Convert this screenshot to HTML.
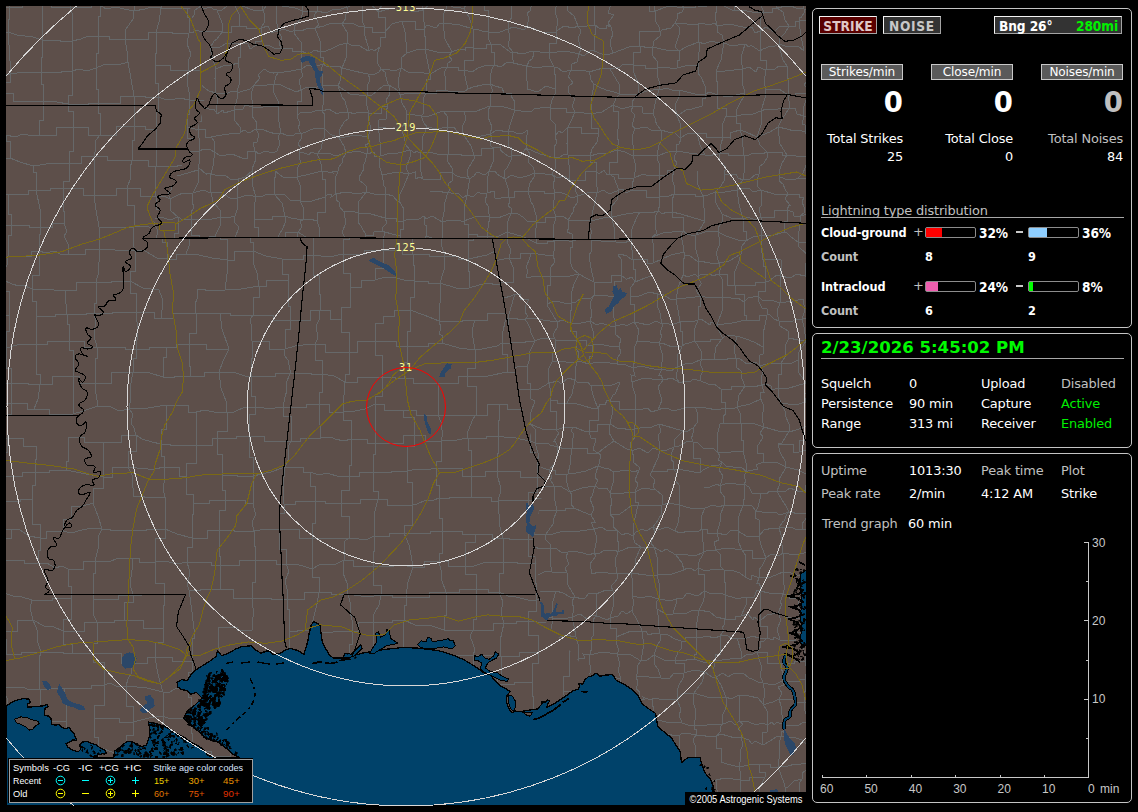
<!DOCTYPE html>
<html lang="en"><head><meta charset="utf-8"><title>Lightning Detector</title>
<style>
html,body{margin:0;padding:0;background:#000;}
body{width:1138px;height:812px;position:relative;overflow:hidden;font-family:"DejaVu Sans","Liberation Sans",sans-serif;color:#fff;}
.abs{position:absolute;white-space:nowrap;}
.panel{position:absolute;box-sizing:border-box;border:1px solid #c4c4c4;border-radius:5px;}
.v{font-family:"DejaVu Sans","Liberation Sans",sans-serif;font-size:12.9px;line-height:16px;color:#fff;letter-spacing:-0.15px;}
.g{color:#c0c0c0;}
.gr{color:#00f000;}
.tb{font-family:"DejaVu Sans Condensed","DejaVu Sans","Liberation Sans",sans-serif;font-weight:bold;font-size:12.6px;line-height:16px;letter-spacing:-0.1px;}
.btn{position:absolute;box-sizing:border-box;border:1px solid;border-color:#f4f4f4 #a4a4a4 #a4a4a4 #f4f4f4;text-align:center;}
.lbl{position:absolute;box-sizing:border-box;border:1px solid #c8c8c8;background:#5a5a5a;text-align:center;height:16px;width:82px;font-size:12.1px;line-height:14px;color:#fff;letter-spacing:-0.15px;}
.big{position:absolute;font-family:"DejaVu Sans","Liberation Sans",sans-serif;font-weight:bold;font-size:27.5px;line-height:30px;text-align:right;width:60px;}
.bar{position:absolute;box-sizing:border-box;width:51px;height:11px;border:1px solid #8c8c8c;border-radius:2px;background:#000;}
.bar i{position:absolute;left:0;top:0;height:9px;display:block;}
.ax{font-family:"Liberation Sans","DejaVu Sans",sans-serif;font-size:12px;line-height:12px;color:#c8c8c8;}
</style></head>
<body>
<svg class="abs" style="left:6px;top:6px;" width="800" height="800" viewBox="6 6 800 800">
<rect x="6" y="6" width="800" height="800" fill="#5d4f4a"/>
<defs><clipPath id="mc"><rect x="6" y="6" width="800" height="800"/></clipPath></defs>
<g clip-path="url(#mc)" shape-rendering="crispEdges">
<clipPath id="cd"><path d="M190.0 6.0 806.0 6.0 806.0 806.0 700.0 806.0 544.0 620.0 533.0 540.0 545.0 481.0 520.0 400.0 492.0 238.0 145.0 238.0 190.0 150.0 205.0 105.0Z"/></clipPath><clipPath id="cs"><path d="M0 0H812V812H0Z M190.0 6.0 806.0 6.0 806.0 806.0 700.0 806.0 544.0 620.0 533.0 540.0 545.0 481.0 520.0 400.0 492.0 238.0 145.0 238.0 190.0 150.0 205.0 105.0Z" clip-rule="evenodd"/></clipPath>
<g clip-path="url(#cs)"><path d="M-27 -29 -21 -28 -11 -31 0 -28 8 -30 M-27 -29 -27 -20 -31 -20 -31 8 M8 -30 29 -30 29 -27 37 -27 M8 -30 8 -6 9 -6 9 7 M37 -27 53 -27 53 -25 63 -25 M37 -27 37 -9 42 -9 42 4 M63 -25 73 -25 78 -27 86 -27 93 -26 M63 -25 63 -17 70 -17 70 7 M93 -26 116 -26 116 -30 125 -30 M125 -30 134 -30 134 -21 160 -21 M125 -30 125 -4 134 -4 134 11 M160 -21 178 -21 178 -28 187 -28 M160 -21 162 -15 161 -7 161 3 161 8 M187 -28 197 -28 197 -20 225 -20 M225 -20 242 -20 242 -26 255 -26 M225 -20 225 -2 225 -2 225 12 M255 -26 262 -28 273 -29 283 -31 291 -30 M255 -26 255 -9 258 -9 258 3 M291 -30 304 -30 304 -28 320 -28 M291 -30 288 -22 288 -10 287 -1 284 8 M320 -28 326 -28 326 -30 343 -30 M320 -28 317 -17 315 -10 313 -1 310 6 M343 -30 351 -30 351 -21 376 -21 M343 -30 343 -13 343 -13 343 1 M376 -21 389 -24 405 -24 M376 -21 373 -4 373 9 M405 -24 431 -24 431 -27 442 -27 M405 -24 405 -10 405 -10 405 3 M442 -27 460 -27 460 -30 472 -30 M442 -27 442 -6 439 -6 439 10 M472 -30 480 -30 480 -29 497 -29 M472 -30 470 -20 469 -5 466 5 M497 -29 524 -29 524 -26 535 -26 M497 -29 497 -9 503 -9 503 11 M535 -26 544 -26 544 -24 562 -24 M535 -26 535 -10 537 -10 537 10 M562 -24 578 -24 578 -27 594 -27 M562 -24 562 -2 561 -2 561 5 M594 -27 614 -27 614 -23 630 -23 M594 -27 594 -7 593 -7 593 11 M630 -23 636 -23 636 -24 654 -24 M654 -24 666 -24 679 -23 688 -20 M688 -20 707 -20 707 -28 722 -28 M688 -20 686 -13 684 -5 685 6 M722 -28 733 -26 746 -27 756 -30 M722 -28 724 -21 721 -11 723 -4 720 3 M756 -30 764 -30 764 -22 780 -22 M756 -30 748 -10 744 5 M780 -22 795 -22 795 -25 808 -25 M808 -25 808 -8 817 -8 817 8 M-31 8 -20 6 -3 9 9 7 M-31 8 -31 25 -25 25 -25 38 M9 7 22 7 22 4 42 4 M9 7 9 19 8 19 8 32 M42 4 51 4 51 7 70 7 M42 4 42 26 42 26 42 40 M70 7 91 7 91 5 100 5 M70 7 73 16 72 27 72 41 M100 5 106 9 116 7 124 9 134 11 M100 5 100 16 98 16 98 36 M134 11 145 9 151 7 161 8 M134 11 133 19 126 29 125 39 M161 8 174 8 174 8 187 8 M161 8 159 22 156 32 M187 8 199 8 211 9 225 12 M187 8 187 17 189 17 189 33 M225 12 244 5 258 3 M225 12 225 18 221 18 221 32 M258 3 258 13 248 13 248 33 M284 8 296 5 310 6 M284 8 284 18 280 18 280 35 M310 6 332 6 332 1 343 1 M310 6 310 28 310 28 310 41 M343 1 360 1 360 9 373 9 M343 1 343 14 348 14 348 33 M373 9 373 27 375 27 375 35 M405 3 419 3 419 10 439 10 M405 3 405 24 407 24 407 32 M439 10 443 26 444 43 M466 5 476 8 491 11 503 11 M466 5 465 13 467 23 471 30 471 37 M503 11 527 11 527 10 537 10 M503 11 503 24 497 24 497 32 M537 10 553 10 553 5 561 5 M537 10 537 17 531 17 531 34 M561 5 574 5 574 11 593 11 M561 5 563 20 568 33 M593 11 614 11 614 2 631 2 M593 11 593 30 589 30 589 42 M631 2 635 1 642 3 649 1 653 3 M631 2 631 11 627 18 629 23 626 33 M653 3 665 4 675 2 685 6 M653 3 653 15 658 15 658 31 M685 6 693 8 704 7 713 6 720 3 M720 3 727 3 737 4 744 5 M720 3 720 20 723 20 723 39 M744 5 755 5 755 7 779 7 M744 5 746 17 748 27 747 35 M779 7 779 27 777 27 777 40 M817 8 817 31 812 31 812 40 M-25 38 -8 38 -8 32 8 32 M-25 38 -27 46 -28 54 -27 65 M8 32 17 35 33 37 42 40 M8 32 9 45 10 61 10 74 M42 40 60 40 60 41 72 41 M42 40 42 57 41 57 41 72 M72 41 81 39 88 36 98 36 M72 41 72 54 72 54 72 71 M98 36 109 36 109 39 125 39 M98 36 98 53 96 53 96 68 M125 39 148 39 148 32 156 32 M125 39 127 51 128 62 M156 32 172 32 172 33 189 33 M156 32 156 53 155 53 155 65 M189 33 198 31 204 32 214 33 221 32 M189 33 187 44 191 54 188 62 189 70 M221 32 233 32 233 33 248 33 M221 32 221 50 228 50 228 67 M248 33 272 33 272 35 280 35 M248 33 254 47 255 60 259 74 M280 35 292 35 292 41 310 41 M280 35 280 49 290 49 290 66 M310 41 322 38 336 37 348 33 M310 41 310 50 313 50 313 65 M348 33 368 33 368 35 375 35 M348 33 348 46 343 46 343 64 M375 35 389 33 407 32 M375 35 375 55 379 55 379 73 M407 32 425 32 425 43 444 43 M407 32 407 49 413 49 413 68 M444 43 460 43 460 37 471 37 M444 43 444 51 442 51 442 72 M471 37 484 37 484 32 497 32 M471 37 470 56 466 70 M497 32 516 32 516 34 531 34 M497 32 497 52 507 52 507 71 M531 34 546 34 546 33 568 33 M531 34 531 43 533 50 537 59 536 68 M568 33 579 33 579 42 589 42 M568 33 568 60 560 60 560 71 M589 42 609 42 609 33 626 33 M589 42 589 59 593 59 593 72 M626 33 634 33 634 31 658 31 M658 31 679 31 679 43 688 43 M658 31 658 42 656 42 656 73 M688 43 688 49 690 56 690 58 691 64 M723 39 738 39 738 35 747 35 M723 39 723 48 715 48 715 64 M747 35 754 38 763 39 770 37 777 40 M747 35 747 45 755 45 755 72 M777 40 784 39 795 38 802 40 812 40 M777 40 777 49 777 49 777 72 M812 40 812 50 818 50 818 70 M-27 65 -18 65 -18 74 10 74 M-27 65 -27 81 -27 81 -27 100 M10 74 24 72 41 72 M10 74 10 82 2 82 2 93 M41 72 61 72 61 71 72 71 M41 72 41 84 43 84 43 101 M72 71 79 69 87 71 96 68 M72 71 72 95 68 95 68 104 M96 68 103 65 111 64 118 65 128 62 M96 68 96 89 98 89 98 103 M128 62 131 79 134 96 M155 65 170 65 170 70 189 70 M155 65 155 83 158 83 158 97 M189 70 208 70 208 67 228 67 M189 70 187 79 188 87 189 92 189 100 M228 67 239 67 239 74 259 74 M228 67 228 83 220 83 220 98 M259 74 279 74 279 66 290 66 M259 74 259 90 250 90 250 104 M290 66 297 66 297 65 313 65 M290 66 286 79 283 90 283 98 M313 65 326 64 343 64 M313 65 313 89 317 89 317 104 M343 64 369 64 369 73 379 73 M343 64 347 83 346 104 M379 73 387 71 397 71 403 71 413 68 M379 73 379 82 378 82 378 99 M413 68 419 70 427 70 434 72 442 72 M413 68 413 81 409 81 409 93 M442 72 450 72 455 70 460 71 466 70 M442 72 442 87 439 87 439 95 M466 70 477 70 477 71 507 71 M466 70 466 79 465 79 465 103 M507 71 526 71 526 68 536 68 M507 71 507 78 504 88 501 90 498 99 M536 68 553 68 553 71 560 71 M536 68 536 84 536 84 536 100 M560 71 568 69 578 71 585 74 593 72 M560 71 563 87 562 99 M593 72 606 72 606 67 632 67 M593 72 593 83 596 83 596 102 M632 67 642 67 642 73 656 73 M656 73 677 73 677 64 691 64 M656 73 656 87 654 87 654 96 M691 64 691 84 691 84 691 99 M715 64 739 64 739 72 755 72 M715 64 715 85 720 85 720 102 M755 72 771 72 771 72 777 72 M755 72 755 91 755 91 755 98 M777 72 791 72 791 70 818 70 M777 72 777 85 782 85 782 99 M-27 100 -18 100 -18 93 2 93 M-27 100 -27 115 -26 130 M2 93 13 93 13 101 43 101 M43 101 57 102 68 104 M43 101 43 120 39 120 39 135 M68 104 88 104 88 103 98 103 M68 104 68 111 73 111 73 127 M98 103 120 103 120 96 134 96 M98 103 98 113 100 113 100 135 M134 96 145 96 145 97 158 97 M134 96 134 118 134 118 134 126 M158 97 164 99 175 99 180 98 189 100 M158 97 158 111 156 111 156 129 M189 100 210 100 210 98 220 98 M189 100 189 114 187 114 187 127 M220 98 227 97 233 101 243 105 250 104 M220 98 220 109 218 109 218 132 M250 104 269 104 269 98 283 98 M250 104 252 113 254 122 257 135 M283 98 291 99 301 101 308 102 317 104 M283 98 283 121 281 121 281 133 M317 104 329 104 329 104 346 104 M317 104 317 113 318 113 318 126 M346 104 359 104 359 99 378 99 M346 104 349 114 351 120 352 126 352 136 M378 99 390 99 390 93 409 93 M378 99 378 110 378 124 375 135 M409 93 425 94 439 95 M439 95 453 95 453 103 465 103 M439 95 439 116 446 116 446 134 M465 103 476 103 476 99 498 99 M465 103 465 111 467 111 467 129 M498 99 509 99 509 100 536 100 M498 99 498 113 502 113 502 128 M536 100 550 100 550 99 562 99 M536 100 536 115 529 115 529 128 M562 99 562 111 567 111 567 124 M596 102 611 102 611 100 621 100 M596 102 596 122 596 122 596 129 M621 100 643 100 643 96 654 96 M621 100 621 120 620 120 620 128 M654 96 672 98 691 99 M654 96 654 105 658 105 658 130 M691 99 700 101 710 103 720 102 M691 99 687 109 686 117 687 128 683 136 M720 102 733 102 733 98 755 98 M720 102 720 119 722 119 722 136 M755 98 773 98 773 99 782 99 M755 98 755 110 745 110 745 127 M782 99 803 99 803 101 812 101 M782 99 782 120 775 120 775 133 M-26 130 -5 130 -5 135 6 135 M-26 130 -26 144 -26 144 -26 166 M6 135 15 137 23 134 33 136 39 135 M6 135 6 141 10 141 10 158 M39 135 56 135 56 127 73 127 M73 127 88 127 88 135 100 135 M73 127 73 151 69 151 69 163 M100 135 116 135 116 126 134 126 M100 135 96 140 95 147 96 148 94 156 M134 126 145 126 145 129 156 129 M134 126 134 140 132 140 132 160 M156 129 156 139 156 139 156 166 M187 127 203 131 218 132 M187 127 187 138 194 138 194 165 M218 132 239 132 239 135 257 135 M218 132 218 152 218 152 218 165 M257 135 271 135 281 133 M257 135 257 148 249 148 249 165 M281 133 300 128 318 126 M281 133 281 146 284 146 284 159 M318 126 336 126 336 136 352 136 M318 126 318 143 317 143 317 166 M352 136 359 138 369 138 375 135 M352 136 352 150 344 150 344 157 M375 135 389 135 389 130 408 130 M375 135 373 140 376 148 378 154 378 158 M408 130 419 131 426 131 436 135 446 134 M408 130 408 149 404 149 404 157 M446 134 453 134 453 129 467 129 M446 134 446 149 435 149 435 157 M467 129 476 129 476 128 502 128 M502 128 513 129 519 129 529 128 M502 128 502 137 505 137 505 158 M529 128 543 124 553 126 567 124 M567 124 579 124 579 129 596 129 M567 124 567 140 562 140 562 155 M596 129 606 128 620 128 M620 128 639 128 639 130 658 130 M620 128 620 144 629 144 629 162 M658 130 658 153 653 153 653 161 M683 136 683 144 693 144 693 156 M722 136 722 151 723 151 723 160 M745 127 745 147 750 147 750 165 M775 133 795 133 795 126 809 126 M775 133 775 151 780 151 780 161 M809 126 809 152 814 152 814 167 M-26 166 -3 166 -3 158 10 158 M-26 166 -26 178 -27 178 -27 196 M10 158 20 162 33 166 M33 166 53 163 69 163 M33 166 33 172 36 172 36 190 M69 163 81 163 81 156 94 156 M69 163 69 181 63 181 63 188 M94 156 107 156 107 160 132 160 M94 156 94 175 94 195 M132 160 148 160 148 166 156 166 M132 160 130 169 131 177 127 188 M156 166 177 166 177 165 194 165 M156 166 155 181 156 196 M194 165 208 165 208 165 218 165 M194 165 194 172 196 172 196 194 M218 165 231 165 231 165 249 165 M218 165 218 174 220 174 220 189 M249 165 275 165 275 159 284 159 M249 165 249 184 252 184 252 192 M284 159 302 162 317 166 M284 159 284 182 281 182 281 191 M317 166 332 166 332 157 344 157 M317 166 317 188 313 188 313 198 M344 157 353 158 367 157 378 158 M344 157 344 164 351 172 353 182 353 193 M378 158 387 158 387 157 404 157 M378 158 378 175 375 175 375 198 M404 157 425 157 425 157 435 157 M404 157 404 169 407 169 407 190 M435 157 444 157 444 159 469 159 M435 157 435 173 434 173 434 191 M469 159 496 159 496 158 505 158 M469 159 472 178 471 192 M505 158 515 158 515 157 533 157 M505 158 505 176 498 176 498 192 M533 157 553 157 553 155 562 155 M533 157 533 181 527 181 527 189 M562 155 578 154 592 155 M562 155 562 165 559 165 559 191 M592 155 592 172 590 172 590 186 M629 162 643 162 643 161 653 161 M629 162 629 176 624 176 624 189 M653 161 664 159 672 158 686 157 693 156 M653 161 653 171 658 171 658 192 M693 156 710 156 710 160 723 160 M693 156 693 177 691 177 691 194 M723 160 732 160 732 165 750 165 M723 160 724 176 722 197 M750 165 767 165 767 161 780 161 M750 165 750 183 749 183 749 190 M780 161 781 168 783 176 786 183 787 188 M814 167 814 187 815 187 815 194 M-27 196 -3 196 -3 194 8 194 M8 194 28 194 28 190 36 190 M8 194 8 214 11 214 11 225 M36 190 50 190 50 188 63 188 M36 190 40 209 40 227 M63 188 83 188 83 195 94 195 M63 188 63 211 64 211 64 223 M94 195 116 195 116 188 127 188 M94 195 96 210 99 227 M127 188 140 188 140 196 156 196 M127 188 127 205 134 205 134 227 M156 196 172 196 172 194 196 194 M156 196 156 209 162 209 162 228 M196 194 210 194 210 189 220 189 M196 194 196 210 194 210 194 225 M220 189 220 205 220 205 220 217 M252 192 271 192 271 191 281 191 M252 192 252 199 250 199 250 221 M281 191 294 191 294 198 313 198 M281 191 279 205 278 216 280 227 M313 198 331 198 331 193 353 193 M313 198 313 209 317 209 317 225 M353 193 353 212 349 212 349 225 M375 198 393 198 393 190 407 190 M375 198 375 206 378 206 378 217 M407 190 423 192 434 191 M407 190 407 203 413 203 413 226 M434 191 451 191 451 192 471 192 M434 191 434 214 440 214 440 223 M471 192 485 192 498 192 M471 192 474 199 470 209 473 218 M498 192 514 192 527 189 M498 192 498 209 505 209 505 220 M527 189 536 188 546 192 559 191 M527 189 527 209 528 209 528 220 M559 191 577 191 577 186 590 186 M559 191 559 199 567 199 567 219 M590 186 608 186 608 189 624 189 M590 186 590 196 594 205 598 217 598 229 M624 189 637 189 637 192 658 192 M624 189 624 205 626 205 626 222 M658 192 671 192 671 194 691 194 M658 192 656 199 655 209 656 217 657 225 M691 194 704 194 704 197 722 197 M691 194 691 216 691 216 691 224 M722 197 733 197 733 190 749 190 M722 197 722 208 721 208 721 218 M749 190 773 190 773 188 787 188 M749 190 749 210 746 210 746 220 M787 188 807 188 807 194 815 194 M787 188 784 206 784 221 M815 194 815 210 813 210 813 217 M-30 227 -20 227 -20 225 11 225 M-30 227 -30 235 -30 235 -30 251 M11 225 29 225 29 227 40 227 M11 225 11 235 8 235 8 256 M40 227 52 227 52 223 64 223 M40 227 40 234 39 234 39 251 M64 223 67 232 64 236 68 244 68 254 M99 227 112 227 112 227 134 227 M99 227 99 239 99 239 99 249 M134 227 143 226 155 228 162 228 M134 227 133 235 133 243 135 250 M162 228 162 242 167 242 167 259 M194 225 211 225 211 217 220 217 M194 225 194 232 189 239 189 246 186 254 M220 217 234 217 234 221 250 221 M220 217 220 239 227 239 227 260 M250 221 250 242 253 242 253 251 M280 227 306 227 306 225 317 225 M317 225 326 223 337 223 349 225 M317 225 317 237 313 237 313 255 M349 225 368 225 368 217 378 217 M349 225 349 239 343 239 343 254 M378 217 389 217 389 226 413 226 M378 217 378 226 383 226 383 250 M413 226 429 226 429 223 440 223 M413 226 412 241 413 254 M440 223 464 223 464 218 473 218 M440 223 441 233 441 244 445 256 M473 218 490 218 490 220 505 220 M473 218 473 240 468 240 468 259 M505 220 503 228 501 238 502 248 M528 220 555 220 555 219 567 219 M567 219 587 219 587 229 598 229 M567 219 567 231 563 231 563 252 M598 229 609 229 609 222 626 222 M626 222 638 222 638 225 657 225 M626 222 626 241 624 241 624 258 M657 225 679 225 679 224 691 224 M657 225 657 237 651 237 651 257 M691 224 705 223 721 218 M691 224 691 232 692 232 692 249 M721 218 729 218 729 220 746 220 M721 218 720 232 721 244 724 257 M746 220 763 222 784 221 M746 220 746 229 755 229 755 251 M784 221 784 237 779 237 779 253 M813 217 813 238 818 238 818 255 M-30 251 -30 265 -27 265 -27 284 M8 256 31 256 31 251 39 251 M8 256 7 265 3 273 3 280 M39 251 46 253 55 251 60 254 68 254 M39 251 39 275 32 275 32 289 M68 254 85 254 85 249 99 249 M99 249 115 250 135 250 M99 249 100 259 98 265 98 275 96 282 M135 250 145 251 157 258 167 259 M135 250 135 271 130 271 130 281 M167 259 176 259 176 254 186 254 M186 254 199 255 212 258 227 260 M227 260 234 260 234 251 253 251 M227 260 227 274 225 290 M253 251 266 256 282 259 M253 251 254 265 257 273 259 286 M282 259 303 259 303 255 313 255 M282 259 282 274 288 274 288 280 M313 255 329 257 343 254 M313 255 313 275 319 275 319 284 M343 254 364 254 364 250 383 250 M343 254 343 273 350 273 350 287 M383 250 402 250 402 254 413 254 M383 250 383 268 375 268 375 280 M413 254 429 254 429 256 445 256 M413 254 413 265 414 265 414 281 M445 256 458 256 458 259 468 259 M445 256 444 270 440 283 M468 259 487 255 502 248 M468 259 468 271 469 271 469 288 M502 248 516 248 516 254 527 254 M502 248 502 262 508 269 508 282 M527 254 537 254 537 252 563 252 M527 254 527 270 535 270 535 283 M563 252 574 249 582 251 591 252 M591 252 607 252 607 258 624 258 M591 252 591 272 591 272 591 281 M624 258 634 259 641 256 651 257 M624 258 622 274 622 290 M651 257 660 255 674 256 680 250 692 249 M651 257 651 267 657 267 657 282 M692 249 704 249 704 257 724 257 M692 249 692 280 693 280 693 291 M724 257 746 257 746 251 755 251 M724 257 721 265 719 268 720 275 718 281 M755 251 762 251 762 253 779 253 M755 251 755 264 746 264 746 280 M779 253 798 255 818 255 M818 255 818 267 809 267 809 282 M-27 284 -16 284 -16 280 3 280 M3 280 12 284 19 286 23 285 32 289 M3 280 3 291 9 291 9 315 M32 289 42 289 49 289 59 291 65 290 M32 289 32 301 36 301 36 316 M65 290 76 290 76 282 96 282 M65 290 66 304 67 314 M96 282 111 282 111 281 130 281 M96 282 96 303 94 303 94 313 M130 281 143 288 159 290 M130 281 130 293 136 293 136 312 M159 290 162 298 162 310 161 318 M197 289 205 289 205 290 225 290 M197 289 197 299 195 304 196 313 M225 290 241 289 259 286 M259 286 266 286 266 280 288 280 M259 286 259 297 253 297 253 315 M288 280 288 306 290 306 290 320 M319 284 319 294 320 294 320 310 M350 287 361 287 361 280 375 280 M350 287 350 307 341 307 341 319 M375 280 385 277 396 278 404 280 414 281 M414 281 428 281 428 283 440 283 M414 281 414 297 410 297 410 310 M440 283 456 288 469 288 M440 283 440 303 439 321 M469 288 479 285 489 283 496 285 508 282 M508 282 525 282 525 283 535 283 M508 282 508 302 508 302 508 313 M535 283 546 285 557 284 565 284 M535 283 535 293 528 293 528 312 M565 284 565 303 564 303 564 318 M591 281 601 281 601 290 622 290 M591 281 592 295 598 306 600 319 M622 290 622 298 627 309 628 319 M657 282 669 286 679 286 693 291 M657 282 657 294 656 294 656 317 M693 291 711 291 711 281 718 281 M693 291 690 299 687 307 687 310 682 319 M718 281 718 298 716 298 716 321 M746 280 750 290 750 305 752 314 M779 280 795 280 795 282 809 282 M779 280 775 295 777 313 M809 282 812 298 814 318 M-24 321 -6 321 -6 315 9 315 M-24 321 -24 331 -30 331 -30 342 M9 315 9 331 6 331 6 348 M36 316 55 316 55 314 67 314 M36 316 36 333 36 333 36 344 M67 314 86 314 86 313 94 313 M67 314 67 324 69 324 69 341 M94 313 112 313 112 312 136 312 M94 313 96 322 94 332 94 336 97 347 M136 312 154 312 154 318 161 318 M136 312 138 331 136 349 M161 318 173 318 173 313 196 313 M196 313 214 313 214 313 220 313 M196 313 196 333 189 333 189 344 M220 313 230 313 230 315 253 315 M220 313 222 329 229 349 M253 315 273 315 273 320 290 320 M253 315 250 320 252 327 251 332 252 341 M290 320 310 320 310 310 320 310 M290 320 290 329 285 329 285 349 M320 310 330 310 330 319 341 319 M320 310 319 320 316 326 318 338 315 344 M341 319 341 332 349 332 349 352 M383 316 394 316 394 310 410 310 M383 316 383 323 375 323 375 341 M410 310 424 315 439 321 M410 310 410 331 407 331 407 346 M439 321 462 321 462 320 475 320 M439 321 441 328 439 334 443 336 442 343 M475 320 487 320 487 313 508 313 M475 320 472 330 473 338 475 350 M508 313 518 313 518 312 528 312 M508 313 505 322 503 331 502 343 M528 312 538 315 551 315 564 318 M564 318 589 318 589 319 600 319 M564 318 564 325 568 325 568 344 M600 319 610 319 610 319 628 319 M628 319 648 319 648 317 656 317 M628 319 628 340 624 340 624 352 M656 317 666 317 666 319 682 319 M656 317 655 324 659 328 657 338 657 343 M682 319 703 319 703 321 716 321 M682 319 682 326 685 326 685 346 M716 321 729 321 729 314 752 314 M716 321 716 338 721 338 721 352 M752 314 767 314 767 313 777 313 M752 314 752 323 746 323 746 346 M777 313 777 325 778 325 778 353 M814 318 814 326 810 332 808 335 808 342 M-30 342 -3 342 -3 348 6 348 M-30 342 -31 355 -32 367 -30 377 M6 348 17 345 23 344 36 344 M6 348 6 368 11 368 11 383 M36 344 47 344 47 341 69 341 M36 344 36 374 40 374 40 384 M69 341 84 341 84 347 97 347 M69 341 69 350 73 350 73 376 M97 347 125 347 125 349 136 349 M97 347 97 358 95 358 95 383 M136 349 149 349 149 347 166 347 M136 349 136 358 133 358 133 372 M166 347 176 347 176 344 189 344 M166 347 166 357 163 357 163 377 M189 344 206 344 206 349 229 349 M189 344 189 366 190 366 190 376 M229 349 223 361 219 372 M252 341 269 341 269 349 285 349 M252 341 252 358 251 358 251 376 M285 349 295 346 303 345 315 344 M285 349 284 355 288 360 290 370 290 373 M315 344 325 344 325 352 349 352 M315 344 315 360 322 360 322 374 M349 352 357 352 357 341 375 341 M349 352 349 374 345 374 345 382 M375 341 396 341 396 346 407 346 M375 341 375 355 382 355 382 377 M407 346 428 346 428 343 442 343 M407 346 407 362 404 362 404 378 M442 343 459 348 475 350 M475 350 482 349 487 348 497 346 502 343 M475 350 475 368 467 368 467 376 M502 343 522 343 522 345 539 345 M502 343 502 354 507 354 507 372 M539 345 539 358 532 358 532 382 M568 344 585 344 585 350 592 350 M568 344 568 351 567 351 567 372 M592 350 607 350 607 352 624 352 M592 350 592 356 592 364 589 373 M624 352 645 352 645 343 657 343 M624 352 624 358 628 369 631 375 M657 343 672 342 685 346 M657 343 657 362 660 362 660 383 M685 346 696 346 696 352 721 352 M685 346 685 367 686 367 686 375 M721 352 734 352 734 346 746 346 M721 352 721 366 724 379 M746 346 748 358 748 371 747 381 M778 353 786 349 799 348 808 342 M778 353 778 367 779 367 779 375 M808 342 808 353 806 353 806 381 M-30 377 -6 377 -6 383 11 383 M-30 377 -30 393 -20 393 -20 411 M11 383 28 383 28 384 40 384 M11 383 11 394 11 394 11 403 M40 384 52 384 52 376 73 376 M40 384 39 392 38 399 34 409 M73 376 79 376 79 383 95 383 M73 376 73 392 73 392 73 414 M95 383 111 383 111 372 133 372 M95 383 96 394 98 406 M133 372 150 373 163 377 M133 372 131 383 130 391 131 398 129 409 M163 377 174 377 174 376 190 376 M190 376 204 376 204 372 219 372 M219 372 227 372 236 373 245 376 251 376 M219 372 221 388 226 401 227 412 M251 376 275 376 275 373 290 373 M251 376 251 396 255 396 255 407 M290 373 311 373 311 374 322 374 M290 373 286 384 287 390 285 397 283 407 M322 374 334 376 345 382 M322 374 322 392 319 392 319 404 M345 382 357 382 357 377 382 377 M345 382 344 395 343 412 M382 377 395 377 395 378 404 378 M382 377 382 396 375 396 375 404 M404 378 413 378 413 383 438 383 M438 383 458 383 458 376 467 376 M438 383 438 393 438 393 438 415 M467 376 488 376 507 372 M467 376 467 386 476 386 476 415 M507 372 519 372 519 382 532 382 M532 382 545 380 554 374 567 372 M532 382 532 390 528 390 528 409 M567 372 574 372 574 373 589 373 M567 372 567 386 567 386 567 408 M589 373 615 373 615 375 631 375 M631 375 642 375 642 383 660 383 M631 375 631 395 627 395 627 411 M660 383 671 383 671 375 686 375 M660 383 660 393 660 393 660 413 M686 375 697 379 707 376 714 379 724 379 M724 379 731 379 731 381 747 381 M724 379 724 399 723 399 723 407 M747 381 758 381 758 375 779 375 M747 381 747 394 751 394 751 407 M779 375 793 375 793 381 806 381 M779 375 779 384 784 384 784 405 M806 381 806 390 809 390 809 406 M-20 411 -7 411 -7 403 11 403 M-20 411 -20 432 -29 432 -29 445 M11 403 27 403 27 409 34 409 M11 403 11 414 7 414 7 438 M34 409 49 409 49 414 73 414 M73 414 83 411 98 406 M98 406 107 406 111 407 119 411 129 409 M129 409 148 408 166 405 M129 409 133 414 131 423 134 428 136 435 M166 405 188 405 188 412 196 412 M166 405 166 429 161 429 161 444 M196 412 205 410 218 413 227 412 M196 412 196 433 196 433 196 445 M227 412 234 412 245 407 255 407 M227 412 227 431 217 431 217 438 M255 407 264 408 275 408 283 407 M255 407 255 414 249 414 249 436 M283 407 306 407 306 404 319 404 M283 407 283 416 291 416 291 441 M319 404 329 404 329 412 343 412 M319 404 319 415 320 425 321 438 M343 412 355 411 365 409 375 404 M343 412 343 420 351 420 351 439 M375 404 384 404 384 410 403 410 M375 404 375 420 375 420 375 443 M403 410 416 410 416 415 438 415 M403 410 403 417 414 417 414 435 M438 415 453 415 453 415 476 415 M438 415 441 422 442 430 442 437 441 441 M476 415 487 415 487 404 499 404 M476 415 473 419 470 426 467 434 468 438 M499 404 507 404 507 409 528 409 M499 404 499 420 498 420 498 436 M528 409 540 409 556 408 567 408 M528 409 528 422 530 422 530 441 M567 408 574 408 574 408 592 408 M567 408 564 415 564 425 565 428 566 436 M592 408 602 407 612 407 619 410 627 411 M592 408 592 417 589 417 589 438 M627 411 635 410 645 414 650 415 660 413 M627 411 627 422 628 422 628 436 M660 413 674 411 690 404 M660 413 658 421 657 427 655 436 M690 404 700 403 704 406 717 404 723 407 M690 404 690 414 692 414 692 441 M723 407 732 409 737 409 744 405 751 407 M723 407 718 417 717 424 714 435 M751 407 760 407 760 405 784 405 M751 407 749 417 750 423 751 431 749 441 M784 405 791 404 796 406 801 407 809 406 M784 405 784 420 783 420 783 435 M-29 445 -19 441 -11 442 0 439 7 438 M-29 445 -29 453 -26 453 -26 468 M7 438 23 438 23 446 36 446 M7 438 7 452 4 452 4 476 M36 446 36 459 35 459 35 472 M68 437 84 437 84 442 103 442 M68 437 68 461 66 461 66 470 M103 442 121 442 121 435 136 435 M103 442 103 452 103 452 103 477 M136 435 142 439 152 442 161 444 M136 435 136 451 128 451 128 467 M161 444 170 444 170 445 196 445 M161 444 161 456 164 456 164 467 M196 445 212 445 212 438 217 438 M196 445 196 463 186 463 186 476 M217 438 236 438 236 436 249 436 M217 438 217 454 222 454 222 475 M249 436 264 436 264 441 291 441 M249 436 249 457 253 457 253 476 M291 441 300 441 300 438 321 438 M291 441 288 447 288 453 288 460 285 467 M321 438 331 437 335 439 344 441 351 439 M351 439 367 439 367 443 375 443 M351 439 351 465 349 465 349 476 M375 443 403 443 403 435 414 435 M375 443 375 454 373 454 373 472 M414 435 425 435 425 441 441 441 M414 435 414 446 407 446 407 471 M441 441 457 440 468 438 M441 441 441 461 436 461 436 468 M468 438 486 438 486 436 498 436 M468 438 468 450 471 450 471 476 M498 436 504 437 512 437 520 439 530 441 M498 436 498 453 497 453 497 471 M530 441 545 441 545 436 566 436 M530 441 530 452 537 452 537 477 M566 436 576 436 576 438 589 438 M566 436 566 444 560 444 560 467 M589 438 607 435 628 436 M589 438 589 449 600 449 600 477 M628 436 635 436 635 436 655 436 M628 436 625 443 625 452 627 458 626 466 M655 436 678 436 678 441 692 441 M655 436 655 456 662 456 662 470 M692 441 703 441 703 435 714 435 M692 441 692 464 693 464 693 472 M714 435 735 435 735 441 749 441 M714 435 714 454 723 454 723 467 M749 441 767 441 767 435 783 435 M749 441 749 459 753 459 753 468 M783 435 797 440 808 442 M783 435 781 446 782 457 780 466 780 475 M808 442 812 456 816 467 M-26 468 -26 483 -28 483 -28 501 M4 476 22 476 22 472 35 472 M35 472 49 472 49 470 66 470 M35 472 35 485 32 485 32 499 M66 470 86 474 103 477 M103 477 112 477 112 467 128 467 M103 477 103 488 93 488 93 503 M128 467 137 468 148 469 155 469 164 467 M128 467 132 475 133 488 133 496 M164 467 179 467 179 476 186 476 M164 467 165 477 163 489 165 497 M186 476 186 494 193 494 193 503 M222 475 237 475 237 476 253 476 M222 475 222 490 225 490 225 500 M253 476 271 472 285 467 M253 476 253 494 253 494 253 503 M285 467 303 467 303 472 310 472 M285 467 283 487 284 504 M310 472 319 475 327 473 340 477 349 476 M310 472 310 486 315 486 315 501 M349 476 359 476 359 472 373 472 M349 476 349 490 341 490 341 503 M373 472 391 472 391 471 407 471 M373 472 373 491 378 491 378 499 M407 471 417 469 426 470 436 468 M407 471 407 482 412 482 412 505 M436 468 462 468 462 476 471 476 M436 468 436 485 439 485 439 498 M471 476 485 476 485 471 497 471 M471 476 471 484 471 484 471 497 M497 471 520 471 520 477 537 477 M497 471 498 478 500 485 500 494 498 501 M537 477 545 477 545 467 560 467 M537 477 537 492 528 492 528 501 M560 467 575 467 575 477 600 477 M600 477 616 477 616 466 626 466 M600 477 600 485 597 485 597 497 M626 466 645 466 645 470 662 470 M626 466 626 495 629 495 629 505 M662 470 658 476 662 484 660 487 657 497 M693 472 713 472 713 467 723 467 M693 472 692 483 692 492 688 501 M723 467 736 469 753 468 M723 467 723 486 724 486 724 498 M753 468 765 468 765 475 780 475 M753 468 756 488 754 508 M780 475 802 475 802 467 816 467 M780 475 780 497 784 497 784 506 M816 467 816 481 808 481 808 508 M-28 501 -6 501 -6 501 6 501 M-28 501 -28 521 -25 521 -25 538 M6 501 20 501 20 499 32 499 M32 499 32 524 40 524 40 538 M71 507 83 506 93 503 M71 507 71 519 63 519 63 531 M93 503 98 516 102 529 M133 496 144 496 144 497 165 497 M165 497 165 515 165 515 165 529 M193 503 209 503 209 500 225 500 M193 503 193 514 192 514 192 538 M225 500 245 500 245 503 253 503 M225 500 225 510 219 510 219 530 M253 503 255 512 255 516 252 522 254 531 M284 504 295 504 295 501 315 501 M284 504 284 513 279 513 279 529 M315 501 325 501 325 503 341 503 M315 501 315 523 312 523 312 538 M341 503 360 503 360 499 378 499 M341 503 341 516 349 516 349 538 M378 499 387 499 387 505 412 505 M378 499 374 515 374 536 M412 505 417 504 426 500 434 500 439 498 M412 505 412 525 404 525 404 533 M439 498 449 498 449 497 471 497 M439 498 439 518 442 518 442 531 M471 497 491 497 491 501 498 501 M498 501 514 500 528 501 M498 501 499 514 500 527 503 538 M528 501 539 498 552 498 564 496 M528 501 530 512 526 520 529 527 528 539 M564 496 564 507 566 516 566 525 566 532 M597 497 605 498 611 502 619 503 629 505 M597 497 596 505 598 513 599 520 599 530 M629 505 647 505 647 497 657 497 M629 505 629 514 632 520 631 526 632 534 M657 497 669 497 669 501 688 501 M657 497 657 521 655 521 655 536 M688 501 705 501 705 498 724 498 M724 498 744 498 744 508 754 508 M724 498 724 516 722 516 722 528 M754 508 762 508 762 506 784 506 M754 508 754 518 754 518 754 530 M784 506 801 506 801 508 808 508 M784 506 784 527 783 527 783 539 M808 508 808 524 813 524 813 535 M-25 538 -14 538 -14 529 11 529 M-25 538 -25 550 -27 558 M11 529 20 530 29 536 40 538 M11 529 11 538 0 538 0 560 M40 538 46 538 46 531 63 531 M40 538 40 550 38 550 38 563 M63 531 71 533 82 530 93 528 102 529 M102 529 110 529 110 530 135 530 M102 529 98 537 98 549 95 561 M135 530 146 530 146 529 165 529 M165 529 177 534 192 538 M165 529 165 538 155 538 155 562 M192 538 207 538 207 530 219 530 M192 538 192 547 187 547 187 562 M219 530 234 530 234 531 254 531 M219 530 219 556 220 556 220 565 M254 531 266 529 279 529 M254 531 254 546 255 546 255 560 M279 529 299 529 299 538 312 538 M279 529 279 549 286 549 286 564 M312 538 325 538 325 538 349 538 M312 538 312 561 312 561 312 569 M349 538 359 539 368 539 374 536 M349 538 345 541 344 548 345 554 344 560 M374 536 389 536 389 533 404 533 M374 536 374 551 373 551 373 566 M404 533 430 533 430 531 442 531 M404 533 409 545 411 555 413 567 M442 531 462 531 462 534 475 534 M442 531 442 553 439 553 439 561 M475 534 492 534 492 538 503 538 M475 534 475 542 465 542 465 566 M503 538 509 538 509 539 528 539 M503 538 503 550 503 550 503 562 M528 539 541 539 541 532 566 532 M528 539 528 556 535 556 535 563 M566 532 580 532 580 530 599 530 M566 532 566 548 569 548 569 567 M599 530 595 541 596 548 594 557 592 569 M632 534 644 534 644 536 655 536 M632 534 632 544 621 544 621 564 M655 536 665 536 665 529 687 529 M655 536 655 549 656 549 656 561 M687 529 698 530 706 527 711 530 722 528 M687 529 687 542 683 542 683 567 M722 528 722 548 713 548 713 565 M754 530 768 530 768 539 783 539 M754 530 753 547 755 560 M783 539 804 539 804 535 813 535 M783 539 781 544 778 551 779 559 777 565 M813 535 813 557 812 557 812 566 M-27 558 -27 578 -21 578 -21 591 M0 560 24 560 24 563 38 563 M38 563 47 563 55 568 62 566 68 569 M68 569 83 569 83 561 95 561 M68 569 68 586 71 586 71 598 M95 561 109 562 118 558 132 558 M95 561 95 573 93 573 93 599 M132 558 139 558 139 562 155 562 M132 558 132 570 130 584 133 595 M155 562 165 561 177 564 187 562 M155 562 155 583 164 583 164 594 M187 562 211 562 211 565 220 565 M187 562 189 569 190 574 187 584 189 590 M220 565 239 565 239 560 255 560 M220 565 220 571 220 571 220 589 M255 560 276 560 276 564 286 564 M255 560 255 582 252 582 252 598 M286 564 296 564 306 567 312 569 M286 564 289 571 285 581 287 589 287 599 M312 569 321 564 334 565 344 560 M312 569 312 577 319 577 319 592 M344 560 353 560 353 566 373 566 M344 560 343 573 347 583 348 594 M373 566 387 567 402 565 413 567 M373 566 373 585 381 585 381 595 M413 567 424 567 424 561 439 561 M413 567 408 582 406 597 M439 561 448 561 448 566 465 566 M439 561 441 570 442 581 446 592 M465 566 474 566 486 562 495 563 503 562 M465 566 465 574 476 574 476 589 M503 562 517 562 517 563 535 563 M503 562 503 573 499 573 499 592 M535 563 557 563 557 567 569 567 M535 563 535 583 536 583 536 600 M569 567 575 567 586 568 592 569 M569 567 569 579 567 579 567 593 M592 569 607 569 607 564 621 564 M592 569 592 579 600 579 600 593 M621 564 637 563 656 561 M621 564 621 588 623 588 623 600 M656 561 671 561 671 567 683 567 M656 561 656 577 659 577 659 597 M683 567 683 588 690 588 690 601 M713 565 725 565 725 560 755 560 M777 565 788 563 796 563 806 563 812 566 M777 565 777 576 780 576 780 598 M812 566 812 578 813 578 813 593 M-21 591 -11 591 -11 593 4 593 M-21 591 -21 608 -28 608 -28 627 M4 593 13 596 22 597 32 600 M4 593 1 602 4 610 1 623 1 631 M32 600 52 600 52 598 71 598 M32 600 30 608 33 620 M71 598 71 619 63 619 63 631 M93 599 118 599 118 595 133 595 M93 599 93 608 93 614 97 622 M133 595 141 595 141 594 164 594 M133 595 133 602 124 602 124 620 M164 594 164 605 163 605 163 628 M189 590 200 590 200 589 220 589 M189 590 192 612 194 629 M220 589 233 589 233 598 252 598 M252 598 271 598 271 599 287 599 M252 598 253 608 253 617 252 630 M287 599 304 599 304 592 319 592 M287 599 287 609 289 609 289 631 M319 592 331 592 331 594 348 594 M319 592 317 604 313 620 311 630 M348 594 367 597 381 595 M348 594 350 602 350 611 352 620 352 631 M381 595 392 595 392 597 406 597 M381 595 379 605 374 614 373 622 M406 597 429 597 429 592 446 592 M406 597 406 605 404 605 404 620 M446 592 459 592 459 589 476 589 M446 592 446 615 444 615 444 630 M476 589 488 589 488 592 499 592 M476 589 476 619 473 619 473 630 M499 592 508 596 516 597 528 600 536 600 M499 592 503 602 501 613 504 623 M536 600 553 597 567 593 M536 600 536 611 528 611 528 621 M567 593 577 593 577 593 600 593 M567 593 567 604 567 604 567 622 M600 593 615 593 615 600 623 600 M600 593 600 607 593 607 593 625 M623 600 623 606 620 606 620 623 M659 597 666 597 666 601 690 601 M659 597 659 609 654 609 654 629 M719 599 736 599 736 599 752 599 M719 599 719 619 725 619 725 626 M752 599 768 599 780 598 M752 599 752 619 754 619 754 627 M780 598 795 598 795 593 813 593 M780 598 780 609 775 609 775 625 M813 593 813 620 811 620 811 629 M-28 627 -16 627 -16 631 1 631 M-28 627 -28 640 -27 640 -27 659 M1 631 17 631 17 620 33 620 M1 631 1 639 6 639 6 654 M33 620 44 626 54 627 63 631 M33 620 38 632 37 640 41 652 M63 631 84 631 84 622 97 622 M63 631 63 644 72 644 72 653 M97 622 114 622 114 620 124 620 M97 622 97 643 93 643 93 653 M124 620 143 620 143 628 163 628 M163 628 163 642 155 642 155 657 M194 629 194 638 192 638 192 661 M218 627 237 627 237 630 252 630 M218 627 218 648 219 648 219 657 M289 631 297 631 297 630 311 630 M289 631 289 652 282 652 282 662 M311 630 326 633 340 631 352 631 M311 630 311 641 313 641 313 654 M352 631 358 631 358 622 373 622 M352 631 352 644 349 644 349 657 M373 622 392 622 392 620 404 620 M373 622 373 634 373 634 373 659 M404 620 415 625 432 626 444 630 M404 620 403 640 404 660 M444 630 460 630 460 630 473 630 M473 630 493 630 493 623 504 623 M473 630 470 636 473 644 475 650 473 655 M504 623 516 623 516 621 528 621 M504 623 500 641 501 656 M528 621 545 623 567 622 M528 621 528 635 538 635 538 652 M567 622 580 622 580 625 593 625 M567 622 567 638 569 638 569 651 M593 625 605 624 620 623 M593 625 593 644 591 644 591 654 M620 623 642 623 642 629 654 629 M620 623 620 636 631 636 631 657 M654 629 672 624 686 624 M654 629 654 649 656 649 656 662 M686 624 703 624 703 626 725 626 M686 624 686 633 685 633 685 657 M725 626 734 625 746 629 754 627 M725 626 721 635 723 650 719 660 M754 627 754 637 756 645 751 649 753 659 M775 625 787 625 787 629 811 629 M775 625 775 645 779 645 779 655 M811 629 811 647 808 647 808 661 M-27 659 -7 659 -7 654 6 654 M6 654 21 654 21 652 41 652 M41 652 63 652 63 653 72 653 M41 652 39 659 40 672 39 678 40 689 M72 653 84 653 84 653 93 653 M93 653 121 653 121 663 133 663 M93 653 93 662 104 662 104 685 M133 663 147 663 147 657 155 657 M133 663 131 670 132 672 128 679 126 686 M155 657 172 657 172 661 192 661 M155 657 157 669 159 678 163 692 M192 661 192 672 188 672 188 684 M219 657 239 657 239 661 252 661 M219 657 219 667 220 667 220 686 M252 661 252 667 254 677 254 684 M282 662 295 662 295 654 313 654 M282 662 282 673 283 673 283 684 M313 654 322 657 330 657 341 658 349 657 M313 654 316 672 322 691 M349 657 361 655 373 659 M349 657 349 679 342 679 342 694 M373 659 391 659 391 660 404 660 M373 659 373 668 373 668 373 687 M404 660 427 660 427 660 442 660 M404 660 404 674 415 674 415 692 M442 660 452 660 452 655 473 655 M442 660 443 670 443 677 443 687 M473 655 494 655 494 656 501 656 M473 655 473 681 467 681 467 690 M501 656 519 656 519 652 538 652 M501 656 501 675 497 675 497 684 M538 652 538 663 532 663 532 682 M569 651 585 651 585 654 591 654 M569 651 569 676 563 676 563 691 M591 654 603 654 603 657 631 657 M591 654 591 675 597 675 597 688 M631 657 641 657 641 662 656 662 M631 657 631 666 628 666 628 688 M656 662 666 659 675 657 685 657 M656 662 656 680 653 680 653 689 M685 657 699 657 699 660 719 660 M685 657 685 676 687 676 687 691 M719 660 731 660 731 659 753 659 M719 660 719 674 724 674 724 687 M753 659 764 659 764 655 779 655 M753 659 750 676 751 691 M779 655 792 655 792 661 808 661 M779 655 779 666 780 666 780 685 M808 661 808 678 815 678 815 693 M-23 691 -8 691 -8 687 2 687 M-23 691 -23 712 -22 712 -22 721 M2 687 12 687 23 687 29 690 40 689 M2 687 7 698 9 709 10 721 M40 689 49 689 49 688 64 688 M40 689 40 708 39 708 39 718 M64 688 91 688 91 685 104 685 M64 688 64 699 66 699 66 721 M104 685 110 683 118 687 126 686 M104 685 104 705 94 705 94 718 M126 686 147 688 163 692 M126 686 126 706 133 706 133 722 M163 692 170 692 175 689 184 687 188 684 M163 692 163 707 163 707 163 716 M188 684 201 684 201 686 220 686 M188 684 188 697 191 697 191 718 M220 686 236 683 254 684 M220 686 220 697 224 697 224 718 M254 684 268 684 268 684 283 684 M254 684 254 710 256 710 256 724 M283 684 310 684 310 691 322 691 M283 684 283 702 281 702 281 721 M322 691 336 691 336 694 342 694 M322 691 322 710 319 710 319 718 M342 694 361 694 361 687 373 687 M342 694 342 714 347 714 347 725 M373 687 397 687 397 692 415 692 M373 687 373 702 372 702 372 720 M415 692 432 692 432 687 443 687 M443 687 451 687 451 690 467 690 M443 687 443 708 445 708 445 719 M467 690 466 705 466 720 M497 684 514 684 514 682 532 682 M497 684 497 708 502 708 502 722 M532 682 532 696 533 696 533 721 M563 691 573 692 581 690 587 691 597 688 M563 691 565 698 563 703 567 711 568 719 M597 688 607 689 617 688 628 688 M628 688 645 688 645 689 653 689 M628 688 628 712 623 712 623 721 M653 689 670 692 687 691 M687 691 705 691 705 687 724 687 M687 691 687 704 683 704 683 725 M724 687 738 687 738 691 751 691 M724 687 724 700 717 700 717 714 M751 691 764 690 780 685 M751 691 751 699 747 699 747 718 M780 685 797 690 815 693 M780 685 781 698 778 705 775 718 M815 693 815 707 811 707 811 721 M-22 721 -1 721 -1 721 10 721 M-22 721 -25 728 -27 741 -27 747 M10 721 29 721 29 718 39 718 M10 721 10 737 3 737 3 753 M39 718 49 718 49 721 66 721 M39 718 39 729 42 729 42 750 M66 721 66 730 66 736 66 744 65 754 M94 718 119 718 119 722 133 722 M94 718 94 737 98 737 98 747 M133 722 149 718 163 716 M133 722 133 735 126 735 126 753 M163 716 170 719 178 718 184 718 191 718 M163 716 163 727 165 727 165 752 M191 718 207 718 207 718 224 718 M191 718 191 733 192 733 192 751 M224 718 248 718 248 724 256 724 M256 724 256 737 252 737 252 752 M281 721 295 721 295 718 319 718 M319 718 330 721 340 724 347 725 M319 718 319 732 316 732 316 748 M347 725 355 721 362 723 372 720 M347 725 347 734 348 734 348 746 M372 720 393 720 393 722 405 722 M372 720 377 727 380 740 382 748 M405 722 413 723 423 720 435 721 445 719 M405 722 405 734 413 734 413 747 M445 719 455 721 466 720 M445 719 445 731 439 731 439 747 M466 720 480 718 489 723 502 722 M466 720 466 738 470 738 470 746 M502 722 513 722 513 721 533 721 M502 722 502 732 496 732 496 753 M533 721 558 721 558 719 568 719 M533 721 533 737 530 737 530 747 M568 719 577 719 577 724 594 724 M568 719 568 734 562 734 562 750 M594 724 604 724 604 721 623 721 M594 724 594 743 594 743 594 752 M623 721 637 721 637 722 656 722 M656 722 665 722 665 725 683 725 M656 722 656 733 662 733 662 754 M683 725 702 719 717 714 M683 725 683 740 683 740 683 754 M717 714 730 714 730 718 747 718 M717 714 717 724 724 724 724 753 M747 718 755 718 755 718 775 718 M747 718 747 742 746 742 746 754 M775 718 789 718 789 721 811 721 M775 718 775 729 783 729 783 744 M811 721 811 730 809 739 805 747 806 755 M-27 747 -10 747 -10 753 3 753 M-27 747 -27 762 -23 762 -23 778 M3 753 14 754 28 753 42 750 M3 753 3 763 1 763 1 777 M42 750 49 750 49 754 65 754 M42 750 41 760 37 766 34 778 34 784 M65 754 65 762 66 762 66 777 M98 747 112 752 126 753 M98 747 98 762 104 762 104 785 M126 753 134 752 145 752 155 753 165 752 M126 753 126 762 126 762 126 786 M165 752 176 752 176 751 192 751 M165 752 165 773 162 773 162 784 M192 751 211 751 211 756 220 756 M192 751 192 771 194 771 194 786 M220 756 230 756 230 752 252 752 M220 756 220 765 226 765 226 785 M252 752 264 752 264 754 289 754 M252 752 252 768 250 768 250 783 M289 754 302 751 316 748 M289 754 289 763 285 763 285 784 M316 748 334 748 334 746 348 746 M316 748 316 769 315 769 315 786 M348 746 371 746 371 748 382 748 M382 748 381 760 376 765 375 777 M413 747 424 747 424 747 439 747 M413 747 413 766 409 766 409 776 M439 747 448 748 458 746 470 746 M470 746 485 746 485 753 496 753 M470 746 470 765 471 765 471 781 M496 753 506 753 506 747 530 747 M496 753 496 772 502 772 502 785 M530 747 539 747 539 750 562 750 M530 747 530 774 527 774 527 785 M562 750 568 752 576 749 587 752 594 752 M562 750 562 773 564 773 564 782 M628 748 644 753 662 754 M628 748 627 759 628 762 627 771 624 780 M662 754 675 754 675 754 683 754 M662 754 662 764 663 764 663 776 M683 754 696 754 696 753 724 753 M683 754 683 766 690 766 690 783 M724 753 740 753 740 754 746 754 M724 753 724 769 713 769 713 782 M746 754 747 767 751 773 752 786 M783 744 795 744 795 755 806 755 M783 744 783 764 779 764 779 787 M-23 778 -15 778 -11 778 -5 779 1 777 M-23 778 -23 791 -20 791 -20 806 M1 777 21 777 21 784 34 784 M1 777 5 788 4 794 4 803 9 814 M34 784 34 803 35 803 35 816 M66 777 81 777 81 785 104 785 M66 777 66 798 66 798 66 812 M104 785 113 785 113 786 126 786 M126 786 138 786 138 784 162 784 M126 786 128 792 125 797 128 807 127 811 M162 784 176 784 176 786 194 786 M162 784 162 793 160 793 160 813 M194 786 217 786 217 785 226 785 M194 786 194 794 196 794 196 810 M226 785 242 785 242 783 250 783 M250 783 276 783 276 784 285 784 M250 783 250 795 254 795 254 809 M285 784 307 784 307 786 315 786 M285 784 285 808 285 808 285 818 M315 786 329 786 329 778 348 778 M315 786 318 794 319 803 318 816 M348 778 354 775 364 777 375 777 M348 778 348 795 345 795 345 810 M375 777 388 777 388 776 409 776 M409 776 429 776 429 777 440 777 M409 776 409 790 411 790 411 815 M440 777 460 777 460 781 471 781 M440 777 440 802 434 802 434 815 M471 781 481 783 494 782 502 785 M471 781 471 797 476 797 476 813 M502 785 520 785 520 785 527 785 M502 785 502 796 497 796 497 810 M527 785 536 785 536 782 564 782 M564 782 576 782 576 785 597 785 M564 782 563 787 568 798 567 803 569 813 M597 785 612 785 612 780 624 780 M597 785 597 794 597 794 597 815 M624 780 638 780 638 776 663 776 M624 780 626 794 631 804 631 813 M663 776 674 776 674 783 690 783 M663 776 663 798 658 798 658 814 M690 783 690 791 690 791 690 813 M713 782 731 785 752 786 M713 782 717 792 718 798 721 809 M752 786 771 786 771 787 779 787 M752 786 752 797 752 797 752 811 M779 787 800 787 800 781 812 781 M779 787 779 802 784 802 784 807 M812 781 811 791 808 797 808 806 M-20 806 -12 806 -12 814 9 814 M9 814 21 814 21 816 35 816 M35 816 43 813 54 813 66 812 M99 815 109 815 109 811 127 811 M127 811 151 811 151 813 160 813 M160 813 179 813 179 810 196 810 M196 810 214 812 227 811 M227 811 238 809 254 809 M254 809 267 816 285 818 M285 818 293 820 304 819 311 817 318 816 M318 816 336 816 336 810 345 810 M345 810 357 810 357 813 376 813 M376 813 384 813 395 812 403 813 411 815 M411 815 416 813 424 817 430 816 434 815 M434 815 447 815 447 813 476 813 M476 813 483 811 485 812 492 811 497 810 M497 810 519 810 519 808 527 808 M527 808 549 808 549 813 569 813 M569 813 576 813 576 815 597 815 M597 815 608 815 608 813 631 813 M631 813 650 813 650 814 658 814 M658 814 674 814 674 813 690 813 M690 813 703 813 703 809 721 809 M752 811 769 810 784 807 M784 807 800 807 800 806 808 806" fill="none" stroke="#666869" stroke-width="1"/></g>
<g clip-path="url(#cd)"><path d="M-16 -14 -9 -16 4 -16 11 -15 M-16 -14 -16 -7 -17 -7 -17 11 M11 -15 19 -15 21 -15 27 -14 M27 -14 34 -17 44 -15 M27 -14 28 -1 31 8 M44 -15 57 -14 71 -11 M44 -15 44 -7 43 -7 43 12 M71 -11 73 -14 79 -16 85 -17 M71 -11 67 -9 71 -2 69 -0 66 3 M85 -17 91 -15 98 -14 99 -16 106 -11 M85 -17 86 -9 90 -2 93 4 M106 -11 119 -14 134 -20 M106 -11 110 -8 108 -1 109 1 M134 -20 144 -15 159 -9 M134 -20 134 -1 127 -1 127 7 M159 -9 167 -9 167 -14 176 -14 M159 -9 152 -2 150 7 M176 -14 184 -15 191 -21 M176 -14 173 -10 174 -3 174 -0 172 5 M191 -21 201 -18 216 -20 M191 -21 197 -10 201 6 M233 -18 242 -14 247 -16 252 -15 M233 -18 235 -10 234 -7 235 -5 233 2 M252 -15 264 -10 278 -11 M252 -15 258 -5 260 -1 263 10 M278 -11 287 -15 300 -13 M278 -11 281 -8 278 -3 278 -2 276 2 M300 -13 315 -13 315 -13 321 -13 M300 -13 304 -7 302 5 303 11 M321 -13 330 -13 332 -13 341 -18 M321 -13 320 -4 317 11 M341 -18 347 -17 353 -13 361 -8 369 -9 M341 -18 345 -5 347 7 M369 -9 375 -13 382 -11 388 -13 M369 -9 364 -5 363 -2 362 1 M388 -13 397 -12 403 -18 M388 -13 386 -4 384 1 378 12 M403 -18 414 -22 423 -20 M403 -18 400 -5 402 8 M423 -20 438 -20 438 -16 450 -16 M423 -20 422 -13 422 2 423 10 M450 -16 456 -15 460 -17 469 -14 472 -16 M450 -16 447 -12 448 -7 447 -4 448 4 M472 -16 476 -15 484 -13 487 -9 494 -11 M472 -16 469 -11 468 -1 464 9 M494 -11 496 -11 502 -14 500 -15 504 -18 M494 -11 488 -6 485 -4 484 3 M504 -18 523 -18 523 -15 536 -15 M504 -18 504 0 511 0 511 10 M536 -15 537 -9 533 -4 532 3 M558 -16 563 -16 563 -13 568 -13 M558 -16 559 -8 557 2 M568 -13 578 -13 590 -15 597 -18 M568 -13 568 -6 567 -6 567 3 M597 -18 606 -16 610 -17 M597 -18 595 -6 593 1 M610 -17 623 -17 629 -15 642 -12 M610 -17 610 -6 611 -6 611 4 M642 -12 644 -16 648 -16 652 -18 M642 -12 638 -7 638 -4 640 -0 637 2 M652 -18 662 -16 667 -22 673 -20 M652 -18 652 -3 655 11 M673 -20 674 -8 679 1 684 8 M703 -19 706 -18 717 -18 721 -16 M703 -19 704 -12 702 -2 701 7 M721 -16 730 -16 737 -12 M721 -16 717 -7 717 -6 716 0 M737 -12 750 -11 758 -13 M737 -12 734 1 735 11 M758 -13 766 -15 778 -16 M758 -13 759 -2 759 2 764 12 M778 -16 776 -11 776 -4 775 4 777 8 M801 -18 813 -18 821 -12 831 -11 M801 -18 800 -3 804 9 M831 -11 827 -2 828 3 823 12 M-17 11 -12 9 -1 9 3 5 M-17 11 -18 12 -19 17 -20 25 -20 28 M3 5 12 7 24 4 31 8 M3 5 4 9 3 16 7 23 9 32 M31 8 36 7 38 13 43 12 M31 8 31 10 30 16 32 22 30 29 M43 12 45 21 47 24 52 32 M93 4 102 2 109 1 M93 4 97 19 95 31 M109 1 113 1 122 7 127 7 M109 1 112 16 110 30 M127 7 136 9 143 6 150 7 M150 7 156 6 168 8 172 5 M150 7 152 10 151 17 151 22 154 26 M172 5 184 7 190 3 201 6 M172 5 172 13 176 14 172 24 175 28 M201 6 204 9 211 7 213 9 217 10 M201 6 195 10 194 15 191 20 190 29 M217 10 222 10 227 6 227 4 233 2 M217 10 220 18 223 25 222 32 M233 2 242 6 253 10 263 10 M233 2 239 14 240 26 M263 10 267 5 271 6 276 2 M263 10 265 16 264 23 261 28 M276 2 282 6 295 8 303 11 M276 2 276 17 278 31 M303 11 308 11 308 11 317 11 M303 11 301 19 296 23 294 28 295 30 M317 11 326 13 334 9 338 10 347 7 M317 11 314 16 316 18 319 25 315 28 M347 7 348 7 354 3 356 1 362 1 M347 7 348 11 345 16 346 18 342 24 M362 1 365 2 372 6 375 8 378 12 M362 1 363 9 362 21 365 27 M378 12 392 8 402 8 M378 12 378 17 385 17 385 32 M402 8 414 12 423 10 M423 10 429 5 439 6 448 4 M423 10 424 22 424 29 M448 4 453 7 458 7 464 9 M448 4 445 11 443 15 443 23 M464 9 467 4 477 4 481 1 484 3 M464 9 469 17 473 29 M484 3 484 10 488 10 488 32 M511 10 512 17 508 23 508 29 M532 3 544 3 557 2 M532 3 530 11 527 13 529 19 527 26 M557 2 560 5 566 3 567 3 M557 2 555 12 558 21 556 32 M567 3 585 3 585 1 593 1 M567 3 568 11 574 16 578 26 M593 1 596 1 605 4 611 4 M593 1 594 6 594 15 595 25 M611 4 617 3 629 5 637 2 M611 4 608 13 614 15 608 23 611 27 M637 2 649 2 649 11 655 11 M655 11 669 6 684 8 M655 11 655 14 656 22 659 27 660 32 M684 8 688 7 695 7 695 5 701 7 M684 8 682 12 677 14 678 17 675 23 M701 7 707 6 716 0 M716 0 720 3 726 7 732 10 735 11 M716 0 717 9 715 16 717 26 M735 11 742 10 752 12 757 13 764 12 M764 12 772 12 772 8 777 8 M764 12 760 20 760 31 M777 8 786 6 791 6 796 8 804 9 M777 8 783 12 785 20 787 23 789 26 M804 9 811 10 819 9 823 12 M804 9 805 11 801 18 799 17 799 21 M823 12 828 17 829 21 M-20 28 -13 29 -1 32 9 32 M-20 28 -18 34 -17 41 -14 44 -12 49 M9 32 17 32 21 30 30 29 M9 32 9 38 4 38 4 51 M30 29 40 30 52 32 M30 29 24 38 21 44 M52 32 62 32 67 29 M52 32 50 36 46 38 47 42 M67 29 84 30 95 31 M67 29 67 39 73 39 73 45 M110 30 117 29 126 29 128 27 136 28 M110 30 109 40 113 47 M136 28 143 29 150 28 154 26 M136 28 134 32 133 38 132 42 134 50 M154 26 166 29 175 28 M154 26 155 31 157 40 156 46 157 54 M175 28 177 37 176 44 M190 29 203 32 214 31 222 32 M190 29 189 36 193 42 195 44 M222 32 231 32 231 26 240 26 M222 32 217 39 214 41 210 48 M240 26 246 26 246 28 261 28 M261 28 268 26 271 32 274 32 278 31 M261 28 261 41 255 41 255 46 M278 31 284 29 291 32 295 30 M278 31 282 38 279 43 281 48 M295 30 301 31 306 29 315 28 M295 30 294 33 299 40 302 43 301 51 M315 28 324 26 331 23 342 24 M315 28 320 41 320 52 M342 24 352 23 358 26 365 27 M342 24 347 32 347 43 M365 27 372 27 372 32 385 32 M365 27 364 33 368 46 368 51 M385 32 392 24 402 21 M385 32 385 37 380 37 380 47 M402 21 415 21 415 29 424 29 M402 21 405 32 406 42 407 53 M424 29 427 25 436 28 440 23 443 23 M424 29 424 36 425 36 425 49 M443 23 460 25 473 29 M443 23 445 39 452 52 M473 29 479 30 482 31 487 31 488 32 M473 29 473 37 473 37 473 48 M488 32 495 33 500 32 508 29 M488 32 488 38 491 44 M508 29 513 27 521 29 525 29 527 26 M508 29 510 36 508 46 513 52 M527 26 542 32 556 32 M556 32 558 30 564 26 573 28 578 26 M556 32 556 43 549 43 549 53 M578 26 587 26 595 25 M578 26 581 31 578 39 581 49 579 54 M595 25 599 28 606 28 606 25 611 27 M595 25 595 34 594 34 594 51 M611 27 613 34 611 39 610 44 613 53 M640 31 649 31 660 32 M640 31 639 36 640 46 M660 32 662 30 671 28 675 23 M660 32 660 36 653 42 654 45 652 47 M675 23 687 24 698 24 M675 23 679 27 679 35 675 47 679 51 M698 24 701 23 709 25 715 23 717 26 M698 24 698 32 699 42 M717 26 729 24 743 27 M717 26 717 32 722 35 724 43 M743 27 749 28 752 27 755 33 760 31 M760 31 766 27 774 32 780 26 789 26 M760 31 760 38 760 51 M789 26 792 27 796 26 795 22 799 21 M789 26 785 33 783 35 780 38 779 44 M799 21 817 19 829 21 M799 21 801 36 804 51 M829 21 829 33 829 50 M-12 49 -6 52 -4 52 -1 52 4 51 M-12 49 -14 56 -9 58 -12 61 -10 69 M4 51 13 50 21 44 M4 51 3 54 10 60 12 61 11 64 M21 44 32 43 47 42 M21 44 22 49 21 58 23 64 24 69 M47 42 59 41 65 45 73 45 M47 42 46 51 49 56 48 64 45 72 M73 45 77 43 86 43 M73 45 72 53 73 58 74 66 71 69 M86 43 85 49 90 55 90 61 94 70 M113 47 121 51 128 48 134 50 M134 50 140 50 142 51 151 51 157 54 M134 50 134 59 136 59 136 74 M157 54 157 66 149 66 149 73 M176 44 180 47 189 44 195 44 M176 44 178 60 180 69 M195 44 192 48 196 56 193 58 196 65 M210 48 220 47 227 43 240 44 M210 48 213 60 216 69 M240 44 246 43 248 44 250 49 255 46 M240 44 240 57 238 57 238 63 M255 46 260 45 268 45 276 49 281 48 M281 48 292 48 292 51 301 51 M301 51 306 53 310 53 315 50 320 52 M301 51 301 56 301 56 301 69 M320 52 326 51 333 48 339 45 347 43 M320 52 320 57 323 57 323 64 M347 43 351 45 360 46 368 51 M347 43 346 58 342 68 M368 51 372 49 374 51 380 47 M380 47 377 54 378 64 381 69 M407 53 416 50 425 49 M407 53 401 58 401 68 M425 49 441 53 452 52 M425 49 427 59 430 74 M452 52 459 49 465 50 465 47 473 48 M452 52 449 56 452 60 447 64 447 67 M473 48 486 48 486 44 491 44 M473 48 473 60 464 60 464 70 M491 44 495 44 501 45 510 52 513 52 M491 44 491 52 494 52 494 65 M513 52 522 54 533 51 M513 52 512 56 513 60 514 61 513 63 M533 51 540 52 549 53 M533 51 534 54 532 59 529 61 527 66 M549 53 566 51 579 54 M549 53 549 57 554 67 M579 54 584 56 591 50 594 51 M579 54 577 62 572 64 571 70 M594 51 602 54 606 55 610 54 613 53 M613 53 629 47 640 46 M640 46 644 46 644 47 652 47 M640 46 640 52 633 52 633 65 M652 47 666 50 679 51 M652 47 652 55 657 61 657 68 M679 51 688 46 699 42 M679 51 679 60 677 60 677 68 M699 42 704 44 711 41 715 42 724 43 M699 42 699 52 698 56 699 65 M724 43 732 46 745 44 M724 43 722 54 721 60 716 71 M745 44 749 47 751 45 755 48 760 51 M745 44 743 51 741 57 741 61 743 69 M760 51 763 49 771 46 775 46 779 44 M760 51 760 60 766 60 766 70 M779 44 788 47 798 46 804 51 M779 44 780 50 783 60 787 66 M829 50 830 56 828 59 827 63 830 67 M11 64 13 66 17 65 24 69 M11 64 7 77 3 96 M24 69 32 73 41 73 45 72 M24 69 29 78 31 82 32 86 M45 72 55 71 55 69 65 71 71 69 M45 72 47 77 46 88 45 93 M71 69 65 76 66 85 M94 70 96 71 99 70 107 70 109 68 M94 70 97 78 94 84 94 89 M109 68 113 72 121 74 132 74 136 74 M109 68 109 71 114 80 114 86 M136 74 143 74 149 73 M149 73 162 72 169 69 180 69 M149 73 146 79 145 81 150 82 147 86 M180 69 188 67 196 65 M180 69 176 76 179 84 176 95 M196 65 200 74 201 85 M216 69 225 65 231 65 238 63 M216 69 215 78 216 78 215 87 216 93 M238 63 240 73 239 77 239 85 237 92 M264 69 269 72 273 73 273 72 278 73 M264 69 258 75 260 78 254 85 M278 73 291 71 301 69 M278 73 276 76 274 84 M301 69 308 65 314 67 323 64 M301 69 303 76 299 80 301 90 M323 64 326 66 333 67 339 66 342 68 M323 64 321 70 323 77 322 86 M342 68 346 69 354 71 363 73 368 74 M342 68 341 75 340 81 338 86 M368 74 373 75 379 72 381 69 M368 74 370 79 367 87 367 96 M381 69 385 69 390 70 397 70 401 68 M381 69 385 72 386 77 388 84 389 85 M401 68 408 72 418 72 430 74 M401 68 398 81 400 95 M430 74 436 71 435 71 441 68 447 67 M430 74 430 79 426 79 426 93 M447 67 458 67 458 70 464 70 M447 67 444 73 445 76 446 84 445 90 M464 70 472 72 478 68 487 65 494 65 M464 70 466 81 468 89 M494 65 501 67 507 62 513 63 M494 65 492 69 490 77 491 80 490 84 M513 63 522 65 527 66 M527 66 537 68 547 66 554 67 M527 66 526 73 527 81 527 89 M554 67 557 67 563 72 571 70 M554 67 554 74 555 74 555 89 M571 70 576 70 583 70 589 72 M571 70 568 77 568 76 573 83 569 86 M589 72 603 68 610 69 M589 72 591 78 590 79 594 84 M610 69 620 67 623 64 633 65 M610 69 616 79 619 84 620 94 M633 65 645 65 645 68 657 68 M633 65 634 73 638 83 638 94 M657 68 662 67 670 68 677 68 M657 68 657 74 660 85 659 89 M677 68 685 66 695 65 699 65 M699 65 698 73 701 77 706 88 705 94 M716 71 725 71 731 70 734 70 743 69 M716 71 716 81 717 81 717 95 M743 69 749 67 756 72 758 67 766 70 M743 69 742 77 742 83 744 89 744 93 M766 70 775 69 779 66 787 66 M766 70 764 82 766 89 M787 66 787 78 788 78 788 95 M807 73 817 71 822 68 830 67 M807 73 809 78 804 85 809 90 806 93 M830 67 829 73 828 80 829 85 828 89 M-17 95 -7 95 -7 96 3 96 M-17 95 -14 99 -12 106 M3 96 8 94 16 89 22 89 32 86 M32 86 39 86 39 93 45 93 M32 86 26 100 21 109 M45 93 50 92 53 86 62 90 66 85 M45 93 49 99 45 102 51 105 50 112 M66 85 80 88 94 89 M66 85 64 95 65 101 69 111 66 116 M94 89 106 84 114 86 M94 89 91 92 96 100 94 106 92 109 M114 86 119 86 126 89 131 92 M114 86 112 95 113 101 113 112 M131 92 135 89 137 91 145 87 147 86 M131 92 130 96 134 104 132 110 M147 86 157 91 168 92 176 95 M147 86 150 93 152 102 159 113 M176 95 174 103 174 107 176 108 176 114 M201 85 209 91 216 93 M201 85 199 97 201 105 M216 93 226 94 232 91 237 92 M216 93 218 100 216 108 217 114 M237 92 240 92 250 89 254 85 M237 92 237 99 234 110 M254 85 260 85 266 85 267 85 274 84 M254 85 251 94 252 100 253 107 M274 84 281 85 285 87 296 92 301 90 M274 84 273 90 274 93 279 103 278 106 M301 90 307 87 309 88 317 87 322 86 M301 90 301 101 297 101 297 116 M322 86 327 85 338 86 M322 86 324 91 323 105 322 111 M338 86 350 94 367 96 M338 86 342 97 345 101 348 112 M367 96 372 95 383 86 389 85 M367 96 366 103 369 113 M389 85 397 90 400 95 M389 85 390 94 386 100 388 106 M400 95 408 93 418 93 426 93 M400 95 402 103 406 110 406 114 M426 93 436 93 436 90 445 90 M426 93 423 99 423 105 424 113 421 116 M445 90 451 92 459 91 464 92 468 89 M468 89 473 87 482 85 490 84 M490 84 495 86 502 88 504 93 512 94 M490 84 493 91 490 95 491 100 490 106 M512 94 511 96 515 102 514 105 515 110 M527 89 538 92 546 86 555 89 M555 89 555 94 552 100 550 108 M569 86 568 92 575 99 572 106 575 112 M594 84 599 87 606 90 614 92 620 94 M594 84 591 101 591 114 M620 94 631 94 631 94 638 94 M620 94 616 98 615 101 614 103 613 105 M638 94 647 91 659 89 M638 94 635 98 632 102 633 106 M659 89 663 89 666 88 672 90 679 90 M659 89 655 104 653 114 M679 90 687 92 699 95 705 94 M679 90 679 97 675 105 677 116 M705 94 710 92 717 95 M705 94 705 98 702 98 702 106 M717 95 729 97 744 93 M717 95 717 108 726 108 726 116 M744 93 744 96 739 105 736 111 736 116 M766 89 779 89 788 95 M766 89 765 98 761 111 M788 95 795 95 795 93 806 93 M788 95 789 101 789 108 M806 93 815 91 824 92 828 89 M806 93 807 97 804 106 803 113 804 116 M828 89 830 94 830 101 829 102 828 111 M-12 106 -6 106 -6 111 4 111 M-12 106 -12 123 -9 123 -9 136 M4 111 9 108 14 110 21 109 M4 111 4 116 7 116 7 127 M21 109 33 111 50 112 M50 112 59 117 66 116 M50 112 47 114 48 117 49 124 44 127 M66 116 76 114 81 111 92 109 M92 109 101 108 113 112 M92 109 90 120 90 128 89 134 M113 112 121 111 121 110 126 108 132 110 M113 112 112 119 110 124 110 129 M132 110 149 111 159 113 M159 113 166 114 176 114 M159 113 161 121 156 132 M176 114 186 108 190 107 201 105 M176 114 180 127 180 137 M201 105 204 107 211 110 214 109 217 114 M201 105 201 121 198 121 198 129 M217 114 223 110 224 113 231 111 234 110 M234 110 243 109 245 105 253 107 M234 110 234 120 241 128 240 133 M253 107 263 107 278 106 M253 107 252 116 257 123 256 129 M278 106 278 117 281 133 M297 116 301 112 310 113 317 110 322 111 M297 116 300 124 298 127 301 134 M322 111 329 109 337 114 339 113 348 112 M322 111 325 115 324 120 324 128 M348 112 355 114 356 113 367 112 369 113 M348 112 348 119 344 122 339 131 339 138 M369 113 381 113 381 106 388 106 M369 113 368 119 371 128 368 137 M388 106 386 111 386 119 379 120 378 127 M406 114 415 115 421 116 M406 114 406 125 402 125 402 131 M421 116 429 116 443 111 M421 116 424 123 427 127 M443 111 449 111 457 112 464 111 M443 111 448 117 447 127 M464 111 477 111 490 106 M464 111 466 119 462 127 463 134 M490 106 497 106 504 107 515 110 M490 106 488 111 488 117 492 127 490 134 M515 110 521 111 531 112 M515 110 512 119 511 122 508 132 M531 112 534 109 540 108 547 107 550 108 M550 108 566 108 566 112 575 112 M550 108 550 119 555 124 555 136 M575 112 584 113 591 114 M575 112 571 121 568 127 M591 114 602 112 613 105 M591 114 591 128 598 128 598 133 M613 105 620 108 625 108 633 106 M613 105 613 111 618 111 618 129 M633 106 642 107 643 113 653 114 M633 106 631 111 635 115 632 125 635 129 M653 114 655 118 655 120 657 125 661 130 M677 116 686 110 692 109 702 106 M677 116 681 125 680 138 M726 116 731 117 736 116 M726 116 723 123 722 124 722 130 723 137 M736 116 746 114 753 114 761 111 M736 116 736 123 740 123 740 130 M761 111 766 109 775 110 781 108 789 108 M761 111 761 125 757 137 M789 108 795 108 797 114 804 116 M789 108 785 115 782 119 778 127 M804 116 815 116 828 111 M804 116 802 124 805 125 805 132 M828 111 827 120 830 120 827 130 M-9 136 -4 137 1 129 2 126 7 127 M-9 136 -8 138 -8 140 -9 148 -12 148 M7 127 6 139 2 147 3 155 M28 131 35 130 39 128 44 127 M28 131 27 137 24 146 22 151 M44 127 52 128 54 129 61 126 69 127 M44 127 47 143 51 155 M69 127 76 130 84 134 89 134 M69 127 71 136 66 149 M89 134 97 130 99 131 107 128 110 129 M89 134 89 149 88 149 88 156 M110 129 120 129 120 131 133 131 M110 129 108 138 109 140 109 148 M133 131 146 131 146 132 156 132 M133 131 133 148 135 148 135 154 M156 132 173 132 173 137 180 137 M156 132 156 143 158 158 M180 137 186 136 195 132 198 129 M180 137 177 144 179 152 M198 129 205 129 205 137 211 137 M198 129 199 138 199 151 M211 137 216 136 229 134 233 133 240 133 M211 137 215 142 214 152 M240 133 244 130 249 133 256 129 M256 129 264 130 269 132 276 134 281 133 M256 129 259 135 257 142 253 143 255 151 M281 133 286 135 294 135 296 133 301 134 M281 133 278 136 280 143 277 151 M301 134 315 128 324 128 M301 134 302 137 298 144 301 148 299 152 M324 128 330 134 339 138 M324 128 325 137 323 139 321 149 317 154 M339 138 356 135 368 137 M339 138 344 146 346 153 M368 137 370 143 365 145 367 148 367 154 M378 127 386 128 391 129 396 127 402 131 M378 127 379 133 380 142 380 150 380 156 M402 131 404 137 405 141 405 144 410 150 M427 127 437 129 447 127 M427 127 424 134 422 138 423 149 420 153 M447 127 454 127 458 133 463 134 M447 127 449 136 448 147 448 154 M463 134 477 137 490 134 M463 134 471 146 474 155 M490 134 497 130 508 132 M490 134 492 137 490 145 493 148 M508 132 512 131 518 134 523 133 528 130 M508 132 508 147 511 147 511 156 M528 130 526 140 526 148 M555 136 559 131 562 133 568 127 M555 136 557 143 554 147 554 150 555 158 M568 127 581 127 581 133 598 133 M568 127 567 144 568 155 M598 133 598 137 597 142 592 149 590 156 M618 129 617 139 619 140 617 150 M635 129 646 127 651 130 661 130 M635 129 632 136 633 145 633 156 M661 130 668 132 675 133 680 138 M661 130 662 139 659 145 657 156 M680 138 689 133 697 133 M680 138 681 139 679 144 676 145 677 151 M697 133 706 133 706 137 723 137 M697 133 700 145 705 155 M723 137 730 138 730 132 733 132 740 130 M723 137 721 144 720 148 720 153 M740 130 746 132 757 137 M740 130 743 139 742 143 743 147 744 155 M757 137 770 132 778 127 M757 137 760 145 767 152 M778 127 787 129 794 131 799 130 805 132 M778 127 780 144 787 155 M805 132 809 132 814 129 820 133 827 130 M805 132 807 136 807 142 809 152 808 157 M827 130 830 145 829 158 M-12 148 -4 154 3 155 M-12 148 -9 155 -8 166 -10 176 M3 155 5 165 6 177 M22 151 30 149 33 155 43 155 51 155 M22 151 23 157 24 159 30 167 31 173 M51 155 57 152 64 153 66 149 M51 155 47 162 47 163 47 170 M66 149 70 161 71 167 72 180 M88 156 93 155 104 153 109 148 M88 156 88 164 89 164 89 170 M109 148 116 149 127 154 135 154 M109 148 107 156 107 166 107 173 M135 154 146 158 158 158 M135 154 135 164 130 180 M158 158 164 155 174 156 179 152 M158 158 158 167 148 167 148 172 M179 152 185 152 185 151 199 151 M199 151 204 149 210 149 214 152 M199 151 200 158 199 164 198 170 M214 152 221 156 232 154 242 158 M214 152 214 158 213 166 211 174 M242 158 247 158 247 151 255 151 M255 151 259 154 265 151 273 153 277 151 M255 151 256 159 252 169 M299 152 302 152 309 155 311 152 317 154 M299 152 300 160 300 163 297 169 297 177 M317 154 329 153 335 156 346 153 M317 154 319 158 321 164 322 171 M346 153 358 151 367 154 M346 153 342 160 342 163 338 168 338 171 M367 154 374 152 375 157 380 156 M367 154 365 162 363 166 364 169 359 177 M380 156 391 153 398 153 410 150 M380 156 379 164 382 175 M410 150 415 153 416 151 420 153 M410 150 410 157 406 168 409 174 M420 153 429 152 437 154 448 154 M420 153 420 160 421 172 423 179 M448 154 461 154 461 155 474 155 M448 154 447 157 448 162 452 168 452 172 M474 155 481 155 481 148 493 148 M474 155 474 159 468 169 467 174 469 179 M493 148 500 147 500 150 508 156 511 156 M493 148 493 162 489 171 M511 156 521 155 526 148 M511 156 511 160 507 168 504 171 505 179 M526 148 540 154 555 158 M526 148 530 154 528 162 533 167 535 173 M555 158 560 157 563 155 566 154 568 155 M555 158 556 161 555 167 555 169 552 174 M568 155 578 156 582 155 590 156 M568 155 569 165 570 180 M590 156 597 154 608 153 617 150 M590 156 590 162 596 162 596 171 M617 150 625 152 633 156 M617 150 617 162 609 162 609 174 M633 156 646 155 657 156 M633 156 636 166 634 178 M657 156 668 152 677 151 M657 156 657 159 660 165 659 168 660 175 M677 151 689 153 705 155 M677 151 675 155 674 160 677 162 674 170 M705 155 711 156 714 154 718 154 720 153 M720 153 728 153 728 155 744 155 M720 153 719 160 726 167 724 174 M744 155 749 155 753 153 762 154 767 152 M744 155 745 166 743 180 M767 152 782 152 782 155 787 155 M767 152 767 158 764 163 759 167 759 174 M787 155 796 156 808 157 M787 155 782 163 780 169 779 177 M808 157 821 159 829 158 M808 157 807 163 803 173 798 178 M829 158 827 166 829 178 M-10 176 -15 181 -20 192 M6 177 10 177 16 175 22 175 31 173 M6 177 9 186 9 190 M31 173 31 180 28 183 27 190 27 195 M47 170 58 174 66 178 72 180 M47 170 46 178 51 188 53 196 M72 180 72 185 73 185 73 193 M89 170 103 170 103 173 107 173 M107 173 115 176 122 178 130 180 M107 173 108 179 109 184 112 188 116 190 M130 180 136 177 138 178 143 171 148 172 M130 180 136 185 136 192 M148 172 158 176 169 176 M148 172 150 185 154 195 M169 176 181 175 198 170 M169 176 170 180 172 189 168 193 170 199 M198 170 199 168 206 174 206 173 211 174 M198 170 198 183 193 193 M211 174 215 175 225 175 230 179 238 179 M211 174 210 180 211 193 M238 179 242 178 245 177 252 171 252 169 M238 179 238 184 237 184 237 198 M252 169 252 184 256 197 M275 171 283 177 297 177 M275 171 275 177 274 177 274 194 M297 177 310 174 322 171 M297 177 300 185 300 195 300 201 M322 171 328 172 333 173 332 172 338 171 M322 171 322 179 325 179 325 197 M338 171 335 179 336 194 M359 177 360 181 363 183 367 187 366 192 M382 175 392 173 397 172 409 174 M382 175 383 180 384 186 385 187 385 194 M409 174 415 172 415 179 420 177 423 179 M409 174 405 183 404 186 399 196 399 201 M423 179 440 179 440 172 452 172 M452 172 455 175 462 178 463 177 469 179 M452 172 453 180 448 184 450 190 448 192 M469 179 474 176 477 172 485 175 489 171 M469 179 469 183 468 189 467 195 M489 171 495 171 497 174 505 179 M489 171 487 182 487 193 M505 179 512 175 519 178 527 176 535 173 M505 179 508 188 509 197 M535 173 541 173 545 174 552 174 M535 173 534 177 530 183 528 191 M552 174 557 178 564 176 570 180 M552 174 555 179 553 184 555 193 M570 180 585 180 585 171 596 171 M570 180 571 184 575 186 575 190 578 196 M596 171 599 174 604 170 607 175 609 174 M596 171 596 180 597 187 597 193 M609 174 618 174 618 178 634 178 M609 174 614 177 616 183 619 190 M634 178 643 174 649 176 660 175 M634 178 632 185 632 190 M660 175 667 175 667 170 674 170 M660 175 659 184 659 190 659 197 M674 170 672 179 675 188 674 194 M697 171 697 178 698 185 703 196 M724 174 728 175 736 174 738 178 743 180 M724 174 724 181 721 186 715 192 M743 180 750 179 756 174 759 174 M743 180 738 186 737 190 M759 174 757 180 758 187 761 190 M779 177 781 177 785 179 796 179 798 178 M779 177 779 181 783 184 785 189 788 194 M798 178 807 179 817 176 829 178 M829 178 826 187 828 199 M-20 192 -4 194 9 190 M-20 192 -20 200 -16 209 -16 214 M9 190 19 192 27 195 M9 190 8 199 5 210 M27 195 35 194 43 195 53 196 M27 195 27 204 26 204 26 218 M53 196 59 197 68 193 73 193 M53 196 55 201 52 208 54 216 54 219 M73 193 79 195 85 195 93 194 M73 193 73 202 71 217 M93 194 107 194 107 190 116 190 M93 194 91 198 88 203 88 209 84 214 M116 190 121 190 124 193 131 193 136 192 M116 190 112 200 114 207 109 218 M136 192 144 192 154 195 M136 192 137 197 129 204 130 211 127 215 M154 195 161 195 170 199 M154 195 154 210 153 219 M170 199 178 195 183 193 193 193 M170 199 171 211 178 217 M193 193 203 190 211 193 M193 193 192 201 194 208 191 212 191 219 M211 193 220 192 230 198 237 198 M211 193 212 197 213 202 220 210 221 217 M237 198 241 197 247 195 253 196 256 197 M237 198 238 207 235 216 M256 197 263 196 267 194 269 194 274 194 M256 197 254 207 254 219 M274 194 284 194 290 200 300 201 M274 194 282 203 285 216 M300 201 312 201 325 197 M300 201 303 207 303 216 303 220 M325 197 328 194 332 195 331 197 336 194 M325 197 325 212 317 212 317 221 M336 194 345 192 358 194 366 192 M336 194 336 200 339 202 339 206 344 212 M366 192 374 194 385 194 M366 192 361 199 359 201 358 209 358 213 M385 194 386 194 393 196 398 202 399 201 M385 194 385 205 385 205 385 218 M399 201 404 209 403 221 M430 191 442 191 442 192 448 192 M448 192 451 193 459 194 463 198 467 195 M448 192 445 202 444 212 442 222 M467 195 473 197 478 192 480 193 487 193 M467 195 464 209 464 221 M487 193 494 191 495 198 501 198 509 197 M487 193 485 202 489 207 488 211 490 217 M509 197 514 197 514 191 528 191 M509 197 510 201 508 206 511 208 511 213 M528 191 544 191 544 193 555 193 M528 191 531 202 533 205 536 215 536 222 M555 193 559 192 565 194 572 198 578 196 M555 193 553 208 556 217 M578 196 590 192 597 193 M578 196 577 203 573 209 573 212 568 220 M597 193 603 190 608 193 612 193 619 190 M597 193 593 210 591 221 M619 190 623 189 626 193 632 190 M619 190 617 200 611 207 612 217 M632 190 646 190 646 197 659 197 M659 197 669 196 674 194 M659 197 659 207 658 207 658 211 M674 194 695 194 695 196 703 196 M674 194 672 201 672 212 M703 196 708 195 715 192 M703 196 704 208 705 221 M715 192 725 192 737 190 M715 192 716 203 722 214 M737 190 746 188 749 188 753 192 761 190 M737 190 739 204 743 219 M761 190 774 194 788 194 M761 190 761 195 762 205 759 208 761 217 M788 194 799 194 799 197 804 197 M788 194 785 199 790 205 789 205 787 210 M804 197 802 202 804 207 804 213 800 216 M828 199 826 203 823 210 821 215 M-16 214 -4 214 -4 210 5 210 M-16 214 -16 222 -14 222 -14 233 M5 210 10 215 21 218 26 218 M26 218 37 217 54 219 M26 218 24 226 28 227 28 235 M54 219 62 221 71 217 M71 217 78 219 82 218 84 214 M71 217 73 223 73 229 71 233 M84 214 98 214 109 218 M84 214 90 225 92 230 96 238 M109 218 107 221 109 228 111 236 M127 215 137 215 137 219 153 219 M127 215 132 229 133 239 M153 219 161 217 170 220 178 217 M153 219 155 225 158 231 156 240 M178 217 183 220 191 219 M178 217 178 233 174 233 174 243 M191 219 208 220 221 217 M191 219 191 235 199 235 199 241 M221 217 227 218 235 216 M221 217 220 226 215 236 M235 216 234 222 239 227 235 238 238 242 M254 219 272 219 272 216 285 216 M254 219 254 227 258 227 258 237 M285 216 291 218 303 220 M285 216 285 223 283 228 279 235 278 242 M303 220 310 219 317 221 M303 220 300 221 302 227 298 232 M317 221 319 227 319 237 324 242 M344 212 352 211 358 213 M344 212 346 223 342 232 345 238 M358 213 371 214 385 218 M358 213 358 222 361 226 366 235 M385 218 396 218 396 221 403 221 M385 218 387 223 383 227 382 231 385 232 M403 221 409 219 419 219 424 216 M403 221 403 229 400 229 400 236 M424 216 426 219 432 216 439 220 442 222 M424 216 425 225 427 226 426 236 M442 222 446 221 454 220 461 221 464 221 M442 222 443 228 442 239 M464 221 477 216 490 217 M464 221 464 224 468 224 468 234 M490 217 498 218 511 213 M490 217 488 226 488 228 487 236 M511 213 518 214 523 217 527 221 536 222 M511 213 508 221 507 232 M536 222 545 222 545 217 556 217 M536 222 537 225 535 231 536 239 536 243 M556 217 561 216 563 216 568 220 M556 217 553 228 554 241 M568 220 582 220 591 221 M568 220 569 227 567 232 572 234 572 241 M591 221 603 218 612 217 M591 221 589 226 592 232 590 236 591 240 M612 217 626 214 640 212 M612 217 613 223 615 231 614 237 616 242 M640 212 651 213 658 211 M640 212 637 217 633 226 631 232 631 241 M658 211 663 214 666 212 672 212 M658 211 655 217 655 227 657 233 652 237 M672 212 681 214 694 218 705 221 M672 212 672 217 683 217 683 231 M705 221 702 226 696 235 M722 214 731 218 743 219 M722 214 722 217 723 221 718 228 718 232 M743 219 748 217 755 220 761 217 M743 219 743 231 746 231 746 241 M761 217 774 217 774 210 787 210 M761 217 762 225 761 235 M787 210 793 212 794 216 800 216 M787 210 787 221 784 221 784 232 M800 216 808 214 821 215 M800 216 800 225 799 231 798 242 M821 215 821 226 823 237 M-14 233 -9 235 0 237 6 234 M-14 233 -13 243 -13 253 -10 264 M6 234 11 232 22 233 28 235 M28 235 37 231 45 235 50 231 M50 231 54 232 63 231 71 233 M50 231 50 240 53 240 53 254 M71 233 78 232 85 234 89 239 96 238 M71 233 73 243 73 246 73 256 M96 238 99 237 107 237 111 236 M96 238 94 247 90 254 M111 236 121 237 133 239 M111 236 113 249 116 264 M133 239 148 239 148 240 156 240 M156 240 155 248 154 251 149 256 149 263 M174 243 170 244 173 252 169 253 M199 241 205 239 209 237 215 236 M199 241 199 249 198 256 M215 236 220 241 228 240 230 238 238 242 M215 236 215 243 215 251 219 255 221 262 M238 242 251 238 258 237 M238 242 239 249 240 254 M258 237 265 238 269 241 271 241 278 242 M258 237 258 255 260 255 260 263 M278 242 285 242 285 232 298 232 M278 242 281 245 277 250 278 253 M298 232 309 239 324 242 M298 232 297 239 296 246 295 253 297 256 M324 242 322 244 324 246 323 250 324 254 M345 238 341 241 339 247 339 252 338 255 M366 235 373 236 374 232 378 231 385 232 M366 235 364 240 365 245 367 252 365 261 M385 232 392 234 400 236 M385 232 383 240 381 250 382 260 M400 236 402 251 410 259 M426 236 432 238 436 240 442 239 M426 236 422 244 423 256 M442 239 447 245 447 252 452 260 M468 234 477 234 477 236 487 236 M468 234 469 249 465 260 M487 236 499 236 507 232 M487 236 487 254 484 254 484 264 M507 232 524 237 536 243 M507 232 507 242 511 250 509 258 M536 243 547 243 547 241 554 241 M554 241 560 240 562 240 569 241 572 241 M554 241 554 251 553 255 M572 241 579 239 591 240 M572 241 572 247 570 247 570 262 M591 240 599 240 601 241 608 241 616 242 M591 240 591 247 592 251 589 255 M616 242 622 243 631 241 M631 241 632 250 633 259 M652 237 663 233 672 232 683 231 M652 237 654 249 653 263 M683 231 687 234 690 234 692 236 696 235 M683 231 681 235 683 245 683 246 684 252 M696 235 708 231 718 232 M696 235 695 246 699 261 M718 232 726 236 738 240 746 241 M718 232 719 237 719 246 716 253 719 263 M746 241 751 238 753 237 759 236 761 235 M746 241 741 247 741 254 M761 235 771 236 784 232 M761 235 761 245 763 260 M784 232 786 232 791 237 798 242 M798 242 806 242 806 237 823 237 M798 242 798 246 801 249 808 255 807 258 M-10 264 -5 259 -4 257 0 256 6 254 M-10 264 -11 269 -13 277 -13 279 M6 254 13 254 16 261 20 259 25 263 M6 254 8 262 11 275 M25 263 37 259 46 254 53 254 M25 263 28 267 30 271 31 269 30 275 M53 254 59 254 69 258 73 256 M53 254 53 264 49 264 49 276 M73 256 78 256 87 254 90 254 M73 256 69 267 68 282 M90 254 108 254 108 264 116 264 M90 254 93 266 93 276 93 282 M116 264 120 264 120 260 128 260 M116 264 113 271 109 273 108 279 M128 260 134 260 134 263 149 263 M128 260 127 263 129 271 127 277 129 280 M149 263 157 258 161 256 169 253 M149 263 149 269 153 273 M169 253 176 252 182 252 193 254 198 256 M198 256 209 256 221 262 M221 262 218 264 216 269 212 275 M240 254 247 255 251 262 260 263 M240 254 239 260 236 265 232 275 231 279 M260 263 263 260 272 257 276 254 278 253 M260 263 257 269 259 273 260 272 257 278 M278 253 286 257 297 256 M278 253 278 270 276 283 M297 256 301 255 310 256 320 253 324 254 M297 256 299 268 298 275 295 284 M324 254 330 254 330 255 338 255 M324 254 326 263 321 265 323 271 322 280 M338 255 349 258 353 259 365 261 M338 255 343 263 340 268 347 269 345 276 M365 261 370 262 374 259 377 258 382 260 M365 261 361 271 359 277 M382 260 390 257 398 259 401 257 410 259 M410 259 412 260 419 259 423 256 M410 259 409 268 406 279 M423 256 431 259 444 260 452 260 M423 256 421 267 423 280 M452 260 459 260 459 260 465 260 M452 260 449 266 444 277 442 283 M465 260 476 260 484 264 M484 264 491 261 499 260 509 258 M484 264 486 270 482 275 485 281 M509 258 520 258 520 253 531 253 M509 258 513 267 513 273 513 277 514 282 M531 253 538 254 545 255 553 255 M531 253 530 257 526 268 528 270 526 278 M553 255 555 262 550 268 550 276 M570 262 573 269 579 274 M589 255 591 268 594 282 M618 255 620 254 627 256 632 260 633 259 M618 255 621 259 622 270 621 275 M633 259 647 259 647 263 653 263 M633 259 633 269 635 269 635 282 M653 263 671 255 684 252 M684 252 685 255 689 255 697 261 699 261 M684 252 684 258 683 258 683 275 M699 261 710 263 719 263 M699 261 698 266 698 277 M719 263 729 261 741 254 M719 263 719 266 721 266 719 274 719 274 M741 254 738 264 735 271 734 275 735 285 M763 260 773 259 781 260 M763 260 763 266 765 266 765 282 M781 260 782 267 780 276 M807 258 817 258 817 262 825 262 M807 258 807 263 805 263 805 276 M825 262 823 268 822 276 827 278 825 284 M-13 279 -11 287 -13 294 -17 298 M11 275 17 273 22 276 30 275 M11 275 10 283 14 290 12 292 12 301 M30 275 42 275 49 276 M30 275 30 286 21 286 21 299 M49 276 53 281 61 283 68 282 M49 276 49 280 48 291 50 295 M68 282 82 282 93 282 M68 282 70 290 69 298 67 302 M93 282 96 279 98 283 103 278 108 279 M93 282 93 288 94 288 94 301 M108 279 112 278 122 281 129 280 M108 279 108 284 116 284 116 300 M129 280 127 290 130 298 131 304 M153 273 152 286 152 303 M175 282 171 283 174 288 173 292 171 298 M196 283 194 287 193 297 191 301 M212 275 224 276 231 279 M212 275 211 280 213 284 215 292 212 296 M231 279 239 279 243 280 250 278 257 278 M231 279 231 285 234 285 234 300 M257 278 260 281 264 283 269 281 276 283 M257 278 257 284 256 284 256 299 M295 284 301 280 307 280 313 280 322 280 M295 284 300 289 304 290 304 296 M322 280 325 276 333 276 337 278 345 276 M322 280 320 283 320 288 320 295 M345 276 351 276 359 277 M345 276 347 283 348 288 344 298 M359 277 359 288 360 294 M379 277 387 278 391 276 399 281 406 279 M379 277 379 284 378 286 381 289 380 297 M406 279 415 279 423 280 M406 279 406 283 408 290 404 299 404 305 M423 280 435 282 442 283 M423 280 428 283 427 291 429 297 M442 283 456 278 464 276 M442 283 447 288 445 296 M464 276 473 278 485 281 M464 276 466 286 468 288 473 298 M485 281 495 284 507 282 514 282 M526 278 537 276 545 277 550 276 M550 276 565 277 579 274 M550 276 550 285 547 285 547 305 M579 274 586 278 594 282 M579 274 574 284 572 291 571 303 M594 282 611 282 611 275 621 275 M594 282 594 287 594 287 594 295 M621 275 626 279 627 279 632 277 635 282 M621 275 621 281 614 281 614 297 M635 282 645 278 651 276 M635 282 631 287 630 296 M683 275 688 277 695 274 698 277 M683 275 679 285 678 289 676 299 M698 277 701 274 711 274 712 276 719 274 M698 277 701 283 701 284 696 291 700 296 M719 274 727 274 727 285 735 285 M719 274 722 279 723 292 722 297 M735 285 755 285 755 282 765 282 M735 285 735 294 744 294 744 302 M765 282 769 281 777 275 780 276 M765 282 765 291 758 291 758 296 M780 276 791 278 796 274 805 276 M780 276 780 289 780 289 780 303 M805 276 819 276 819 284 825 284 M825 284 825 286 829 292 829 297 M-17 298 -6 297 3 300 12 301 M-17 298 -16 301 -17 309 -15 314 -17 319 M12 301 20 299 21 299 M12 301 6 307 3 315 M21 299 28 295 36 295 45 297 50 295 M21 299 21 307 23 312 19 317 21 323 M50 295 58 295 58 302 67 302 M50 295 47 308 49 325 M67 302 82 302 82 301 94 301 M67 302 70 305 73 309 71 315 75 319 M94 301 100 301 107 301 110 297 116 300 M94 301 91 316 92 326 M116 300 117 301 126 305 128 301 131 304 M116 300 109 311 108 323 M131 304 140 304 147 306 152 303 M131 304 133 309 130 315 131 321 134 326 M152 303 154 306 156 311 156 313 157 318 M171 298 176 296 182 299 191 301 M171 298 170 301 172 307 172 314 176 316 M191 301 195 298 202 298 208 296 212 296 M191 301 193 306 191 315 194 320 M212 296 212 306 211 306 211 320 M234 300 232 307 236 311 235 321 M256 299 271 302 285 302 M256 299 256 306 253 309 258 315 255 317 M285 302 293 302 293 296 304 296 M285 302 283 308 282 309 279 318 278 321 M304 296 310 295 320 295 M304 296 300 312 296 323 M320 295 333 295 344 298 M320 295 318 305 318 316 M344 298 350 299 355 298 360 294 M344 298 346 303 339 306 343 312 340 320 M360 294 371 293 380 297 M360 294 360 306 360 315 359 322 M380 297 386 310 386 322 M404 305 412 305 412 297 429 297 M404 305 406 311 407 315 M429 297 438 297 445 296 M429 297 428 308 425 319 M445 296 459 296 473 298 M445 296 445 310 442 320 M473 298 486 298 486 303 492 303 M473 298 468 303 470 310 468 315 463 321 M492 303 495 301 504 298 511 296 515 294 M492 303 494 311 490 321 M515 294 520 294 520 299 529 299 M515 294 511 307 508 318 M529 299 526 305 525 312 528 316 525 319 M547 305 552 301 556 301 564 303 571 303 M547 305 553 315 557 322 M571 303 576 302 581 298 590 299 594 295 M571 303 571 310 570 310 570 323 M594 295 602 295 614 297 M594 295 590 303 592 314 590 321 M614 297 613 314 616 326 M630 296 636 297 642 295 649 292 658 294 M630 296 630 304 634 304 634 322 M658 294 662 294 670 299 676 299 M658 294 657 305 660 313 662 324 M676 299 686 298 695 297 700 296 M676 299 678 310 680 322 M700 296 710 298 722 297 M700 296 700 306 698 306 698 320 M722 297 731 298 738 298 744 302 M722 297 722 311 717 325 M744 302 748 298 758 296 M744 302 744 315 746 315 746 320 M758 296 763 301 771 300 780 303 M758 296 758 300 762 308 767 309 767 315 M780 303 793 301 803 299 M780 303 777 311 777 313 779 321 M803 299 805 310 802 319 M829 297 828 306 831 317 M-17 319 -11 319 -8 316 -4 315 3 315 M-17 319 -18 328 -15 331 -19 339 M3 315 10 319 21 323 M3 315 8 326 8 339 M21 323 36 324 49 325 M21 323 22 331 18 335 21 343 M49 325 59 324 75 319 M49 325 51 331 48 333 47 339 M75 319 86 325 92 326 M75 319 76 325 73 329 73 335 69 344 M92 326 96 326 99 326 101 326 108 323 M92 326 92 330 90 337 91 343 M108 323 119 322 127 326 134 326 M108 323 107 335 112 346 M134 326 138 327 148 321 152 320 157 318 M134 326 137 336 138 340 M157 318 165 315 176 316 M157 318 153 330 151 347 M176 316 188 320 194 320 M194 320 198 317 205 318 207 321 211 320 M194 320 194 332 197 332 197 344 M235 321 244 322 249 319 255 317 M235 321 231 328 232 335 233 343 M255 317 267 320 278 321 M255 317 258 329 258 343 M278 321 283 324 290 324 296 323 M296 323 302 323 309 321 313 317 318 316 M296 323 300 328 299 338 303 342 M318 316 324 319 326 318 336 318 340 320 M318 316 318 327 318 327 318 339 M340 320 351 322 359 322 M340 320 341 323 339 328 342 332 340 338 M359 322 368 322 370 325 382 323 386 322 M359 322 359 331 363 331 363 338 M386 322 399 318 407 315 M386 322 385 327 382 332 379 337 M407 315 416 318 425 319 M425 319 433 319 433 320 442 320 M425 319 424 325 422 335 421 341 M442 320 446 318 457 323 463 321 M442 320 445 327 449 337 450 342 M463 321 472 321 477 320 484 319 490 321 M463 321 464 328 464 336 461 339 464 346 M490 321 500 322 508 318 M508 318 517 318 517 319 525 319 M508 318 508 335 507 335 507 342 M525 319 533 318 543 320 550 321 557 322 M525 319 528 324 530 328 531 333 535 341 M557 322 562 320 570 323 M557 322 558 326 553 335 555 339 M570 323 577 324 590 321 M570 323 570 331 576 331 576 340 M590 321 597 325 601 323 610 326 616 326 M590 321 594 334 592 345 M616 326 624 324 626 326 634 322 M616 326 615 334 621 339 619 346 M634 322 639 323 648 325 656 321 662 324 M634 322 639 330 637 341 M662 324 667 323 671 325 680 322 M662 324 662 327 660 333 662 336 659 343 M680 322 683 321 692 322 698 320 M680 322 680 331 682 331 682 346 M698 320 701 319 710 325 711 322 717 325 M698 320 695 328 694 336 695 341 M717 325 732 323 746 320 M717 325 719 331 722 337 722 339 M746 320 759 320 759 315 767 315 M767 315 769 314 774 319 774 319 779 321 M767 315 765 325 763 334 764 342 763 347 M779 321 787 322 793 321 794 320 802 319 M779 321 780 326 788 331 789 338 M802 319 812 317 824 315 831 317 M802 319 804 327 806 341 M831 317 829 331 827 341 M-19 339 -12 340 2 338 8 339 M-19 339 -18 351 -16 361 -10 369 M8 339 13 340 16 341 20 344 21 343 M21 343 35 343 47 339 M47 339 57 341 69 344 M47 339 48 344 48 353 43 357 45 366 M69 344 80 342 91 343 M69 344 73 348 70 350 75 357 75 358 M91 343 91 346 87 353 89 355 88 357 M112 346 129 346 129 340 138 340 M112 346 113 351 113 357 112 363 M138 340 141 343 142 345 150 344 151 347 M138 340 138 351 130 351 130 361 M151 347 156 345 162 345 172 345 M151 347 151 353 157 353 157 367 M172 345 179 345 179 344 197 344 M197 344 204 347 211 348 216 345 222 346 M197 344 198 354 200 361 196 366 M222 346 219 353 220 359 222 362 M233 343 237 346 243 344 254 340 258 343 M233 343 233 355 239 355 239 364 M258 343 262 341 266 343 275 342 277 339 M258 343 259 348 262 359 M277 339 286 341 296 339 303 342 M277 339 277 345 275 345 275 358 M303 342 310 342 315 341 318 339 M303 342 303 351 302 357 305 360 M318 339 323 336 328 337 334 338 340 338 M318 339 318 344 321 344 321 358 M340 338 347 339 354 338 363 338 M340 338 338 344 338 351 340 357 M363 338 366 338 373 336 372 337 379 337 M363 338 364 343 362 349 362 356 364 359 M379 337 387 338 388 341 393 341 400 344 M379 337 383 343 386 355 386 360 M400 344 409 343 417 342 421 341 M400 344 398 355 402 363 M421 341 430 341 437 341 445 344 450 342 M450 342 456 343 464 346 M450 342 450 345 447 354 442 358 M464 346 475 344 486 343 493 337 M464 346 468 351 471 355 472 357 473 361 M493 337 494 341 499 341 505 342 507 342 M493 337 491 343 487 350 485 355 484 359 M507 342 525 342 525 341 535 341 M535 341 542 338 550 338 555 339 M535 341 530 351 529 361 527 367 M555 339 557 341 566 340 569 341 576 340 M555 339 556 347 553 353 552 362 M576 340 586 340 586 345 592 345 M576 340 577 350 579 353 577 362 M592 345 599 344 609 346 619 346 M592 345 592 356 589 356 589 364 M619 346 621 353 617 358 617 364 M637 341 650 342 659 343 M637 341 634 349 635 359 633 368 M659 343 662 343 672 347 677 346 682 346 M659 343 662 353 663 357 662 362 661 369 M682 346 685 344 688 343 689 343 695 341 M682 346 680 352 677 355 678 360 677 367 M695 341 710 341 710 339 722 339 M695 341 701 351 702 359 M722 339 725 336 732 335 735 336 737 336 M722 339 716 347 714 359 M737 336 746 339 754 342 763 347 M737 336 734 349 736 358 M763 347 763 354 760 355 759 363 760 366 M789 338 798 340 806 341 M789 338 785 346 786 349 785 357 781 363 M806 341 814 339 816 343 823 338 827 341 M806 341 799 352 798 360 M827 341 826 342 828 351 832 356 831 357 M-10 369 -7 370 -3 366 1 366 M1 366 13 366 13 358 22 358 M1 366 1 381 10 381 10 387 M22 358 34 358 34 366 45 366 M22 358 26 367 27 374 23 377 26 388 M45 366 54 362 60 359 66 361 75 358 M45 366 45 375 52 375 52 387 M75 358 81 358 81 357 88 357 M75 358 75 365 75 365 75 379 M88 357 99 362 101 363 112 363 M88 357 90 364 94 375 95 383 M112 363 119 362 125 361 130 361 M112 363 109 367 113 374 114 375 113 381 M130 361 141 363 150 367 157 367 M130 361 133 364 132 369 138 374 137 378 M171 362 178 363 191 367 196 366 M171 362 174 370 173 382 M196 366 211 361 222 362 M222 362 226 360 235 362 239 364 M222 362 218 367 218 376 217 381 214 386 M239 364 244 363 255 361 262 359 M239 364 240 374 235 381 M262 359 268 359 275 358 M262 359 261 369 260 376 263 382 M275 358 286 360 293 359 305 360 M275 358 276 368 274 382 M305 360 311 360 315 360 321 358 M305 360 307 364 302 371 303 381 M321 358 329 359 340 357 M321 358 323 369 320 378 324 385 M340 357 347 358 355 359 364 359 M364 359 363 370 358 380 M386 360 392 360 402 363 M402 363 407 363 411 360 417 361 424 360 M402 363 398 373 399 384 M424 360 432 357 442 358 M424 360 424 370 425 382 M442 358 458 361 473 361 M442 358 443 376 447 389 M473 361 475 363 481 363 484 359 M473 361 471 372 466 382 464 389 M484 359 495 362 510 369 M484 359 484 376 487 376 487 387 M510 369 520 366 527 367 M510 369 506 374 509 380 506 387 505 390 M527 367 527 383 530 383 530 390 M552 362 559 361 566 362 577 362 M552 362 549 368 548 376 549 383 M577 362 580 361 582 362 589 364 M577 362 575 370 575 380 M589 364 597 362 610 363 617 364 M617 364 626 365 633 368 M633 368 641 366 649 368 654 369 661 369 M633 368 635 376 631 375 632 382 M661 369 671 371 677 367 M661 369 661 371 659 375 661 375 663 380 M677 367 688 363 691 364 702 359 M677 367 677 372 676 374 676 378 680 383 M702 359 703 360 710 359 714 359 M702 359 700 363 703 371 700 377 701 381 M714 359 727 359 727 358 736 358 M736 358 740 359 747 364 756 362 760 366 M736 358 736 367 741 371 742 379 745 386 M760 366 770 363 781 363 M760 366 763 371 761 379 762 385 M781 363 792 363 798 360 M781 363 781 374 778 374 778 388 M798 360 799 373 806 383 M831 357 828 364 831 376 827 383 M-15 388 -9 385 1 387 10 387 M-15 388 -14 392 -16 402 M10 387 13 390 21 386 26 388 M10 387 10 397 7 397 7 406 M26 388 29 393 28 395 27 399 M52 387 60 386 70 381 75 379 M52 387 52 395 50 395 50 404 M75 379 82 378 84 379 90 382 95 383 M75 379 72 391 70 406 M95 383 102 384 113 381 M95 383 97 387 96 393 97 394 95 401 M113 381 128 381 137 378 M113 381 110 392 112 398 111 411 M137 378 148 378 148 381 154 381 M137 378 133 392 135 403 M154 381 164 382 173 382 M154 381 154 389 153 398 158 401 156 411 M173 382 185 382 185 388 197 388 M197 388 203 390 214 386 M197 388 194 395 193 406 191 411 M214 386 222 384 235 381 M214 386 214 397 216 397 216 402 M235 381 251 383 263 382 M235 381 237 392 241 407 M263 382 266 383 274 382 M263 382 264 393 264 399 263 409 M274 382 286 381 293 380 303 381 M274 382 276 392 282 399 283 405 M303 381 318 381 318 385 324 385 M303 381 305 386 302 393 303 395 306 400 M324 385 328 383 333 384 339 383 344 380 M324 385 323 389 327 394 327 404 325 408 M344 380 348 382 349 383 352 381 358 380 M344 380 343 393 339 409 M358 380 365 380 365 383 382 383 M358 380 360 386 360 393 362 397 362 405 M382 383 384 381 391 383 398 383 399 384 M382 383 385 389 383 394 389 396 388 401 M399 384 412 384 412 382 425 382 M399 384 397 391 403 402 402 407 M425 382 436 387 447 389 M425 382 422 386 425 395 424 401 421 406 M464 389 470 388 482 390 487 387 M464 389 467 391 464 396 466 403 465 409 M487 387 495 388 505 390 M487 387 489 398 493 408 M505 390 517 389 530 390 M505 390 507 401 511 410 M530 390 539 389 549 383 M530 390 530 393 531 399 535 401 M549 383 558 381 561 384 568 378 575 380 M549 383 551 392 550 400 M575 380 577 382 582 383 588 382 591 386 M575 380 572 394 567 403 M591 386 596 385 605 386 612 385 620 382 M591 386 593 395 598 409 M620 382 619 385 615 394 613 395 610 401 M632 382 641 379 649 378 652 379 663 380 M632 382 633 388 635 394 636 404 635 409 M663 380 672 378 680 383 M663 380 658 387 662 400 658 410 M680 383 685 381 691 381 693 379 701 381 M701 381 708 384 714 384 721 389 M721 389 731 389 731 386 745 386 M721 389 721 402 725 402 725 408 M745 386 757 386 757 385 762 385 M745 386 739 395 737 407 M762 385 766 384 771 386 772 390 778 388 M762 385 764 392 760 392 761 399 M778 388 789 388 796 386 806 383 M778 388 778 395 781 403 M806 383 816 384 827 383 M806 383 809 391 804 395 806 402 M827 383 829 397 826 407 M-16 402 -2 402 -2 406 7 406 M-16 402 -14 404 -16 414 -15 418 -19 422 M7 406 17 404 27 399 M7 406 9 415 11 417 8 426 M50 404 60 408 70 406 M50 404 50 418 53 418 53 427 M70 406 81 402 95 401 M70 406 68 411 68 416 67 422 M95 401 104 407 111 411 M95 401 98 416 96 428 M111 411 117 407 125 407 135 403 M111 411 113 415 111 418 114 424 M135 403 143 407 156 411 M135 403 135 412 130 412 130 425 M156 411 161 412 166 408 173 409 M156 411 155 415 153 422 148 424 149 428 M173 409 179 412 183 408 185 409 191 411 M173 409 171 417 175 418 176 424 173 430 M191 411 201 405 216 402 M191 411 194 418 195 423 194 425 M216 402 221 405 231 407 234 408 241 407 M216 402 217 416 216 431 M241 407 241 416 235 416 235 428 M263 409 265 406 275 408 280 405 283 405 M263 409 258 416 257 416 259 422 255 427 M283 405 287 401 292 404 302 398 306 400 M283 405 281 411 280 424 276 430 M306 400 313 401 317 404 325 408 M325 408 327 409 336 407 339 409 M325 408 325 412 323 412 323 425 M339 409 346 410 354 404 362 405 M339 409 341 415 344 415 344 419 347 425 M362 405 369 403 377 404 385 404 388 401 M362 405 364 419 366 427 M388 401 391 404 396 407 402 407 M388 401 385 409 383 421 M402 407 411 406 416 408 421 406 M402 407 400 411 405 418 403 417 404 423 M421 406 422 415 422 417 422 426 425 431 M450 405 454 409 458 410 459 407 465 409 M465 409 469 414 470 423 M493 408 505 408 511 410 M493 408 492 413 490 414 487 420 488 422 M511 410 511 418 515 423 M535 401 530 415 530 424 M550 400 557 400 557 403 567 403 M550 400 550 411 556 411 556 430 M567 403 574 403 584 406 591 408 598 409 M598 409 600 404 605 405 607 400 610 401 M598 409 598 420 589 420 589 431 M610 401 619 401 619 409 635 409 M610 401 613 410 610 424 M635 409 638 410 648 408 651 412 658 410 M635 409 636 421 634 429 M658 410 663 408 667 408 673 411 M673 411 681 409 688 407 695 407 M695 407 706 408 717 410 725 408 M695 407 698 414 697 423 693 428 M725 408 733 409 737 407 M725 408 726 414 723 416 723 423 720 424 M737 407 750 404 761 399 M737 407 740 413 741 424 M761 399 764 407 763 412 762 419 764 427 M781 403 795 405 806 402 M781 403 785 411 785 415 789 424 789 432 M806 402 821 402 821 407 826 407 M826 407 829 411 826 415 828 424 829 428 M-19 422 -6 421 8 426 M-19 422 -14 439 -13 453 M8 426 14 422 23 421 M8 426 8 436 1 436 1 447 M23 421 33 426 46 425 53 427 M23 421 22 430 27 439 26 449 M53 427 61 424 67 422 M53 427 51 433 48 437 48 445 45 453 M67 422 66 431 66 445 M96 428 106 428 114 424 M114 424 118 425 122 426 130 425 M114 424 116 433 114 442 M130 425 133 423 137 423 142 428 149 428 M130 425 130 430 132 439 130 441 128 449 M149 428 163 428 163 430 173 430 M149 428 151 442 154 450 M173 430 181 430 181 425 194 425 M194 425 204 430 216 431 M194 425 196 432 198 437 196 442 198 450 M216 431 223 431 223 428 235 428 M235 428 243 428 245 429 252 429 255 427 M235 428 235 437 231 442 230 446 231 451 M255 427 266 431 276 430 M276 430 287 432 297 430 M276 430 277 435 277 439 273 445 M297 430 307 428 314 426 323 425 M297 430 298 436 300 447 M323 425 322 435 319 439 321 443 316 450 M347 425 355 425 366 427 M347 425 347 435 340 435 340 447 M366 427 369 425 377 424 376 420 383 421 M366 427 362 433 359 440 358 448 M383 421 395 421 404 423 M383 421 382 431 382 437 380 442 M404 423 410 427 418 428 425 431 M404 423 404 432 405 432 405 445 M425 431 428 436 428 439 427 441 429 444 M445 428 452 426 459 425 466 423 470 423 M445 428 447 430 448 435 446 442 M470 423 475 423 475 422 488 422 M470 423 466 434 465 437 465 446 M488 422 501 421 515 423 M488 422 490 435 490 447 M515 423 518 421 523 424 530 424 M530 424 542 429 556 430 M530 424 535 429 536 434 535 443 M556 430 565 427 574 427 M556 430 559 433 554 441 555 441 558 447 M574 427 584 431 589 431 M574 427 571 430 574 435 572 441 572 448 M589 431 597 431 597 424 610 424 M589 431 591 438 596 439 593 450 598 453 M610 424 617 428 625 428 626 430 634 429 M610 424 609 433 614 441 M634 429 640 428 652 427 659 424 M634 429 635 437 630 444 632 451 M659 424 673 428 683 431 M659 424 661 432 658 435 659 441 660 450 M683 431 686 432 693 428 M683 431 679 435 674 440 674 447 M693 428 694 430 692 437 691 436 693 442 M720 424 729 423 741 424 M720 424 717 436 717 442 718 453 M741 424 751 423 755 424 764 427 M741 424 741 440 743 440 743 451 M764 427 778 431 789 432 M764 427 760 433 763 437 759 444 757 446 M789 432 796 430 810 425 M789 432 786 436 782 443 778 444 M810 425 815 429 825 426 829 428 M810 425 810 440 799 440 799 452 M829 428 829 441 823 441 823 447 M-13 453 -10 450 -3 450 1 447 M1 447 12 445 26 449 M1 447 1 458 11 458 11 469 M26 449 32 449 35 450 45 453 M45 453 51 448 57 445 66 445 M45 453 45 461 47 461 47 466 M66 445 70 447 77 445 80 447 86 446 M66 445 68 453 66 455 71 462 72 465 M86 446 94 442 102 443 114 442 M86 446 89 451 88 459 86 462 88 467 M114 442 119 447 128 449 M114 442 116 449 110 451 112 462 111 466 M128 449 147 449 147 450 154 450 M154 450 157 450 160 451 167 453 171 451 M154 450 149 459 152 462 148 472 M171 451 187 453 198 450 M171 451 170 456 168 460 170 461 169 468 M198 450 207 450 211 447 M198 450 198 459 195 463 196 467 M211 447 213 449 211 456 211 458 213 463 M231 451 241 452 255 449 263 452 M231 451 234 455 230 459 233 463 235 466 M263 452 263 456 258 456 258 465 M273 445 280 445 280 447 300 447 M273 445 278 449 278 459 279 465 282 468 M300 447 304 450 310 450 312 447 316 450 M300 447 299 457 294 467 M316 450 328 450 328 447 340 447 M316 450 318 452 321 456 327 462 M340 447 348 447 358 448 M340 447 339 460 343 474 M358 448 359 455 361 460 361 469 M380 442 390 444 398 445 405 445 M380 442 383 451 379 452 382 459 382 466 M405 445 411 443 420 444 429 444 M405 445 407 455 406 469 M429 444 436 440 446 442 M429 444 430 448 428 456 425 462 424 468 M446 442 452 442 455 447 462 448 465 446 M446 442 449 449 446 458 447 471 M465 446 474 446 474 447 490 447 M465 446 464 455 463 463 M490 447 502 447 514 442 M490 447 488 450 488 457 486 458 486 465 M514 442 521 443 522 442 531 442 535 443 M514 442 511 448 513 456 514 467 M535 443 541 443 549 444 550 445 558 447 M535 443 538 453 538 459 535 467 M558 447 565 449 572 448 M558 447 557 457 554 464 549 470 M572 448 587 448 587 453 598 453 M572 448 571 455 570 465 568 474 M598 453 604 448 614 441 M598 453 601 455 599 464 598 466 M614 441 625 448 632 451 M632 451 639 448 648 453 653 448 660 450 M632 451 634 458 633 462 639 467 639 470 M660 450 667 450 674 447 M660 450 658 458 652 471 M674 447 679 446 688 441 693 442 M674 447 672 452 671 460 674 462 673 469 M693 442 698 443 703 448 713 448 718 453 M693 442 693 458 700 458 700 473 M718 453 731 452 743 451 M718 453 720 456 718 460 722 462 M743 451 746 463 746 471 M757 446 757 453 763 453 763 462 M778 444 793 444 793 452 799 452 M778 444 780 452 785 461 786 467 M799 452 806 450 814 449 817 449 823 447 M823 447 822 451 829 453 830 457 830 463 M-13 473 -2 473 6 472 11 469 M11 469 15 470 22 471 27 473 M11 469 13 472 9 484 9 488 M27 473 35 472 47 466 M27 473 28 481 25 482 26 488 M47 466 53 468 62 467 63 462 72 465 M47 466 47 473 43 473 43 487 M72 465 77 467 80 468 84 465 88 467 M72 465 74 474 72 484 M88 467 87 480 85 493 M111 466 123 465 131 467 M111 466 113 479 113 490 M131 467 131 472 127 472 127 484 M148 472 161 468 169 468 M148 472 147 479 151 486 151 494 M169 468 180 468 180 467 196 467 M196 467 196 479 192 479 192 488 M213 463 220 463 220 466 235 466 M213 463 211 475 217 485 216 493 M235 466 241 463 249 465 253 464 258 465 M235 466 233 481 232 493 M258 465 270 465 282 468 M258 465 257 473 260 479 258 483 M282 468 290 468 294 467 M282 468 281 475 277 478 278 488 M294 467 313 466 327 462 M294 467 294 478 302 478 302 494 M327 462 327 472 324 481 321 491 M343 474 350 472 354 473 356 473 361 469 M343 474 341 482 340 487 341 492 M361 469 365 467 372 466 376 469 382 466 M361 469 363 472 360 483 359 484 358 492 M382 466 388 466 388 469 406 469 M382 466 382 476 380 476 380 490 M406 469 412 466 412 467 421 470 424 468 M406 469 404 475 403 479 400 482 401 487 M424 468 432 466 438 471 447 471 M424 468 421 476 424 483 422 487 M447 471 453 466 463 463 M447 471 450 483 448 489 M463 463 464 467 464 478 465 481 467 490 M486 465 501 465 514 467 M514 467 520 469 527 468 532 467 535 467 M514 467 515 477 511 489 M535 467 540 467 549 470 M535 467 537 477 537 487 M549 470 555 470 555 474 568 474 M549 470 552 478 550 479 554 486 M568 474 576 473 586 471 598 466 M568 474 566 476 567 483 567 485 570 492 M598 466 604 468 607 468 608 468 613 472 M598 466 596 473 595 478 598 480 595 486 M613 472 620 471 628 470 634 472 639 470 M613 472 614 480 610 493 M639 470 635 480 638 484 635 492 M652 471 667 471 667 469 673 469 M652 471 650 475 655 480 653 487 656 490 M673 469 683 470 700 473 M673 469 677 473 675 480 680 486 679 495 M700 473 703 470 711 466 719 465 722 462 M722 462 726 466 733 467 742 468 746 471 M722 462 719 470 723 476 720 486 M746 471 748 471 758 469 756 465 763 462 M746 471 744 477 746 481 744 484 M763 462 770 463 776 462 786 467 M786 467 798 470 806 474 M786 467 784 471 779 479 779 486 777 491 M806 474 812 473 823 469 830 463 M806 474 807 480 805 490 M830 463 825 468 827 477 823 485 M-12 488 -2 487 4 490 9 488 M-12 488 -12 501 -10 513 M9 488 19 488 19 488 26 488 M9 488 9 496 10 496 10 505 M26 488 31 491 36 490 37 487 43 487 M43 487 55 488 64 483 72 484 M43 487 44 495 44 496 46 505 44 510 M72 484 78 489 82 488 85 493 M85 493 97 491 113 490 M85 493 92 503 93 511 M113 490 118 490 118 484 127 484 M113 490 112 501 116 515 M127 484 140 488 151 494 M127 484 131 488 130 497 134 505 134 508 M151 494 154 497 152 506 158 509 158 513 M175 494 184 490 192 488 M175 494 174 501 171 510 171 514 M192 488 202 493 216 493 M192 488 197 496 198 507 M216 493 224 493 224 493 232 493 M216 493 217 500 213 504 M232 493 236 498 237 507 M258 483 265 484 270 487 274 489 278 488 M278 488 290 490 302 494 M278 488 274 500 275 510 M302 494 306 492 310 490 314 491 321 491 M302 494 301 500 297 507 M321 491 332 490 341 492 M321 491 323 496 321 504 318 510 M341 492 348 490 353 491 358 492 M341 492 341 497 343 500 346 506 M358 492 363 492 374 493 380 490 M358 492 358 508 367 508 367 514 M380 490 385 487 392 490 401 487 M380 490 381 499 385 511 M401 487 408 485 410 486 417 488 422 487 M401 487 403 497 404 505 408 510 M422 487 431 488 433 491 444 489 448 489 M448 489 456 490 461 488 467 490 M448 489 447 501 450 507 M467 490 474 486 485 489 493 487 M467 490 463 496 462 509 463 515 M493 487 500 487 500 489 511 489 M493 487 490 495 490 501 490 505 487 513 M511 489 519 489 519 487 537 487 M511 489 511 495 507 495 507 509 M537 487 543 487 543 486 554 486 M537 487 537 501 529 501 529 513 M554 486 560 486 570 492 M554 486 555 501 557 510 M570 492 582 488 595 486 M570 492 572 495 571 504 574 508 M595 486 600 489 607 488 610 493 M595 486 592 496 590 499 594 509 591 515 M610 493 621 493 624 493 635 492 M610 493 612 503 610 508 610 515 M635 492 643 488 656 490 M635 492 635 502 638 502 638 505 M656 490 662 495 662 505 M679 495 679 500 679 500 679 505 M704 488 710 487 710 487 717 484 720 486 M720 486 727 483 736 484 744 484 M720 486 720 491 725 498 724 505 M744 484 749 487 752 493 760 493 M744 484 744 499 743 499 743 505 M760 493 767 494 769 491 777 491 M760 493 760 499 758 507 756 511 M777 491 786 491 790 488 800 492 805 490 M777 491 782 500 786 506 789 512 M805 490 812 490 815 484 823 485 M805 490 808 495 810 508 808 513 M823 485 821 493 825 505 M-10 513 -2 507 10 505 M-10 513 -15 517 -15 527 M10 505 12 504 21 505 26 505 30 507 M10 505 11 520 6 529 M30 507 33 507 36 509 43 509 44 510 M44 510 52 508 62 507 70 505 M44 510 46 518 50 530 M70 505 71 515 69 526 M93 511 103 511 116 515 M93 511 93 519 93 519 89 524 90 532 M116 515 119 511 126 510 132 508 134 508 M134 508 145 509 151 512 158 513 M134 508 133 516 128 529 M158 513 163 512 171 514 M171 514 183 510 198 507 M171 514 172 524 176 529 179 537 M198 507 205 506 208 504 213 504 M198 507 197 525 200 536 M213 504 220 504 225 505 230 504 237 507 M213 504 213 512 220 512 220 536 M237 507 249 506 256 507 M237 507 233 522 231 531 M256 507 265 506 271 510 275 510 M256 507 258 511 260 521 261 525 259 533 M275 510 284 509 297 507 M275 510 278 519 280 532 M297 507 310 506 318 510 M297 507 303 515 305 526 M318 510 329 508 337 509 346 506 M318 510 318 522 321 537 M346 506 358 513 367 514 M367 514 374 512 377 515 382 514 385 511 M367 514 368 523 367 536 M385 511 394 513 395 513 400 512 408 510 M385 511 385 515 378 515 378 525 M408 510 412 514 418 512 420 512 428 515 M408 510 406 520 410 523 409 533 M428 515 441 509 450 507 M428 515 426 521 427 528 426 532 M450 507 453 512 456 512 463 515 M450 507 449 516 453 526 450 535 M463 515 463 518 460 521 462 526 M487 513 495 514 498 508 507 509 M487 513 491 523 490 531 493 537 M507 509 514 509 519 509 521 511 529 513 M507 509 507 516 514 516 514 530 M529 513 538 513 538 510 557 510 M529 513 529 516 531 521 529 529 M557 510 565 510 565 508 574 508 M557 510 553 521 553 524 546 534 M574 508 583 512 591 515 M591 515 595 522 591 522 594 529 M610 515 620 514 631 506 638 505 M610 515 614 518 613 527 617 530 M638 505 648 505 648 505 662 505 M638 505 634 523 633 536 M662 505 669 503 679 505 M662 505 661 515 658 520 653 527 M679 505 690 508 705 508 M679 505 679 517 678 523 675 531 M705 508 713 505 719 507 724 505 M705 508 701 517 702 529 M724 505 737 505 737 505 743 505 M724 505 720 516 720 522 717 533 M743 505 750 505 752 506 756 511 M743 505 739 516 738 531 M756 511 762 512 775 512 780 515 789 512 M756 511 755 518 759 520 760 530 759 536 M789 512 794 512 794 513 808 513 M789 512 787 514 784 521 783 521 779 528 M808 513 816 506 825 505 M808 513 808 516 802 524 802 529 M825 505 828 512 826 523 828 533 M-15 527 -7 530 -4 527 1 528 6 529 M6 529 18 530 27 527 M6 529 3 536 3 549 1 555 M27 527 36 528 45 527 50 530 M27 527 24 534 28 544 24 549 M50 530 62 525 69 526 M50 530 51 539 51 549 47 558 M69 526 78 528 81 529 90 532 M90 532 97 530 109 533 117 532 M90 532 90 550 95 550 95 558 M117 532 120 531 123 530 128 529 M117 532 111 539 110 548 M128 529 137 531 151 533 M128 529 128 535 136 544 135 555 M151 533 156 536 164 535 171 539 179 537 M179 537 187 534 188 535 192 534 200 536 M179 537 179 542 173 542 173 549 M200 536 209 538 211 539 220 536 M200 536 200 547 196 547 196 555 M220 536 222 533 230 534 231 531 M220 536 216 541 215 549 216 556 M231 531 245 533 259 533 M231 531 231 538 229 539 233 547 231 552 M259 533 264 531 267 535 277 531 280 532 M259 533 259 540 255 540 257 547 M280 532 289 532 289 526 305 526 M280 532 279 542 284 548 M305 526 311 526 314 529 315 536 321 537 M305 526 305 543 296 543 296 557 M321 537 329 537 329 526 336 526 M321 537 321 546 327 546 327 557 M336 526 347 532 355 533 367 536 M336 526 340 541 340 557 M367 536 373 535 373 529 378 525 M367 536 362 542 362 550 359 555 M378 525 386 535 389 548 M409 533 416 530 426 532 M409 533 402 547 401 554 M426 532 434 531 443 533 450 535 M426 532 430 539 427 541 432 550 431 555 M450 535 456 532 456 527 462 526 M462 526 478 531 493 537 M462 526 465 535 466 547 M493 537 501 532 514 530 M514 530 519 529 524 529 529 529 M514 530 512 536 506 545 505 548 M529 529 534 529 534 534 546 534 M529 529 529 539 529 547 M546 534 553 534 563 531 570 532 M546 534 545 539 550 544 550 548 M570 532 580 531 594 529 M594 529 602 527 607 531 617 530 M594 529 597 538 594 553 M617 530 622 535 627 533 633 536 M617 530 617 541 618 541 618 552 M633 536 636 532 642 529 646 531 653 527 M633 536 635 543 641 547 M653 527 660 530 661 529 667 527 675 531 M653 527 655 532 651 543 654 547 M675 531 680 533 689 531 698 532 702 529 M702 529 707 529 707 533 717 533 M702 529 703 542 704 552 M717 533 726 535 731 530 738 531 M717 533 719 540 714 542 716 550 M738 531 746 536 759 536 M738 531 738 541 742 550 M759 536 764 530 773 528 779 528 M759 536 761 545 766 558 M779 528 787 527 791 527 797 530 802 529 M779 528 781 535 782 545 783 553 M802 529 817 529 817 533 828 533 M828 533 827 539 823 549 821 557 M-12 552 -9 554 -2 553 1 555 M-12 552 -8 557 -9 567 M1 555 7 554 18 549 24 549 M1 555 1 559 9 559 9 572 M24 549 35 554 47 558 M47 558 60 556 67 550 M47 558 49 565 44 565 44 570 44 576 M67 550 76 554 83 551 89 558 95 558 M67 550 69 558 65 559 66 567 M95 558 98 554 100 550 109 552 110 548 M95 558 92 560 93 570 87 573 87 577 M110 548 126 548 126 555 135 555 M110 548 109 556 110 563 112 570 111 575 M135 555 138 557 142 553 144 557 151 555 M151 555 162 554 173 549 M151 555 151 565 147 565 147 571 M173 549 177 552 182 555 188 551 196 555 M173 549 172 554 170 562 168 570 M196 555 202 553 208 557 216 556 M196 555 198 560 194 562 199 570 196 571 M216 556 223 554 231 552 M216 556 216 565 216 574 M231 552 241 547 257 547 M231 552 234 562 235 571 M257 547 272 545 284 548 M257 547 261 552 261 562 263 567 263 574 M284 548 282 555 283 565 278 573 M296 557 311 555 327 557 M296 557 296 563 296 562 297 567 300 571 M327 557 327 554 336 556 336 558 340 557 M327 557 329 558 328 561 326 565 326 570 M340 557 340 564 347 564 347 577 M359 555 365 551 373 554 380 547 389 548 M359 555 361 558 364 567 368 569 M389 548 392 549 399 550 401 554 M389 548 390 557 384 568 384 579 M401 554 412 555 423 556 431 555 M401 554 401 561 402 561 402 569 M431 555 437 556 446 551 452 551 M431 555 428 560 431 567 429 570 M452 551 461 549 466 547 M452 551 453 555 448 561 448 569 M466 547 476 554 486 557 M466 547 470 551 471 556 473 563 473 570 M486 557 491 557 491 548 505 548 M486 557 483 564 484 575 M505 548 516 547 529 547 M505 548 507 556 505 563 508 574 M529 547 537 547 537 548 550 548 M529 547 529 568 531 568 531 578 M550 548 557 549 562 553 568 552 M550 548 550 562 552 572 M568 552 573 551 583 553 589 555 594 553 M568 552 566 557 569 564 565 568 567 573 M594 553 598 554 605 550 615 550 618 552 M594 553 596 556 590 564 591 569 591 574 M618 552 630 547 641 547 M618 552 615 560 617 573 M641 547 648 549 647 548 654 547 M641 547 636 558 635 567 631 573 M654 547 662 552 666 549 671 552 676 555 M654 547 658 560 657 575 M676 555 685 554 688 555 695 556 704 552 M676 555 682 563 684 570 M704 552 708 550 716 550 M704 552 701 558 699 560 699 562 698 568 M716 550 727 548 742 550 M716 550 720 554 720 566 724 570 M742 550 752 550 752 558 766 558 M742 550 746 556 745 568 745 577 M766 558 771 554 779 556 783 553 M766 558 762 566 759 570 759 578 M783 553 795 555 808 552 M783 553 783 564 783 564 783 572 M808 552 808 558 806 562 807 569 805 578 M821 557 823 562 822 566 825 573 M-9 567 -2 567 -2 572 9 572 M-9 567 -13 579 -13 588 -18 598 M9 572 12 568 17 571 21 569 22 569 M9 572 9 582 6 582 6 592 M22 569 30 573 35 571 44 576 M22 569 22 581 23 581 23 591 M44 576 53 572 57 570 66 567 M44 576 43 583 49 585 50 590 52 598 M66 567 70 572 79 574 82 576 87 577 M87 577 99 575 111 575 M87 577 90 582 89 585 92 591 92 598 M111 575 118 575 118 569 132 569 M111 575 113 581 113 590 114 598 M132 569 135 569 141 570 142 569 147 571 M132 569 136 581 136 590 M147 571 153 571 161 568 168 570 M168 570 177 572 187 571 196 571 M168 570 167 587 171 599 M196 571 208 575 216 574 M196 571 196 579 192 585 192 587 189 594 M216 574 225 574 230 574 235 571 M216 574 216 587 214 598 M235 571 247 575 252 570 263 574 M235 571 238 583 238 599 M263 574 272 574 272 573 278 573 M263 574 261 582 264 582 262 592 263 596 M278 573 274 578 274 591 274 596 M300 571 315 570 326 570 M300 571 297 581 297 591 295 600 M326 570 332 572 334 574 343 574 347 577 M326 570 325 576 325 587 325 592 M347 577 352 576 363 569 368 569 M347 577 341 589 338 596 M368 569 371 569 374 571 383 577 384 579 M368 569 367 576 366 586 368 594 366 600 M384 579 392 575 398 570 402 569 M384 579 386 581 383 588 385 590 M402 569 416 569 416 570 429 570 M402 569 402 574 407 582 408 589 M429 570 436 567 439 572 448 569 M429 570 432 578 433 585 431 589 430 597 M448 569 453 567 458 572 468 570 473 570 M473 570 476 576 484 575 M484 575 495 575 498 576 508 574 M508 574 521 575 531 578 M508 574 510 580 507 582 506 589 509 592 M531 578 536 576 546 571 552 572 M531 578 530 583 526 584 525 590 M552 572 560 572 567 573 M567 573 568 585 575 597 M591 574 600 572 601 572 608 573 617 573 M617 573 626 573 626 573 631 573 M617 573 617 579 615 582 611 586 613 591 M631 573 646 575 657 575 M631 573 633 582 632 596 M657 575 672 574 684 570 M657 575 659 583 659 588 660 595 659 599 M684 570 687 568 692 569 695 571 698 568 M698 568 706 571 714 569 724 570 M698 568 698 574 704 574 704 591 M724 570 734 571 740 573 745 577 M724 570 724 582 725 582 725 595 M745 577 751 580 752 575 759 578 M759 578 771 577 783 572 M759 578 757 583 759 583 761 588 760 591 M783 572 788 572 800 576 805 578 M783 572 783 578 783 583 785 587 783 594 M805 578 810 574 816 575 825 573 M805 578 803 587 801 592 798 598 M825 573 825 582 825 594 M-18 598 -11 593 -1 594 6 592 M-18 598 -18 601 -14 608 -12 612 M6 592 12 591 23 591 M6 592 7 605 2 616 M23 591 33 590 35 592 43 597 52 598 M23 591 21 601 24 613 M52 598 62 600 69 598 75 599 M52 598 47 602 48 602 45 607 43 610 M75 599 85 599 85 598 92 598 M75 599 75 606 69 606 72 614 67 615 M92 598 95 595 104 597 108 595 114 598 M92 598 95 602 94 610 95 617 M114 598 122 596 136 590 M114 598 110 604 109 609 110 614 M136 590 149 590 149 592 157 592 M136 590 132 597 131 606 129 615 M157 592 163 594 171 599 M157 592 160 596 160 607 159 610 M171 599 175 597 178 599 186 596 189 594 M171 599 173 609 173 617 M189 594 194 597 203 596 206 599 214 598 M189 594 194 602 192 607 195 612 198 616 M214 598 219 600 227 600 229 597 238 599 M238 599 246 596 255 595 263 596 M238 599 241 605 240 607 242 612 M263 596 265 594 270 595 274 596 M263 596 260 601 261 609 262 613 258 621 M274 596 282 597 295 600 M274 596 279 603 279 611 M295 600 312 598 325 592 M295 600 300 602 302 608 303 610 M325 592 331 595 335 596 338 596 M325 592 324 598 317 609 317 616 M338 596 339 604 339 618 M366 600 364 601 364 608 364 610 366 613 M385 590 402 590 402 589 408 589 M385 590 387 595 386 604 389 612 387 617 M408 589 413 588 417 594 422 594 430 597 M430 597 442 600 450 598 M430 597 426 599 428 607 425 610 M450 598 459 602 461 596 469 599 M450 598 449 604 449 613 447 620 M469 599 483 599 483 594 491 594 M491 594 498 591 502 595 509 592 M491 594 491 604 484 604 484 612 M509 592 513 590 517 591 521 589 525 590 M509 592 509 602 510 604 512 614 M525 590 539 592 556 591 M525 590 526 599 527 604 525 611 527 614 M556 591 563 593 570 597 575 597 M556 591 553 601 552 611 553 618 M575 597 582 599 585 598 589 593 596 594 M575 597 572 601 574 610 572 617 M596 594 606 590 613 591 M596 594 596 607 596 616 M613 591 613 607 610 618 M632 596 642 598 648 596 659 599 M632 596 634 602 632 610 M659 599 664 599 665 600 670 601 676 599 M659 599 656 602 657 609 M676 599 683 598 687 593 698 596 704 591 M676 599 677 601 674 610 673 614 M704 591 712 594 721 593 725 595 M704 591 705 595 703 602 699 610 M725 595 735 598 741 598 747 597 M725 595 725 613 725 613 725 619 M747 597 754 597 757 590 760 591 M747 597 746 605 741 616 M760 591 769 593 773 594 778 593 783 594 M760 591 760 602 761 612 760 621 M783 594 789 594 789 598 798 598 M783 594 780 603 782 604 778 613 M798 598 807 598 807 594 825 594 M798 598 799 608 801 619 M825 594 823 597 822 601 823 607 825 614 M-12 612 -6 613 2 616 M-12 612 -10 620 -13 625 -13 636 -16 641 M2 616 7 613 18 617 24 613 M24 613 29 612 36 612 37 609 43 610 M43 610 55 612 67 615 M67 615 65 620 69 626 68 634 M95 617 98 613 106 615 110 614 M95 617 92 623 94 628 95 629 91 635 M110 614 112 615 119 616 123 614 129 615 M110 614 108 619 108 629 109 639 M129 615 136 615 149 610 159 610 M129 615 129 629 131 629 131 636 M159 610 164 615 166 615 173 617 M159 610 156 615 160 625 157 631 158 635 M173 617 189 617 189 616 198 616 M173 617 170 627 175 635 173 641 M198 616 206 616 218 620 M198 616 201 624 202 631 201 639 M218 620 228 617 236 612 242 612 M218 620 216 625 219 630 215 638 M242 612 250 614 258 621 M242 612 243 618 240 624 240 634 M258 621 261 631 261 641 M279 611 293 612 303 610 M279 611 279 623 281 632 281 638 M303 610 309 611 310 615 317 616 M303 610 303 625 299 625 299 638 M317 616 331 616 331 618 339 618 M317 616 317 623 318 623 318 639 M339 618 351 618 355 615 366 613 M339 618 342 622 339 630 339 637 342 642 M366 613 373 617 382 616 387 617 M366 613 366 629 361 629 361 639 M407 614 414 614 414 610 425 610 M407 614 408 618 411 626 408 633 M425 610 433 612 439 615 447 620 M425 610 429 624 427 633 M447 620 453 615 466 616 473 610 M447 620 447 630 444 632 446 642 M473 610 477 608 476 613 481 610 484 612 M473 610 473 619 471 625 468 633 464 641 M484 612 484 626 484 626 484 637 M512 614 516 614 520 617 527 614 M512 614 513 619 510 629 516 631 514 640 M527 614 537 615 544 616 553 618 M527 614 527 619 531 625 528 629 530 637 M553 618 564 619 572 617 M553 618 551 631 555 639 M572 617 580 614 587 619 591 615 596 616 M572 617 574 626 576 637 M596 616 598 616 600 617 607 620 610 618 M596 616 593 620 593 628 593 636 591 638 M610 618 618 616 622 611 627 614 632 610 M610 618 610 628 616 628 616 637 M632 610 633 613 636 618 641 628 642 632 M657 609 666 614 673 614 M657 609 658 615 658 623 660 634 M673 614 678 613 685 614 693 610 699 610 M699 610 710 612 716 617 725 619 M699 610 697 622 696 637 M725 619 735 619 735 616 741 616 M725 619 724 625 722 628 724 630 720 636 M741 616 748 614 753 620 754 617 760 621 M760 621 767 615 778 613 M760 621 760 626 767 626 767 638 M778 613 786 617 791 618 801 619 M778 613 781 620 777 629 780 640 M801 619 807 618 815 618 825 614 M801 619 802 624 803 632 M825 614 825 621 826 621 826 636 M-16 641 -8 641 -7 638 -3 642 3 639 M-16 641 -17 654 -15 663 M3 639 20 639 20 635 29 635 M3 639 5 643 6 653 8 657 7 662 M29 635 40 635 40 635 46 635 M29 635 29 645 25 645 25 660 M46 635 49 636 59 637 61 635 68 634 M46 635 43 641 42 649 43 655 M68 634 78 637 91 635 M68 634 68 645 71 645 71 659 M91 635 90 639 95 650 94 656 M109 639 116 638 122 635 126 636 131 636 M109 639 107 647 106 648 108 655 M131 636 142 633 147 633 158 635 M131 636 133 642 132 651 M158 635 162 637 163 638 167 638 173 641 M158 635 153 645 151 659 M173 641 184 638 201 639 M173 641 170 646 169 647 172 649 170 655 M201 639 207 639 212 636 215 638 M201 639 198 647 199 654 199 662 M215 638 221 638 232 635 240 634 M215 638 213 644 213 644 216 651 213 653 M240 634 244 635 251 636 258 642 261 641 M240 634 239 637 236 645 232 652 M261 641 273 640 281 638 M261 641 259 651 262 660 M281 638 288 635 299 638 M281 638 281 644 278 648 278 651 276 657 M299 638 305 639 307 637 314 637 318 639 M318 639 324 638 331 640 342 642 M318 639 324 653 325 661 M342 642 348 640 355 640 361 639 M342 642 341 646 340 652 339 653 339 659 M361 639 369 639 369 635 378 635 M361 639 361 649 365 649 365 655 M378 635 386 635 392 634 402 632 408 633 M408 633 412 633 417 631 421 632 427 633 M408 633 407 641 404 642 404 648 405 655 M427 633 435 633 443 641 446 642 M446 642 453 644 459 640 464 641 M446 642 446 646 448 646 448 658 M464 641 471 641 484 637 M464 641 468 644 469 649 474 654 M484 637 496 636 506 638 514 640 M484 637 482 645 487 653 486 658 M514 640 519 640 519 637 530 637 M514 640 510 645 512 650 507 655 506 663 M530 637 546 637 546 639 555 639 M530 637 530 642 529 642 529 656 M555 639 565 635 576 637 M555 639 553 644 553 648 550 655 551 661 M576 637 579 648 578 659 M591 638 591 650 590 650 590 655 M616 637 631 631 642 632 M616 637 617 641 616 643 619 650 617 654 M642 632 646 631 648 635 655 633 660 634 M642 632 643 639 643 649 641 661 M660 634 668 635 675 639 681 641 M660 634 660 641 657 646 654 655 M681 641 685 641 685 637 696 637 M681 641 681 649 678 652 675 660 M696 637 700 638 706 636 715 638 720 636 M696 637 696 654 694 654 694 659 M720 636 724 635 728 636 731 638 737 638 M720 636 720 654 715 654 715 661 M737 638 745 639 752 636 759 638 767 638 M737 638 741 651 742 658 M767 638 773 640 774 637 780 640 M767 638 764 641 760 642 761 646 757 652 M780 640 795 640 795 632 803 632 M803 632 813 632 826 636 M803 632 801 644 805 653 805 661 M826 636 826 642 821 644 820 648 820 652 M-15 663 -8 666 0 664 7 662 M-15 663 -14 667 -15 670 -17 676 -21 680 M7 662 5 666 2 672 2 675 M25 660 34 660 34 655 43 655 M25 660 27 667 27 671 29 677 29 680 M43 655 63 655 63 659 71 659 M43 655 46 668 46 678 M71 659 85 660 94 656 M71 659 67 670 66 679 M94 656 96 656 103 656 107 658 108 655 M94 656 93 660 89 672 88 676 M108 655 115 654 126 651 132 651 M132 651 137 655 147 654 151 659 M132 651 134 661 129 666 129 672 M151 659 153 655 159 657 166 655 170 655 M170 655 182 660 190 658 199 662 M170 655 169 662 173 665 172 667 171 673 M199 662 205 657 211 656 213 653 M213 653 218 654 225 654 232 652 M232 652 246 654 262 660 M232 652 232 664 242 664 242 681 M262 660 268 661 266 657 273 657 276 657 M262 660 258 665 260 675 259 680 M276 657 291 657 291 651 302 651 M276 657 279 664 278 666 279 675 281 678 M302 651 309 655 319 657 325 661 M302 651 302 660 299 660 299 677 M325 661 333 659 339 659 M339 659 343 657 355 656 356 657 365 655 M339 659 339 664 340 672 342 678 M365 655 377 652 389 654 M365 655 365 670 366 670 366 683 M389 654 385 656 382 662 384 670 381 672 M405 655 418 657 425 661 M405 655 405 665 403 672 M448 658 455 658 462 658 474 654 M448 658 448 668 444 674 M474 654 479 657 483 656 486 658 M474 654 472 668 472 682 M486 658 492 659 493 661 500 661 506 663 M486 658 488 667 492 671 491 680 M506 663 506 668 509 670 513 675 513 677 M529 656 538 656 551 661 M529 656 529 673 530 673 530 679 M551 661 562 661 578 659 M551 661 551 668 555 676 557 684 M578 659 585 658 583 654 590 655 M578 659 578 673 578 673 578 682 M590 655 602 652 617 654 M590 655 589 659 591 671 589 675 M617 654 631 655 641 661 M617 654 620 664 618 670 621 679 M641 661 647 660 654 655 M641 661 637 666 638 672 636 676 M654 655 664 660 675 660 M654 655 654 664 658 669 661 678 M675 660 686 660 686 659 694 659 M675 660 675 663 684 663 684 673 M694 659 706 663 715 661 M715 661 730 659 742 658 M715 661 714 667 713 671 716 677 M742 658 746 655 753 654 757 652 M757 652 767 652 767 663 781 663 M757 652 760 662 762 668 760 675 763 683 M781 663 794 663 794 661 805 661 M781 663 781 670 782 670 782 681 M805 661 813 656 817 658 820 652 M805 661 807 670 805 679 M820 652 822 659 823 664 819 671 821 678 M-21 680 -11 681 -3 678 2 675 M2 675 10 679 18 677 29 680 M2 675 4 683 1 688 3 698 M29 680 31 681 35 678 45 680 46 678 M29 680 26 686 28 697 M46 678 46 683 49 683 49 701 M66 679 77 678 81 676 88 676 M66 679 66 684 63 684 63 696 M88 676 94 675 101 673 108 676 M88 676 88 690 92 690 92 696 M108 676 116 671 129 672 M108 676 110 687 109 692 106 702 M129 672 136 671 143 678 144 677 151 679 M129 672 129 690 130 704 M151 679 159 675 171 673 M151 679 153 685 154 694 M171 673 185 673 185 678 199 678 M171 673 170 681 171 687 176 696 M199 678 206 677 216 676 M199 678 201 688 196 696 199 702 M216 676 231 677 242 681 M216 676 220 688 219 694 M242 681 253 680 259 680 M242 681 238 690 234 693 231 703 M259 680 265 678 269 679 278 679 281 678 M259 680 255 687 254 695 M281 678 289 677 295 677 299 677 M281 678 279 680 276 687 277 694 273 695 M299 677 312 680 321 678 M299 677 300 681 300 691 302 699 300 704 M321 678 321 686 319 696 M342 678 349 677 352 683 360 684 366 683 M342 678 344 684 346 691 346 695 M366 683 365 693 365 700 M381 672 386 675 396 672 403 672 M381 672 386 683 389 694 M403 672 409 676 421 677 430 679 M403 672 406 682 407 691 406 698 M430 679 437 680 442 675 444 674 M430 679 432 690 430 696 M444 674 452 680 463 682 472 682 M472 682 484 682 484 680 491 680 M472 682 473 690 472 695 468 705 M491 680 496 679 500 680 507 681 513 677 M491 680 491 686 486 686 486 696 M513 677 517 680 527 679 530 679 M530 679 529 681 531 688 527 692 526 695 M557 684 568 681 578 682 M557 684 557 691 549 691 549 696 M578 682 578 691 577 701 M589 675 599 675 605 675 610 676 621 679 M589 675 593 683 593 686 596 697 600 701 M621 679 620 687 615 691 617 698 M636 676 649 677 661 678 M636 676 638 683 636 689 640 692 639 699 M661 678 669 679 674 673 684 673 M684 673 694 670 700 671 705 672 M684 673 683 678 679 685 677 691 677 699 M705 672 709 675 712 677 716 677 M705 672 702 682 694 693 M716 677 723 673 728 677 733 674 743 673 M716 677 721 685 726 697 M743 673 749 678 752 679 758 682 763 683 M763 683 768 684 776 684 782 681 M763 683 765 692 763 704 M782 681 799 681 799 679 805 679 M782 681 784 685 778 687 782 693 779 699 M805 679 814 676 821 678 M805 679 805 691 804 691 804 702 M821 678 823 686 826 696 M-10 701 -4 698 -2 700 1 702 3 698 M-10 701 -14 705 -12 712 -16 714 -19 723 M3 698 13 699 20 699 28 697 M3 698 4 713 1 724 M28 697 33 697 39 702 49 701 M28 697 23 701 26 712 21 716 M49 701 56 700 57 695 63 696 M63 696 76 697 92 696 M63 696 65 702 66 708 69 714 70 723 M92 696 93 697 101 700 100 701 106 702 M92 696 92 714 93 714 93 723 M106 702 123 702 123 704 130 704 M106 702 107 710 104 711 107 719 106 724 M130 704 136 702 142 698 150 698 154 694 M130 704 130 709 128 709 128 716 M154 694 165 694 165 696 176 696 M154 694 151 701 148 710 147 714 M176 696 190 699 199 702 M176 696 179 702 174 708 179 714 179 719 M199 702 204 700 213 699 219 694 M199 702 197 706 193 709 190 712 190 715 M219 694 223 696 226 700 231 703 M219 694 222 704 217 714 220 721 M231 703 245 703 245 695 254 695 M231 703 235 710 242 714 M254 695 258 694 265 697 273 695 M254 695 256 702 255 709 251 714 253 717 M273 695 279 699 286 702 294 700 300 704 M300 704 309 704 309 696 319 696 M300 704 297 711 295 714 296 722 M319 696 317 702 320 708 317 716 M346 695 351 696 356 696 365 700 M365 700 370 697 379 694 385 694 389 694 M365 700 365 713 359 713 359 721 M389 694 397 697 399 695 406 698 M389 694 386 700 388 703 388 714 384 719 M406 698 414 697 421 697 430 696 M406 698 402 706 405 714 M430 696 435 698 444 693 450 695 M430 696 428 706 431 710 427 716 M450 695 454 696 461 701 466 703 468 705 M468 705 471 710 473 721 M486 696 507 696 507 701 515 701 M515 701 515 697 519 697 524 696 526 695 M515 701 516 707 514 710 515 716 M526 695 530 693 538 693 546 696 549 696 M526 695 526 700 529 708 529 717 530 722 M549 696 552 703 550 712 550 722 M577 701 579 706 580 710 577 712 578 714 M600 701 607 700 610 696 611 700 617 698 M600 701 593 707 591 718 M617 698 625 697 630 701 639 699 M617 698 620 708 618 723 M639 699 644 699 643 697 650 700 652 699 M652 699 656 698 662 700 668 699 677 699 M652 699 652 706 653 706 653 719 M677 699 682 694 694 693 M677 699 681 710 679 715 682 723 M694 693 710 698 726 697 M694 693 693 702 696 711 695 720 694 726 M726 697 731 699 739 695 M726 697 727 705 724 712 722 716 723 724 M739 695 749 696 758 698 763 704 M739 695 739 708 739 708 739 721 M763 704 766 704 769 703 773 702 779 699 M763 704 767 711 767 713 767 717 768 725 M779 699 795 699 795 702 804 702 M779 699 781 706 782 715 784 725 M804 702 811 702 813 699 819 699 826 696 M804 702 805 711 810 724 M826 696 824 706 827 715 827 726 M-19 723 -16 720 -7 722 -1 725 1 724 M-19 723 -17 731 -17 736 -19 740 M1 724 9 719 21 716 M1 724 2 730 7 737 M21 716 31 719 38 720 48 724 M21 716 25 724 27 732 30 736 M48 724 54 724 54 723 70 723 M48 724 46 730 50 736 50 738 M70 723 84 721 93 723 M70 723 70 733 67 733 67 742 M93 723 96 725 102 725 106 724 M93 723 87 729 86 740 M106 724 119 718 128 716 M106 724 111 733 112 740 115 747 M128 716 131 716 135 714 142 716 147 714 M128 716 125 724 128 727 129 736 129 739 M147 714 155 714 169 716 179 719 M147 714 152 720 151 729 155 737 M179 719 182 715 186 715 185 716 190 715 M190 715 203 721 220 721 M190 715 192 723 196 726 194 736 196 739 M220 721 218 723 211 728 210 735 M242 714 243 714 249 717 249 715 253 717 M242 714 236 727 231 739 M253 717 265 714 275 715 M253 717 252 724 256 731 253 737 255 747 M275 715 285 718 286 720 296 722 M275 715 277 725 281 736 M296 722 304 717 313 719 317 716 M296 722 296 724 301 730 300 734 303 738 M317 716 330 715 342 719 M317 716 318 729 321 744 M342 719 349 718 350 718 356 723 359 721 M342 719 342 730 348 735 346 746 M359 721 367 718 370 720 379 716 384 719 M359 721 361 731 362 739 M384 719 388 717 395 715 401 717 405 714 M405 714 414 718 427 716 M405 714 408 720 405 733 408 741 M427 716 433 719 435 716 441 717 445 714 M427 716 426 724 428 737 M445 714 457 715 462 717 473 721 M445 714 446 720 451 732 448 740 450 747 M473 721 473 737 464 737 464 742 M488 721 497 719 499 719 506 717 515 716 M488 721 489 722 484 725 488 731 485 735 M515 716 525 716 525 722 530 722 M530 722 533 728 533 731 532 739 534 742 M550 722 562 721 570 716 578 714 M578 714 582 714 588 716 591 718 M578 714 571 727 568 736 M591 718 600 718 600 723 618 723 M591 718 592 726 592 729 590 732 588 741 M618 723 624 722 634 724 638 725 M618 723 620 728 618 736 619 743 M638 725 649 722 653 719 M638 725 636 729 637 741 637 745 M653 719 666 722 682 723 M653 719 656 723 656 727 657 734 655 736 M682 723 688 725 694 726 M694 726 707 725 723 724 M694 726 694 729 696 729 696 735 M723 724 731 721 735 725 739 721 M723 724 720 727 721 731 716 736 M739 721 749 722 756 725 762 723 768 725 M739 721 743 724 738 729 742 733 741 737 M768 725 772 722 774 725 777 722 784 725 M768 725 767 732 763 732 762 738 763 745 M784 725 791 725 798 726 803 722 810 724 M784 725 783 725 783 732 781 731 781 736 M810 724 818 724 818 726 827 726 M810 724 811 731 807 740 806 744 M827 726 826 728 827 734 828 736 830 742 M-19 740 -13 739 -3 738 7 737 M-19 740 -17 744 -17 752 -18 759 -14 766 M7 737 24 737 24 736 30 736 M30 736 42 735 50 738 M30 736 31 742 28 753 27 759 24 765 M50 738 57 739 67 742 M50 738 49 749 50 762 M67 742 67 746 66 754 66 759 63 762 M86 740 96 741 107 744 115 747 M86 740 85 747 88 755 87 763 M115 747 118 744 122 745 123 740 129 739 M115 747 113 752 116 752 114 757 111 762 M129 739 135 738 149 740 155 737 M129 739 129 746 127 746 127 758 M155 737 167 737 178 737 M155 737 155 749 154 749 154 764 M178 737 186 737 186 739 196 739 M178 737 181 746 177 754 180 766 M196 739 206 740 210 735 M196 739 195 749 192 761 M210 735 212 745 215 751 214 761 216 766 M231 739 240 739 248 746 255 747 M231 739 232 743 235 755 234 759 236 767 M255 747 260 744 270 741 276 741 281 736 M255 747 257 749 258 754 258 761 M281 736 284 734 293 735 297 739 303 738 M281 736 283 747 279 760 M303 738 310 742 321 744 M303 738 303 749 306 749 306 757 M321 744 338 744 338 746 346 746 M321 744 321 753 320 753 320 757 M346 746 354 746 354 739 362 739 M346 746 343 750 344 752 344 758 M362 739 368 738 377 740 383 739 M362 739 360 747 359 761 M383 739 391 740 398 737 408 741 M383 739 383 756 385 756 385 765 M408 741 417 741 417 737 428 737 M408 741 407 743 409 748 404 757 404 760 M428 737 428 744 427 749 423 761 424 767 M450 747 458 742 464 742 M450 747 450 753 444 753 444 756 M464 742 470 742 473 740 481 736 485 735 M464 742 466 747 467 753 468 757 473 762 M485 735 492 734 501 735 509 737 M485 735 486 749 485 758 M509 737 514 738 519 741 529 743 534 742 M509 737 513 754 515 765 M534 742 539 743 547 746 554 747 M554 747 561 746 565 738 568 736 M568 736 573 737 579 740 583 739 588 741 M568 736 571 743 569 745 571 754 574 757 M588 741 604 741 619 743 M588 741 590 746 599 756 599 760 M619 743 628 745 637 745 M619 743 615 757 611 765 M637 745 642 743 647 742 649 739 655 736 M637 745 633 749 631 751 630 756 631 756 M655 736 660 735 669 734 674 736 680 735 M655 736 658 742 660 754 659 762 M680 735 681 734 689 733 691 734 696 735 M680 735 679 752 683 765 M696 735 705 735 705 736 716 736 M696 735 693 740 696 748 695 757 M716 736 721 734 735 738 741 737 M716 736 716 748 721 748 721 762 M741 737 749 740 752 744 755 741 763 745 M741 737 743 745 740 751 740 762 739 767 M763 745 770 741 773 739 776 737 781 736 M781 736 787 737 796 738 802 740 806 744 M781 736 779 744 780 751 779 759 778 767 M806 744 819 741 830 742 M806 744 806 751 807 753 808 761 809 763 M830 742 824 754 823 765 M-14 766 -4 770 8 768 M-14 766 -13 773 -10 774 -10 781 -10 787 M8 768 14 764 19 765 22 766 24 765 M8 768 2 776 0 783 M24 765 35 765 35 762 50 762 M50 762 50 761 55 762 62 762 63 762 M50 762 48 767 49 774 50 782 53 787 M63 762 73 763 80 760 87 763 M87 763 96 765 102 761 111 762 M87 763 85 769 88 779 M111 762 114 762 117 759 125 760 127 758 M111 762 109 772 115 780 114 786 M127 758 130 767 130 782 M154 764 152 773 155 786 M180 766 187 765 192 761 M192 761 199 764 204 766 213 763 216 766 M192 761 192 772 190 772 190 779 M216 766 227 768 236 767 M216 766 216 777 220 777 220 783 M236 767 247 767 247 761 258 761 M258 761 263 759 271 761 279 760 M258 761 259 770 256 779 M279 760 287 758 295 756 306 757 M279 760 283 773 285 784 M306 757 308 754 313 754 320 757 M306 757 306 767 296 767 296 785 M320 757 320 772 322 784 M344 758 352 758 352 761 359 761 M344 758 344 766 346 770 343 775 345 784 M359 761 367 761 378 767 385 765 M359 761 363 775 368 789 M385 765 384 771 381 773 386 780 383 785 M404 760 407 766 403 770 406 774 403 782 M424 767 431 762 435 761 440 760 444 756 M444 756 455 758 473 762 M444 756 444 767 445 781 M473 762 476 760 481 761 485 758 M485 758 498 763 515 765 M485 758 483 767 488 771 487 781 491 787 M515 765 522 765 526 764 M515 765 515 774 508 779 509 785 M526 764 534 765 539 762 541 760 549 761 M526 764 526 775 528 775 528 781 M549 761 550 770 547 773 546 780 547 787 M574 757 586 758 599 760 M574 757 574 768 578 768 578 781 M599 760 602 761 606 761 611 765 M599 760 599 769 593 769 593 778 M611 765 617 765 617 756 631 756 M611 765 610 773 613 780 611 785 M631 756 642 756 642 762 659 762 M631 756 633 767 641 778 M659 762 677 762 677 765 683 765 M659 762 658 767 659 773 654 778 654 786 M683 765 685 763 689 763 690 758 695 757 M683 765 679 773 681 778 674 783 675 788 M721 762 727 764 739 767 M739 767 749 765 759 764 M739 767 741 774 740 780 M759 764 770 764 770 767 778 767 M759 764 759 772 765 772 765 777 M778 767 788 766 795 764 801 764 809 763 M778 767 781 775 784 783 785 787 M809 763 814 763 816 765 823 765 M809 763 809 770 805 771 802 773 802 779 M823 765 823 769 820 769 820 778 M-10 787 -5 782 -2 784 0 783 M-10 787 -8 798 -11 805 M0 783 11 786 23 784 M0 783 -2 785 3 793 -2 800 0 803 M23 784 33 785 35 785 47 788 53 787 M23 784 24 789 29 794 28 802 M53 787 61 787 66 784 M53 787 49 790 48 798 42 803 M66 784 71 779 83 781 88 779 M66 784 66 799 67 810 M88 779 93 779 102 785 106 785 114 786 M88 779 85 791 88 809 M114 786 120 787 120 782 126 782 130 782 M114 786 112 795 115 805 M130 782 130 793 126 801 128 808 M155 786 165 786 165 778 174 778 M155 786 153 790 152 799 148 805 M174 778 179 778 179 779 190 779 M174 778 174 788 169 799 M190 779 199 779 199 783 220 783 M190 779 192 785 192 793 194 800 M220 783 227 783 232 780 239 781 M239 781 247 781 248 777 256 779 M239 781 239 795 242 795 242 809 M256 779 265 780 277 780 285 784 M256 779 259 792 261 806 M285 784 288 784 289 787 292 785 296 785 M285 784 282 795 280 801 279 807 M296 785 313 785 313 784 322 784 M296 785 300 788 299 792 302 796 302 800 M322 784 335 784 335 784 345 784 M322 784 321 794 321 803 M345 784 346 793 342 807 M368 789 377 787 383 785 M368 789 368 801 365 801 365 805 M383 785 391 785 392 784 399 785 403 782 M383 785 383 797 387 797 387 808 M403 782 408 781 414 785 422 782 424 785 M403 782 403 794 400 794 400 800 M424 785 432 785 436 782 439 780 445 781 M424 785 424 790 421 790 421 800 M445 781 453 785 465 784 472 787 M445 781 449 787 449 797 453 802 M472 787 482 787 482 787 491 787 M472 787 468 790 467 797 467 801 467 804 M491 787 495 784 505 786 509 785 M491 787 492 793 490 801 M509 785 513 785 519 781 524 784 528 781 M509 785 512 788 510 794 513 802 M528 781 533 785 538 781 543 786 547 787 M547 787 557 782 566 784 578 781 M547 787 545 790 546 798 546 805 M578 781 573 787 574 801 568 809 M593 778 606 778 606 785 611 785 M593 778 593 789 589 789 589 801 M611 785 618 784 625 778 634 780 641 778 M611 785 614 790 616 798 618 805 M641 778 646 778 646 786 654 786 M654 786 668 786 668 788 675 788 M654 786 653 790 659 796 656 795 657 800 M675 788 685 783 692 786 697 783 M675 788 676 792 676 796 675 795 678 801 M697 783 703 783 708 781 716 780 M716 780 725 778 740 780 M716 780 717 790 717 795 716 800 M740 780 749 780 749 777 765 777 M740 780 740 793 741 793 741 805 M765 777 759 789 760 798 756 810 M785 787 788 787 794 781 802 779 M785 787 785 792 786 795 784 797 787 803 M802 779 799 784 800 797 800 799 800 808 M-11 805 -8 803 -8 803 -4 804 0 803 M-11 805 -10 818 -12 829 M0 803 9 806 17 802 28 802 M0 803 5 806 8 812 10 815 11 822 M28 802 33 802 35 803 41 805 42 803 M42 803 54 806 57 805 67 810 M42 803 42 815 47 822 45 830 M67 810 80 807 88 809 M67 810 72 815 70 819 74 825 M88 809 104 809 104 805 115 805 M88 809 84 814 86 823 M115 805 119 808 123 808 127 809 128 808 M115 805 115 814 112 818 108 827 M128 808 138 808 138 805 148 805 M128 808 131 815 129 821 134 822 135 828 M148 805 157 805 157 799 169 799 M148 805 147 809 149 819 152 824 M169 799 175 798 183 797 194 800 M169 799 173 805 172 814 174 823 M194 800 201 799 210 802 222 805 M194 800 194 808 197 820 194 827 M222 805 231 806 242 809 M222 805 222 808 220 815 220 820 219 823 M242 809 250 806 257 807 261 806 M242 809 238 814 239 816 238 817 238 821 M261 806 267 804 269 808 273 808 279 807 M279 807 289 806 295 800 302 800 M279 807 279 814 277 814 277 819 M302 800 310 804 321 803 M302 800 302 807 295 807 295 824 M321 803 328 803 328 807 342 807 M321 803 321 814 326 814 326 829 M342 807 353 807 353 805 365 805 M342 807 342 813 336 823 M365 805 372 806 378 807 382 809 387 808 M365 805 362 811 361 823 M387 808 393 809 392 805 397 799 400 800 M400 800 407 800 411 803 421 800 M400 800 403 809 406 814 409 824 M421 800 426 801 439 802 446 800 453 802 M421 800 423 808 422 811 421 815 422 820 M453 802 456 801 462 800 467 804 M453 802 453 816 441 816 441 828 M467 804 481 800 490 801 M467 804 466 815 465 828 M490 801 493 800 502 801 508 800 513 802 M490 801 490 807 491 811 492 812 492 820 M513 802 527 802 527 808 535 808 M535 808 541 808 541 805 546 805 M535 808 534 815 533 818 537 822 534 828 M546 805 556 804 568 809 M546 805 548 810 550 819 550 824 M568 809 572 809 581 802 589 801 M568 809 571 814 567 819 568 819 571 825 M589 801 601 800 607 804 618 805 M589 801 592 807 591 811 597 814 598 822 M618 805 627 805 638 803 M618 805 621 812 617 820 621 826 619 830 M638 803 645 804 646 800 654 802 657 800 M638 803 636 807 638 818 635 822 637 831 M657 800 662 799 667 803 671 800 678 801 M657 800 660 810 664 815 662 821 M678 801 685 799 695 797 701 799 M701 799 707 797 716 800 M701 799 704 809 703 820 M716 800 730 804 741 805 M716 800 719 808 719 815 718 824 M741 805 747 810 756 810 M741 805 745 809 742 815 744 819 745 827 M756 810 765 808 770 808 778 807 787 803 M756 810 757 815 757 823 758 830 M787 803 789 805 793 805 800 806 800 808 M787 803 786 813 787 825 M800 808 800 814 801 818 800 816 799 822 M831 800 827 806 825 814 826 816 823 824 M-12 829 -1 828 4 821 11 822 M11 822 13 823 21 819 22 821 M22 821 35 823 45 830 M45 830 56 827 67 829 74 825 M74 825 77 825 86 823 M86 823 99 824 108 827 M108 827 125 827 125 828 135 828 M135 828 137 827 145 827 145 823 152 824 M152 824 161 824 174 823 M174 823 187 823 194 827 M194 827 206 826 219 823 M219 823 224 823 228 820 232 821 238 821 M238 821 245 821 245 824 253 824 M253 824 264 822 277 819 M277 819 282 824 291 823 295 824 M295 824 303 828 314 829 326 829 M326 829 327 827 333 823 336 823 M336 823 349 824 361 823 M361 823 370 823 380 826 M380 826 395 827 409 824 M409 824 411 825 417 824 417 824 422 820 M422 820 427 823 434 827 441 828 M441 828 448 828 455 830 459 827 465 828 M465 828 472 825 477 825 486 824 492 820 M492 820 498 821 499 819 501 824 506 823 M506 823 522 827 534 828 M534 828 538 825 541 828 546 825 550 824 M550 824 561 823 571 825 M571 825 587 824 598 822 M598 822 600 824 609 824 613 829 619 830 M619 830 622 829 628 831 630 833 637 831 M637 831 650 824 662 821 M662 821 672 821 684 821 M684 821 690 820 697 819 703 820 M703 820 708 819 714 822 718 824 M718 824 730 828 745 827 M745 827 748 826 750 830 755 829 758 830 M787 825 792 822 793 826 799 822 M799 822 808 822 813 825 823 824" fill="none" stroke="#666869" stroke-width="1"/></g>
<path d="M5.9 705.9 8.9 704.4 11.8 702.2 17.7 699.9 23.6 698.5 28.8 699.2 30.3 702.2 27.3 704.4 28.1 707.3 34.0 706.6 42.9 705.9 47.3 704.4 48.0 706.6 45.1 708.1 44.3 715.5 48.8 716.2 51.0 718.4 51.7 724.3 55.4 725.1 59.1 724.3 62.1 727.3 65.0 728.8 69.5 727.3 70.9 730.2 73.9 733.2 75.4 737.6 76.8 740.6 73.1 739.9 69.5 742.1 65.8 743.5 68.0 747.2 72.4 750.2 78.3 751.7 80.5 749.5 79.8 745.0 82.8 742.1 87.2 741.3 91.6 743.5 96.1 745.0 100.5 748.0 104.9 750.2 106.4 753.2 102.0 753.9 96.1 755.4 91.6 756.8 106.4 757.6 113.8 757.6 114.5 750.9 118.2 748.7 122.7 745.0 127.1 741.3 133.0 742.1 137.4 745.0 141.9 746.5 146.3 745.0 149.0 738.0 150.0 730.0 148.5 722.0 157.7 723.9 166.9 727.6 176.2 733.1 183.6 736.8 191.0 742.4 198.4 746.1 203.9 749.8 207.6 755.3 216.8 758.1 239.0 757.1 231.6 753.5 226.1 747.9 218.7 742.4 211.3 740.5 203.9 736.8 198.4 731.3 189.1 723.9 183.6 718.4 187.3 711.0 194.7 705.4 202.0 698.0 197.4 693.4 196.5 692.5 191.0 694.3 187.3 690.6 181.7 689.7 177.7 686.9 177.1 682.3 181.7 679.6 187.3 680.5 191.0 674.9 196.5 669.4 203.9 664.8 211.3 660.2 215.9 656.5 217.7 650.6 221.4 655.6 228.8 653.1 235.0 649.4 241.1 646.9 251.0 645.7 254.7 649.4 260.8 653.1 268.2 650.6 273.2 654.3 280.5 653.1 284.2 650.6 290.4 648.2 297.8 650.6 303.9 654.3 307.6 642.0 308.9 634.6 311.3 624.8 313.8 621.8 320.0 624.8 321.2 634.6 322.4 642.0 326.1 649.4 329.8 655.6 333.5 658.0 344.6 658.0 350.0 659.3 340.0 660.5 349.9 656.8 362.2 653.1 376.9 650.6 389.3 648.9 404.0 647.4 418.8 648.2 438.5 650.6 450.8 654.3 463.2 659.3 475.5 666.7 485.3 674.0 490.0 673.7 494.2 680.0 499.5 685.3 505.8 688.5 510.0 691.6 506.9 695.9 506.7 702.2 508.8 708.5 511.6 712.7 515.3 711.1 521.6 711.5 525.9 710.6 532.2 709.6 537.5 709.0 539.6 706.4 542.7 703.2 541.7 701.7 545.9 702.2 547.5 700.1 549.6 701.1 547.5 704.3 546.9 707.5 553.3 704.3 559.6 700.1 565.9 695.9 573.3 690.6 578.6 689.0 579.6 685.3 578.6 683.2 582.8 684.3 584.9 680.0 588.1 676.9 592.3 675.8 595.5 673.2 597.6 673.7 599.7 676.3 603.9 675.3 612.5 674.5 616.2 680.2 623.6 683.9 631.0 688.8 638.4 696.2 642.1 703.6 648.2 708.5 655.6 713.4 656.8 720.8 658.1 727.0 664.2 731.9 671.6 738.1 675.3 744.2 680.2 751.6 681.5 762.7 687.6 757.8 700.0 757.8 702.4 766.4 704.9 772.6 711.0 780.0 713.5 787.3 712.3 793.5 712.0 806.0 6.0 806.0Z" fill="#00426a" stroke="#000" stroke-width="1.3" stroke-linejoin="round"/>
<path d="M342.5 658.0 344.9 653.1 351.1 654.3 354.8 650.6 358.5 646.9 360.9 644.5 362.2 648.2 358.5 651.9 354.8 655.6 349.9 657.3Z M369.6 653.1 373.3 646.9 376.9 642.0 375.7 633.4 378.2 631.7 380.6 637.1 385.6 634.6 386.8 629.7 389.3 630.9 390.5 638.3 397.9 643.3 393.0 644.5 386.8 645.7 380.6 649.4 374.5 653.1Z M417.6 644.5 421.3 640.8 426.2 642.0 427.4 637.6 431.1 638.3 432.4 642.0 438.5 640.8 445.9 639.6 448.4 638.3 449.6 640.8 453.3 640.8 455.3 645.7 452.1 648.9 443.4 646.9 436.1 648.2 426.2 648.9 420.0 646.9Z M474.2 655.6 477.9 656.8 481.6 654.3 485.3 658.0 489.0 659.3 493.9 655.6 495.2 651.9 498.9 654.3 496.4 658.0 491.5 660.5 487.8 663.0 485.3 667.9 490.2 671.6 497.6 672.8 502.6 676.5 508.7 679.0 507.5 681.4 500.1 680.2 492.7 676.5 485.3 672.8 480.4 669.1 481.6 663.0 477.9 660.5 475.0 660.5Z M508.5 694.8 512.7 696.4 515.3 701.1 515.3 707.5 514.3 710.6 511.1 709.6 509.0 704.3 508.1 699.0Z M806.0 570.0 801.0 574.0 800.5 590.0 802.0 600.0 800.5 615.0 801.5 630.0 800.0 643.0 806.0 646.0Z" fill="#00426a" stroke="#000" stroke-width="1" stroke-linejoin="round"/>
<path d="M786.0 654.3C785.5 656.3 783.8 658.8 784.0 662.2C784.2 665.7 787.0 664.2 787.0 668.1C787.0 672.0 783.8 673.5 784.0 677.9C784.2 682.3 785.8 682.8 787.9 685.8C790.0 688.8 790.9 687.5 792.5 690.0C794.1 692.5 793.8 692.5 794.5 696.0C795.2 699.5 796.3 700.4 795.3 704.0C794.3 707.6 791.9 707.2 790.5 710.4C789.1 713.6 791.1 714.4 789.7 716.8C788.3 719.2 786.3 717.2 784.9 720.0C783.5 722.8 784.2 726.0 784.0 728.0" fill="none" stroke="#000" stroke-width="3.6" stroke-linecap="round"/>
<path d="M786.0 654.3C785.5 656.3 783.8 658.8 784.0 662.2C784.2 665.7 787.0 664.2 787.0 668.1C787.0 672.0 783.8 673.5 784.0 677.9C784.2 682.3 785.8 682.8 787.9 685.8C790.0 688.8 790.9 687.5 792.5 690.0C794.1 692.5 793.8 692.5 794.5 696.0C795.2 699.5 796.3 700.4 795.3 704.0C794.3 707.6 791.9 707.2 790.5 710.4C789.1 713.6 791.1 714.4 789.7 716.8C788.3 719.2 786.3 717.2 784.9 720.0C783.5 722.8 784.2 726.0 784.0 728.0" fill="none" stroke="#00426a" stroke-width="1.8" stroke-linecap="round"/>
<path d="M188.7 723.3 188.3 721.8 188.9 720.3 190.8 720.1 191.0 722.2 190.2 723.8Z M196.8 718.9 196.6 720.0 194.2 719.5 194.7 718.7Z M205.7 685.5 204.3 685.2 204.6 683.6 205.9 683.9 206.7 684.7Z M214.4 687.5 215.5 686.0 217.0 687.3 218.0 688.9 216.4 689.8 214.8 690.4 214.0 688.8Z M217.6 693.9 217.8 695.3 216.7 696.5 215.1 696.4 215.2 694.6 216.4 693.5Z M218.7 702.0 220.0 703.1 217.7 704.7 215.8 704.2 216.5 702.3Z M200.4 721.2 202.4 721.6 201.8 724.3 200.1 723.9 199.0 722.0Z M204.3 691.5 204.6 691.2 205.8 691.9 206.3 692.9 205.6 693.1 204.4 692.3Z M194.7 722.8 193.7 721.9 195.2 719.9 196.0 721.4Z M194.6 727.4 195.4 727.2 195.8 728.7 195.2 729.6 194.5 729.3 193.6 728.0Z M206.4 684.4 204.7 683.0 206.1 682.0 207.7 683.1Z M204.0 702.2 203.6 702.7 203.2 702.6 203.2 702.3 203.5 701.9 204.2 701.5Z M210.0 678.3 207.9 679.4 206.9 678.2 209.3 677.2Z M210.7 672.9 210.9 671.9 212.0 672.1 211.6 673.3Z M207.0 692.5 205.2 691.6 204.6 689.6 205.0 688.8 206.2 688.8 207.4 690.9Z M193.9 715.1 193.3 714.4 193.7 713.9 194.4 714.3 194.5 714.9Z M203.2 706.3 204.3 705.0 206.1 704.7 207.1 705.1 206.2 706.3 204.4 706.6Z M208.7 683.5 209.1 682.9 209.2 683.8 209.1 684.3 208.7 684.6 208.4 684.2Z M192.5 719.6 191.3 718.3 190.5 716.7 192.2 717.5 193.6 719.1Z M223.4 688.2 223.0 687.3 223.6 687.0 224.4 687.8 224.5 688.7 224.3 689.1 223.7 688.9Z M210.7 697.7 210.7 698.5 210.3 698.8 209.9 698.8 209.4 698.2 209.9 697.3 210.5 696.9Z M206.7 706.2 206.3 704.2 208.4 704.0 208.6 705.8 207.9 706.6Z M216.8 693.6 215.5 692.5 216.3 691.3 217.4 691.5 217.7 692.7Z M221.0 690.3 221.0 688.2 222.0 686.8 222.8 687.7 222.9 689.6 221.9 690.7Z M223.3 686.4 222.0 687.1 220.9 686.7 220.6 685.4 221.2 684.2 222.1 684.2 223.2 684.5Z M201.3 704.3 202.3 704.6 202.9 705.1 202.5 705.5 201.9 705.5 201.3 705.1Z M213.4 691.5 213.9 690.4 215.5 690.0 216.7 690.3 216.6 691.3 214.9 691.6Z M210.3 680.9 208.7 681.9 207.4 681.5 206.7 680.6 207.1 679.6 208.2 678.7 209.8 679.2Z M215.7 690.6 216.6 691.6 215.6 692.5 213.9 692.5 214.6 690.9Z M212.7 676.5 213.0 675.1 214.5 674.0 215.3 674.9 214.7 676.8Z M227.4 678.1 226.8 679.1 225.3 679.2 224.7 677.6 224.9 676.4 226.1 676.6 227.6 676.6Z M205.6 722.3 204.1 724.1 202.0 724.0 202.1 722.5 203.7 721.8Z M218.1 677.9 218.1 676.5 219.8 675.9 220.9 677.1 220.7 678.5 219.0 678.9Z M202.7 697.2 203.4 696.2 204.0 697.1 204.2 698.1 203.6 699.2 202.6 698.8 202.0 697.9Z M211.3 701.9 210.4 703.6 208.7 703.6 208.7 701.7 210.0 699.5 211.4 700.4Z M216.6 681.6 214.8 681.6 214.0 680.4 214.4 679.1 215.5 677.8 217.3 678.2 217.4 680.0Z M188.9 720.6 189.9 720.5 190.8 720.7 191.6 721.2 191.1 721.7 190.3 722.1 189.5 721.3Z M206.5 685.7 206.1 684.1 207.7 683.5 207.7 685.2Z M219.1 685.8 220.2 685.3 220.9 687.2 219.8 688.1 218.7 687.4Z M194.1 708.9 195.3 709.4 196.3 710.1 195.1 711.3 193.7 712.8 192.9 711.7 192.5 710.3Z M215.2 707.5 215.9 706.4 216.5 706.7 216.4 707.6 215.3 708.4Z M202.2 700.7 201.2 701.2 200.4 700.5 200.7 699.7 201.8 699.6Z M212.5 688.3 212.2 686.7 212.9 685.8 214.2 686.4 213.6 688.3Z M208.3 682.5 209.1 682.5 210.0 683.2 210.7 684.3 209.7 684.7 207.9 683.3Z M190.1 721.5 190.1 720.1 191.3 719.6 191.3 721.1Z M220.7 672.2 221.3 672.5 221.1 674.2 220.4 673.3Z M211.0 684.2 212.2 684.3 212.8 685.5 211.8 686.7 210.9 685.8Z M217.0 687.0 215.7 685.8 215.9 683.1 217.6 684.3 218.1 686.8Z M203.7 714.8 204.7 715.2 204.0 715.6 203.1 715.6 202.0 715.2 202.5 714.7Z M222.8 688.5 222.0 689.3 220.3 689.7 220.4 688.7 221.7 688.3Z M220.7 702.6 219.4 703.5 218.3 701.8 219.9 701.3Z M198.2 704.9 198.6 704.7 199.1 705.2 199.3 705.6 199.1 705.9 198.5 705.7Z M220.1 704.6 219.7 706.3 218.0 707.0 216.7 705.9 217.1 704.3 218.5 704.3Z M208.6 703.7 208.7 706.7 206.6 707.3 205.0 705.5 205.6 702.7Z M206.7 679.8 207.8 679.7 207.8 680.8 207.2 681.2 206.3 680.8Z M196.9 708.6 195.6 710.2 193.9 709.1 194.8 707.4Z M220.3 684.3 219.6 684.7 218.6 684.7 218.2 683.6 218.7 682.8 219.7 682.5 220.6 683.2Z M206.3 701.0 205.5 700.6 205.1 699.5 206.1 699.2 206.8 699.2 207.4 699.9 207.5 701.2Z M209.1 705.3 208.5 706.4 207.2 706.3 206.4 705.6 206.4 704.5 207.5 703.8 208.8 704.2Z M227.8 679.7 228.5 681.2 227.5 682.3 226.2 681.6 225.2 680.1 225.6 678.5 226.9 678.3Z M219.3 694.1 218.2 694.0 217.7 693.5 217.3 692.3 219.1 691.4 220.1 692.0 219.9 693.0Z M202.7 727.8 201.9 728.6 201.1 728.4 200.6 727.8 201.4 726.8 202.2 726.9 202.6 727.2Z M226.7 685.0 226.0 684.6 226.0 684.2 226.2 683.7 227.1 683.7 226.9 684.4Z M214.7 680.0 215.8 682.2 213.2 682.3 212.2 680.4Z M222.4 677.5 223.9 675.9 225.7 677.1 223.4 679.8Z M189.9 717.2 188.4 718.2 186.5 717.8 186.1 715.7 187.9 715.1 189.3 715.6Z M215.3 695.0 215.9 695.7 214.8 696.1 213.7 695.7 214.5 694.9Z M203.7 688.4 204.4 688.0 205.3 687.5 206.0 688.8 205.9 690.0 205.0 689.8 204.2 689.5Z M215.7 703.7 215.6 705.3 214.1 706.6 213.1 705.0 214.4 702.9Z M192.7 715.8 192.7 714.9 193.5 714.9 194.6 715.3 193.9 716.2 193.2 716.7Z M226.8 675.0 228.2 677.3 226.6 679.2 224.4 678.3 224.5 675.8Z M201.9 726.0 200.4 726.0 199.5 724.5 200.8 724.0 202.1 724.9Z M207.2 699.7 205.7 699.3 207.0 698.5 208.4 699.1Z M209.6 709.7 208.4 708.5 208.1 706.9 210.1 706.6 210.5 708.3Z M222.3 680.9 221.3 680.3 221.3 679.2 223.0 678.7 225.1 678.9 224.9 680.3 223.5 680.7Z M219.9 676.7 221.8 678.4 219.6 680.1 218.0 678.4Z M207.2 691.5 206.8 692.5 206.1 693.1 205.3 692.4 205.4 691.6 206.1 690.8Z M223.6 687.5 225.7 688.1 226.0 689.6 224.6 690.8 222.5 690.9 222.5 689.2Z M217.8 684.9 218.5 683.4 220.3 684.0 220.0 685.4 218.3 686.3Z M221.3 692.8 222.7 692.3 224.2 693.4 224.9 695.2 223.1 695.0Z M198.4 709.9 199.3 709.1 200.8 709.6 200.9 710.5 199.8 711.0Z M200.8 702.1 198.9 701.6 198.4 699.7 200.9 699.5 202.6 701.2Z M193.0 714.5 192.1 712.6 193.2 710.2 196.1 711.2 195.8 714.5Z M207.9 696.5 206.4 697.8 204.5 697.5 205.6 695.5 207.3 694.5Z M199.8 705.0 199.2 703.9 200.7 703.2 202.1 703.1 201.8 704.3 201.2 705.2 200.1 705.9Z M220.9 703.7 220.3 704.9 219.5 705.4 218.5 704.8 217.5 703.6 218.5 703.1 219.4 702.9Z M224.4 686.5 223.9 686.0 224.1 685.5 224.8 685.1 225.6 685.8 225.5 686.4 225.1 686.8Z M208.6 694.8 207.3 694.5 207.8 693.7 209.1 693.8Z M212.0 704.1 212.7 702.4 214.0 702.3 214.7 702.6 214.2 703.8 213.3 705.1 212.3 705.0Z M205.0 687.6 207.4 686.7 207.5 689.2 205.8 689.5Z M218.9 690.9 219.7 688.1 221.4 688.5 221.1 691.5Z M213.8 704.0 212.2 704.5 211.9 702.9 213.8 702.7Z M187.0 720.4 188.0 720.5 188.9 721.6 187.9 721.6Z M188.3 711.6 188.6 712.1 188.1 712.2 187.5 711.9 187.2 711.6 187.1 711.1 187.7 711.2Z M208.6 676.0 208.4 674.4 208.8 673.1 209.6 672.5 211.0 672.9 210.2 674.7 209.9 676.8Z M223.3 672.0 222.2 672.1 221.4 672.1 221.3 670.8 222.2 670.3 222.9 670.7Z M207.4 676.3 207.9 677.6 207.2 677.2 206.6 676.7 206.5 675.7 206.8 675.1Z M224.7 692.3 223.9 692.9 223.2 692.7 223.5 692.0 224.4 691.7Z M195.2 717.5 195.6 718.4 195.5 720.2 194.1 720.0 193.6 719.1 193.5 718.0 194.4 716.5Z M217.8 689.1 217.5 690.9 215.9 689.2 215.0 687.5 216.0 687.3Z M216.8 673.1 216.0 673.2 216.3 671.7 217.1 670.5 217.2 671.8Z M210.5 677.9 209.8 678.9 209.1 678.3 208.8 676.8 209.8 676.7Z M191.0 725.3 190.3 725.6 190.5 725.1 191.1 724.7 191.6 724.8Z M212.4 683.1 211.8 682.7 211.8 681.6 212.7 681.1 213.3 681.7 213.2 682.7Z M210.3 692.6 208.1 692.1 207.9 690.3 209.7 689.5 211.0 690.7Z M213.0 703.5 214.3 704.8 215.5 706.3 214.8 706.9 213.7 706.7 212.8 705.4 212.8 704.6Z M205.3 692.4 203.9 693.3 202.6 692.5 202.9 690.7 204.6 690.9Z M198.8 707.5 196.6 705.7 198.5 705.6 200.6 706.8Z M215.1 679.8 216.7 680.7 216.4 682.2 214.2 683.1 213.1 682.0 213.5 681.0Z M194.2 714.0 193.0 715.1 192.4 714.3 193.4 713.0 194.2 713.1Z M219.8 698.8 219.6 700.9 218.4 701.6 218.5 699.4Z M203.3 701.2 204.0 699.6 205.8 699.6 207.0 700.6 206.3 701.7 204.7 703.0Z M193.0 712.4 193.0 710.9 193.5 710.6 193.6 711.8Z M208.9 685.2 208.6 685.7 207.8 686.0 207.2 685.7 207.6 685.2Z M196.8 719.9 196.6 719.7 196.8 719.3 197.4 719.0 197.9 719.2 197.4 719.7Z M217.3 679.9 215.0 678.8 215.0 675.9 217.4 675.0 218.2 677.4Z M200.4 717.8 200.0 719.5 198.5 718.8 197.7 716.6 198.4 715.1 199.6 715.6 200.2 716.5Z M214.5 680.0 214.8 678.5 215.6 678.5 215.9 679.5 214.9 680.5Z M203.6 703.0 204.0 705.1 200.7 705.3 200.9 702.4Z M212.6 692.2 212.7 691.3 212.9 690.8 213.3 690.1 213.6 690.7 213.5 691.3 213.2 691.8Z M199.5 725.7 199.2 724.4 199.8 723.4 200.7 724.1 200.5 725.5Z M202.7 702.1 202.4 701.5 202.4 700.5 203.3 701.0 204.0 701.6 203.5 702.2Z M218.7 676.1 217.6 675.9 217.2 674.6 218.4 674.3 219.6 675.4Z M209.1 678.5 208.7 679.2 207.9 679.4 207.8 678.6 208.0 678.0 208.9 677.7Z M211.0 688.9 213.6 687.9 214.0 689.3 212.8 690.5 211.5 691.2 210.6 690.6Z M212.0 686.4 212.0 687.6 211.0 688.7 209.7 688.9 209.1 687.7 209.6 685.9 211.1 685.7Z M204.8 721.7 203.2 722.8 201.5 721.2 202.5 719.5 204.7 720.1Z M206.1 682.7 205.7 681.3 205.5 679.9 206.6 679.6 207.7 679.1 208.3 680.7 207.3 682.0Z M217.6 692.7 217.4 693.1 216.9 692.5 216.6 691.7 216.8 691.2 217.2 691.2 217.7 692.1Z M204.6 688.9 205.0 689.4 204.5 689.9 203.5 689.9 203.6 689.4Z M207.9 679.5 208.8 680.1 210.0 681.6 208.2 681.7 207.0 681.4 206.5 679.9Z M204.1 720.7 202.7 721.0 202.1 719.9 202.6 718.9 204.4 719.2Z M200.5 726.7 199.7 726.3 200.3 724.9 202.8 724.6 202.3 726.3Z M197.9 716.0 197.6 715.1 198.0 714.3 199.1 714.9 199.5 716.1 199.3 717.2 198.3 716.9Z M190.4 713.8 189.9 713.0 189.6 712.1 190.2 711.8 191.2 712.2 191.4 713.3 191.2 714.2Z M197.7 716.6 197.0 716.5 196.2 715.9 196.9 715.7 197.7 715.7 198.6 716.2 198.2 716.6Z M209.4 703.1 210.2 703.8 210.1 705.3 209.3 706.6 208.5 705.4 208.1 703.5Z M199.1 728.0 198.6 729.2 197.0 729.0 196.6 727.5 197.9 726.9 199.3 726.6Z M201.2 717.5 200.8 717.9 200.1 718.1 200.0 717.4 200.4 716.8 201.0 717.0Z M202.1 720.3 202.3 719.8 202.6 719.4 203.1 719.1 203.4 719.2 203.5 719.6 202.8 720.3Z M207.0 690.0 205.4 687.7 205.3 685.5 207.5 686.0 208.2 687.6Z M199.5 718.2 198.8 719.4 197.3 720.1 197.5 719.1 198.0 718.0 199.1 717.8Z M194.0 713.6 193.3 714.0 192.4 714.0 191.6 713.5 192.1 712.8 193.5 712.8Z M189.0 717.9 190.4 718.6 189.9 719.8 188.4 720.4 187.0 720.3 186.2 719.3 187.0 717.9Z M200.2 718.4 200.8 717.0 202.6 717.7 201.3 719.3Z M213.1 702.7 212.6 701.0 214.4 700.3 215.3 701.6 215.0 702.9 214.0 703.2Z M211.3 700.9 210.2 700.0 210.8 698.3 212.0 698.1 213.1 698.8 213.5 700.6 212.2 701.2Z M220.6 689.0 221.1 689.6 221.0 690.7 220.1 690.1 219.6 689.2Z M224.0 683.9 224.9 684.9 224.0 685.5 223.0 684.3Z M206.4 686.4 206.8 685.8 207.7 685.9 208.2 686.7 208.0 687.3 207.3 687.6 206.5 687.1Z M204.1 709.2 204.3 708.2 206.0 707.9 205.2 709.3Z M209.3 689.5 209.7 690.8 208.4 690.8 208.1 689.6Z M208.8 679.2 208.0 677.6 207.7 676.6 207.9 675.4 209.3 675.6 209.6 677.1 209.8 678.4Z M218.0 683.3 217.3 683.9 216.4 682.7 216.4 681.6 217.2 681.5Z M195.2 721.7 195.7 723.3 194.1 723.1 193.9 722.0Z M194.1 719.8 193.9 720.4 192.7 719.6 193.3 719.1Z M189.6 710.9 189.7 713.0 187.2 713.1 187.7 711.6Z M216.7 694.2 218.1 692.0 219.8 693.2 218.8 695.1Z M209.4 680.4 210.2 680.9 210.3 682.1 209.1 682.3 208.4 681.7 208.0 680.9 208.5 680.1Z M203.7 695.1 205.5 695.1 206.1 697.1 203.8 697.4Z M207.6 714.4 208.5 714.3 209.4 714.6 208.9 715.4 208.5 715.9 208.0 715.2Z M219.2 696.0 218.9 695.6 219.2 694.9 219.5 695.1Z M208.0 709.5 206.8 709.4 206.5 707.7 207.5 705.8 208.3 707.7Z M206.2 715.1 205.5 713.5 206.7 713.0 207.6 712.7 208.3 713.6 209.0 714.9 207.9 715.7Z M215.7 679.7 216.0 680.8 215.1 681.3 213.9 681.0 213.7 679.7 214.3 679.2 215.0 679.2Z M214.7 704.0 215.2 703.8 215.9 704.1 215.9 704.9 215.0 704.6Z M195.2 722.7 194.9 724.2 194.1 724.2 194.0 723.3 194.6 722.4Z M220.0 680.4 221.8 680.1 220.9 681.3 219.3 681.4Z M201.7 704.2 201.1 704.4 200.5 704.0 200.5 703.0 201.0 701.9 201.7 702.7 201.8 703.4Z M223.2 672.6 223.5 674.4 222.6 675.7 221.5 675.0 221.8 673.3Z M190.1 710.8 189.8 709.7 191.1 709.3 191.8 710.0 192.1 711.2 190.7 711.7Z M221.9 672.7 222.7 673.4 223.6 674.2 222.8 674.9 222.1 675.3 221.5 674.6 221.1 673.5Z M194.7 725.8 193.1 726.9 191.8 725.7 193.4 724.4 195.6 723.9Z M202.8 699.8 204.9 700.7 204.3 702.5 201.9 702.8Z M204.3 694.9 204.2 693.0 205.3 692.2 206.2 692.6 206.0 694.2 205.2 695.7Z M200.8 718.0 202.1 718.9 203.6 720.0 202.2 721.0 200.9 721.5 199.7 720.6 199.8 719.2Z M204.0 714.6 203.2 714.1 203.9 713.5 205.0 713.6 205.9 713.7 205.7 714.3 205.0 714.9Z M206.3 707.7 207.2 707.3 208.1 707.1 208.5 708.0 208.2 708.9 207.3 709.0 206.6 708.6Z M223.2 674.6 224.6 673.7 226.0 673.8 225.9 674.9 225.7 676.4 223.7 676.8 223.1 675.8Z M197.5 712.7 198.7 711.3 199.6 712.1 199.8 713.3 199.8 715.0 198.8 715.1 197.5 714.9Z M219.1 686.2 218.8 685.8 218.6 685.2 218.9 684.9 219.3 685.2 219.4 685.8 219.3 686.1Z M203.2 715.2 204.2 714.7 204.9 715.0 205.8 715.3 205.2 716.2 204.4 716.4 203.7 716.1Z M227.7 678.0 227.4 680.2 225.3 680.5 226.0 678.4Z M217.6 703.3 217.6 702.4 218.3 701.8 219.1 702.6 218.6 703.7Z M208.8 699.6 207.6 699.1 207.6 698.3 208.9 698.8Z M214.4 698.9 214.7 698.2 215.1 697.9 215.7 698.2 215.5 699.2 214.8 699.1Z M211.8 690.3 211.0 690.5 210.5 689.9 210.5 689.1 211.2 688.8 211.8 689.4Z M223.4 670.9 224.2 672.9 222.9 673.5 221.7 672.1 221.2 670.3 221.6 668.6 222.9 669.7Z M209.2 715.0 207.7 715.3 207.0 714.7 208.6 713.9 209.9 713.6 210.4 714.2Z M227.0 676.2 228.6 678.7 225.7 680.3 224.2 677.2Z M189.6 708.1 190.9 707.5 192.0 708.5 191.5 709.6 190.5 709.7 189.8 709.3Z M214.8 705.8 215.1 704.8 216.2 704.6 216.8 705.5 216.6 706.4 215.6 706.2Z M222.9 681.6 221.9 682.7 221.0 681.6 220.1 680.3 221.1 678.7 223.0 678.4 224.0 680.2Z M217.7 703.5 217.8 704.2 216.1 704.7 215.0 704.1 215.0 703.3 216.9 702.8Z M200.2 713.4 200.8 713.8 200.3 714.0 199.7 714.0 199.1 713.6 198.8 713.1 199.6 713.3Z M215.8 699.5 215.4 700.4 214.7 701.1 213.9 700.8 214.2 699.5 214.8 698.6 215.9 697.9Z M216.6 678.4 218.4 677.5 219.0 679.4 217.2 680.3Z M198.9 712.0 200.2 712.5 200.9 713.6 200.2 713.8 199.6 713.5 198.5 712.7Z M195.5 725.9 194.8 726.6 194.1 726.3 194.6 725.5 195.3 725.2 196.0 725.2Z M199.4 705.9 200.2 707.4 199.5 708.2 198.4 707.0 197.7 705.9 198.0 704.9 198.8 705.0Z M226.1 681.6 225.3 682.0 224.4 681.6 224.5 679.8 225.8 679.1 227.1 678.9 226.9 680.7Z M201.0 718.3 201.2 716.9 202.2 715.6 202.7 717.2 203.0 718.8 201.9 719.7 201.2 719.3Z M204.7 686.9 204.7 686.2 205.8 685.5 206.8 685.8 206.7 686.7 205.5 687.1Z M225.0 671.6 225.5 673.0 224.7 674.4 224.0 673.9Z M215.8 702.2 214.7 702.4 214.6 701.9 215.8 701.6Z M219.5 696.4 221.6 695.3 222.8 696.5 221.1 697.5Z M198.2 704.7 199.8 705.7 199.0 707.0 197.6 707.6 197.2 705.6Z M185.6 717.6 185.6 718.3 185.1 718.6 184.5 718.3 184.4 717.5 185.0 717.3Z M190.3 712.2 190.8 712.4 191.2 712.6 191.5 713.2 191.0 713.6 190.2 713.5 189.8 712.7Z M202.5 702.9 204.0 702.1 205.1 702.8 205.4 704.6 203.3 704.7 201.7 704.4Z M200.0 714.9 199.1 715.6 198.6 714.8 199.6 713.6 200.6 713.4Z M205.3 695.2 206.8 695.7 208.0 697.6 206.0 698.9 204.5 698.0 203.7 696.3Z M196.3 717.8 195.4 718.2 194.2 718.1 193.9 717.4 194.8 716.8 195.8 717.2Z M200.5 706.8 201.4 708.4 199.7 708.4 198.7 707.5 199.3 706.3Z M219.9 693.8 220.5 692.3 221.4 692.4 221.3 693.4 220.5 694.3Z M207.0 720.2 205.9 720.8 204.7 720.4 204.6 719.5 205.4 718.7 207.3 718.0 207.2 719.5Z M199.7 720.7 200.6 720.7 201.3 721.3 200.4 721.4 199.4 721.5 198.7 720.8Z M218.7 702.9 219.9 704.0 217.5 704.0 216.8 702.7Z M188.0 718.9 186.4 718.7 184.8 717.3 184.8 715.3 186.6 715.5 187.6 717.2Z M218.0 695.7 219.4 695.4 219.5 697.1 219.1 698.6 217.6 697.4Z M212.9 697.4 213.6 698.3 213.5 699.4 212.7 699.6 212.0 698.6Z M205.2 711.8 205.5 710.4 207.2 710.8 207.2 712.3Z M206.0 695.6 204.3 696.7 202.6 696.9 202.4 695.3 204.2 694.5Z M212.4 696.1 209.6 698.1 208.3 697.4 210.3 695.4Z M214.5 697.0 215.5 697.3 215.6 698.0 215.1 698.3 214.5 698.5 213.6 698.1 213.6 697.4Z M194.7 725.4 194.2 726.1 192.8 725.6 193.8 724.6Z M225.3 688.9 225.7 690.4 224.1 691.6 222.7 690.6 222.7 689.4 223.8 688.3Z M200.7 728.8 200.9 729.4 200.3 729.8 199.8 729.2 199.6 728.8 199.9 728.3 200.4 728.0Z M219.4 702.9 216.4 703.4 218.3 701.5 220.4 701.7Z M207.8 697.2 206.2 698.3 205.1 696.5 206.9 695.4Z M222.0 674.2 223.3 674.1 224.5 675.5 223.0 677.0 221.7 675.5Z M189.4 725.6 187.1 724.6 188.6 722.8 190.5 723.6 191.8 725.1Z M201.2 712.7 200.3 712.6 200.3 711.9 201.2 711.1 201.9 711.6 201.9 712.2Z M211.0 678.2 211.4 677.5 212.2 677.6 213.4 677.9 212.7 679.0 211.8 679.5 211.2 679.0Z M193.5 718.2 193.3 719.2 191.2 719.8 191.7 718.1Z M206.0 706.7 206.1 706.2 206.6 706.2 207.1 706.6 207.2 707.4 206.6 707.7 206.1 707.2Z M215.3 708.8 214.2 708.7 213.9 707.6 214.4 707.0 215.3 707.2 215.5 708.1Z M204.5 717.0 204.6 715.5 204.7 713.6 206.9 713.3 207.9 715.1 207.1 716.6 206.0 718.0Z M212.3 705.0 211.7 704.5 211.9 703.5 213.1 703.5 213.0 704.6Z M199.9 724.5 198.6 724.9 197.7 723.4 198.5 722.4 199.3 722.1 200.2 722.8 200.3 723.8Z M215.0 694.9 216.0 696.0 215.4 697.0 214.0 696.4Z M205.0 704.5 203.8 705.6 202.2 705.3 203.8 703.3 205.5 702.8Z M219.1 695.1 219.7 694.6 220.3 695.1 220.6 695.8 220.2 696.7 219.2 696.7 218.6 695.8Z M211.0 711.4 211.2 714.0 209.6 714.8 208.5 712.4 209.4 711.0Z M224.5 687.8 225.0 688.0 225.1 688.7 225.1 689.6 224.4 689.3 223.9 689.0 223.7 688.1Z M209.3 687.3 212.0 686.6 213.5 688.1 210.0 689.2Z M192.7 725.1 193.8 724.8 194.7 725.2 194.0 726.1 193.1 726.0Z M200.0 719.5 199.6 718.8 199.5 718.2 200.4 718.1 201.2 718.7 201.5 719.4 200.9 719.7Z M187.2 718.1 187.1 717.0 188.1 716.4 188.7 716.3 188.6 717.2 188.1 718.3 187.5 718.5Z M198.8 722.1 197.3 719.3 198.5 718.8 200.2 721.2Z M205.9 700.0 206.3 698.4 206.6 696.5 208.2 697.1 208.6 698.3 208.7 699.6 207.5 700.9Z M197.5 730.7 196.9 730.3 196.8 729.5 197.6 729.6 198.5 729.4 198.4 730.2 198.4 730.9Z M224.3 676.0 223.7 675.6 223.9 675.2 224.9 674.6 225.5 675.1 225.7 675.7Z M204.5 697.4 205.5 697.4 206.6 697.6 206.8 699.0 205.6 699.3 204.7 699.5 203.9 698.6Z M191.1 722.5 190.8 723.4 189.7 723.2 189.3 722.3 190.3 721.9Z M212.4 698.8 213.7 697.7 214.9 698.5 215.0 699.9 213.5 700.4Z M212.4 691.0 213.6 690.1 214.1 691.3 213.9 692.5 212.6 692.5Z M222.0 673.8 221.9 675.9 219.1 676.4 219.7 673.6Z M195.3 724.4 196.1 724.5 196.4 725.5 196.1 726.0 195.4 725.8Z M189.3 715.9 191.4 715.5 191.1 717.4 190.1 718.8 188.1 717.7Z M201.5 733.1 202.3 732.9 202.9 735.1 202.0 736.0 201.3 735.0Z M230.9 748.0 231.4 748.9 230.1 748.6 229.1 748.5 228.9 747.8 229.2 747.1 230.3 747.4Z M225.7 741.2 227.5 741.4 228.2 742.1 227.7 742.9 226.0 742.2Z M209.3 738.4 209.5 736.7 210.9 736.1 211.5 737.9 210.5 739.4Z M211.1 738.6 210.4 737.6 211.4 736.5 212.0 737.7Z M208.3 727.6 208.1 728.4 207.5 729.0 206.5 728.5 206.9 727.6 207.5 726.9Z M217.7 739.6 216.8 740.6 216.4 740.3 216.2 739.5 217.1 738.5 217.5 738.8Z M211.1 738.1 210.0 737.6 209.4 736.6 210.2 735.9 211.1 736.1 212.2 736.3 211.7 737.2Z M218.3 741.6 218.8 740.5 219.5 740.9 219.4 742.1Z M200.3 729.7 201.3 730.2 200.6 730.8 199.3 730.5Z M228.7 747.0 228.9 746.3 229.2 746.0 229.8 746.0 230.2 746.6 229.5 746.9Z M205.5 739.2 205.4 737.3 206.1 736.2 207.3 737.4 207.8 739.0 206.9 739.8Z M201.3 733.3 200.4 732.3 201.3 731.2 202.3 730.5 202.7 731.7 202.7 733.1Z M207.4 734.0 208.3 733.5 209.3 733.2 209.9 734.2 209.3 735.2 208.5 735.8 207.5 735.3Z M233.7 753.7 235.9 753.2 236.1 755.0 233.8 754.7Z M207.0 728.2 207.4 727.2 208.6 727.1 209.0 728.8 208.1 729.1Z M209.2 739.4 208.1 738.4 208.8 738.0 209.5 738.8Z M203.1 737.1 203.7 735.9 204.5 736.1 204.7 737.2 203.6 737.7Z M228.8 749.6 229.6 750.1 230.0 750.9 229.1 751.0 228.1 750.7 228.3 750.1Z M230.4 751.1 231.4 751.4 230.2 752.3 229.5 752.0Z M221.3 746.1 220.8 745.2 221.6 743.5 222.5 742.3 222.8 743.7 222.2 745.3Z M206.1 735.1 205.1 735.1 204.4 734.2 204.7 732.9 205.8 733.0 206.5 734.0Z M219.3 740.4 220.7 740.7 220.5 742.0 219.3 742.3 218.3 741.7Z M222.3 740.8 222.9 739.9 223.6 740.0 224.2 740.1 224.2 741.1 223.5 741.6 222.9 741.4Z M210.2 736.1 210.9 735.9 211.8 736.0 211.3 736.7 210.7 736.9Z M205.8 731.2 205.7 732.2 204.1 732.6 203.4 731.5 203.3 730.5 204.8 730.6Z M204.2 728.2 205.1 727.5 206.3 727.5 206.3 729.2 205.1 729.8 203.9 729.9Z M235.6 751.4 237.5 752.7 237.1 754.0 235.9 754.0 235.0 752.7Z M228.5 743.8 228.8 744.9 228.7 745.6 228.1 745.5 227.9 744.3Z M226.4 738.9 226.8 740.0 226.8 740.6 226.5 741.6 225.2 741.5 225.0 740.6 225.1 739.6Z M206.1 728.0 206.0 729.1 205.2 729.5 205.4 728.2Z M225.1 748.5 224.6 747.7 225.6 747.0 226.7 746.7 227.6 747.2 226.8 748.0 226.2 748.5Z M209.1 733.2 208.5 733.4 207.7 733.2 207.4 732.6 207.8 732.3 208.4 732.3 208.8 732.7Z M225.8 746.1 225.5 744.9 226.6 744.1 227.5 743.9 228.6 744.2 228.6 745.5 227.2 746.4Z M203.1 732.5 202.5 732.8 201.7 732.6 201.4 731.9 201.1 731.1 201.9 731.4 202.4 731.8Z M213.8 739.6 214.9 739.6 215.5 741.0 214.2 740.7Z M212.6 734.4 213.0 736.4 211.1 736.4 209.8 734.6 210.7 733.1 212.0 733.3Z M224.9 739.6 224.5 740.1 224.1 739.5 224.5 738.8Z M207.3 730.9 207.9 731.3 207.1 731.7 206.3 731.4 206.5 730.8Z M214.7 740.9 213.3 742.0 212.3 740.6 212.8 738.8 214.6 739.2Z M228.3 743.8 226.4 743.5 226.3 741.5 228.5 742.4Z M213.0 736.0 214.0 735.1 215.7 735.6 215.7 736.8 215.3 737.5 214.3 737.6 213.2 737.1Z M209.8 739.7 210.1 739.0 210.4 738.2 211.7 738.8 211.7 739.8 211.4 740.3 210.6 740.7Z M228.6 741.6 229.7 743.5 227.8 743.9 226.9 742.4Z M216.9 737.8 217.9 737.3 218.5 738.2 217.8 738.8Z M216.2 732.5 217.0 732.5 217.5 733.9 217.4 734.9 217.0 735.9 216.6 734.2Z M224.5 744.0 224.8 744.7 224.4 745.3 223.9 745.7 223.4 745.3 223.4 744.7 223.8 744.1Z M208.8 729.7 207.9 729.9 207.8 728.2 208.8 728.5Z M218.2 741.4 218.4 741.2 218.7 741.1 219.0 741.4 219.3 742.0 219.0 742.4 218.6 741.8Z M220.4 739.4 220.7 740.3 220.7 741.3 220.1 741.1 219.8 740.5 219.9 739.8Z M151.2 726.0 149.2 725.3 149.8 724.3 151.5 723.9 153.2 724.6 152.7 725.6Z M166.1 755.7 166.1 754.4 168.0 753.8 167.8 755.0Z M156.7 729.5 157.7 729.7 158.5 730.2 157.4 730.8 156.4 730.4Z M156.5 747.3 157.5 748.2 158.0 749.5 157.1 749.8 156.1 749.1 155.1 747.9 155.7 747.3Z M183.7 742.7 183.5 741.1 184.9 740.2 185.9 741.2 185.2 742.3Z M175.7 739.0 176.4 738.3 176.9 739.0 177.5 739.7 177.1 741.0 176.3 741.6 176.0 740.3Z M160.6 752.7 160.3 753.2 159.5 753.0 159.4 752.4 159.7 752.1Z M157.7 745.7 156.9 746.3 156.5 745.4 157.2 745.1Z M150.2 757.6 150.0 756.4 151.0 755.9 151.3 756.9Z M176.5 743.6 175.9 743.7 175.3 743.5 175.6 742.8 176.1 742.7 176.6 742.9Z M179.1 736.1 178.3 737.0 176.9 736.2 176.4 734.6 177.8 734.7Z M161.9 727.2 161.0 727.4 160.5 726.9 160.3 726.4 160.9 726.1 161.6 726.1 162.1 726.5Z M188.0 747.4 187.7 746.8 187.8 746.1 188.5 746.3 189.0 746.6 189.0 747.1 188.8 747.8Z M181.4 736.5 182.6 736.9 183.2 737.7 182.9 738.8 181.8 738.7 180.9 738.5 180.6 737.5Z M158.8 726.0 157.6 727.1 155.7 726.4 156.3 724.6 157.5 723.2 158.8 724.5Z M154.1 729.7 152.6 730.6 153.4 728.1 154.3 728.2Z M166.7 747.0 166.3 746.5 167.2 746.6 168.1 747.1 167.9 747.5 167.1 747.3Z M180.5 750.2 179.9 749.1 180.2 747.6 181.8 747.5 183.0 748.5 182.7 749.9 181.7 750.7Z M155.5 742.1 157.6 741.8 157.0 743.6 155.4 743.6Z M152.3 726.5 150.2 724.7 151.4 723.7 153.3 725.3Z M152.9 741.5 152.7 740.0 154.2 739.4 155.6 739.5 155.4 740.9 154.8 742.7 153.1 742.9Z M178.8 751.9 178.8 753.2 177.7 753.6 177.5 752.5Z M166.2 747.5 165.7 748.8 163.8 749.4 164.0 748.2 165.3 747.1Z M157.9 726.3 156.7 725.8 156.2 724.8 157.7 724.2 158.2 725.2Z M185.7 743.4 185.1 742.7 185.1 741.7 186.2 741.5 186.5 742.9Z M166.6 754.1 165.4 754.6 165.2 753.2 166.4 753.0Z M152.1 747.7 152.7 747.9 153.3 748.1 153.3 748.9 152.4 749.2 152.0 748.8 151.8 748.3Z M150.3 752.8 149.3 752.7 149.4 751.1 150.5 750.9 151.3 751.4Z M163.8 743.4 165.1 743.7 165.5 745.3 164.0 745.8 162.8 746.0 162.6 744.7 163.0 743.9Z M153.5 746.4 152.9 744.9 153.4 743.7 154.7 744.9 154.9 746.1 154.7 747.4Z M161.3 728.5 160.3 727.2 161.4 726.4 162.6 725.6 163.6 727.1 163.3 728.5 162.5 729.7Z M166.5 754.6 164.3 754.4 163.2 752.8 165.0 751.6 166.7 751.3 167.5 752.7Z M167.5 735.5 167.5 735.9 166.8 736.4 166.3 736.1 166.3 735.8 166.9 735.6Z M193.5 747.2 192.4 748.3 190.9 748.2 192.3 747.0Z M164.6 754.1 164.8 754.6 164.4 754.8 163.5 754.5 163.7 753.8Z M151.8 754.6 151.7 755.5 149.9 755.2 149.8 754.2Z M153.7 744.3 154.9 743.3 155.5 743.7 155.4 744.5 154.4 745.2 153.4 745.8 153.0 745.4Z M172.3 736.3 171.8 734.9 173.7 735.4 175.2 736.4 173.5 737.3Z M163.5 749.6 164.6 749.8 164.0 750.2 163.0 750.1Z M170.6 751.6 171.9 751.5 172.6 752.4 171.4 753.2Z M183.1 753.2 182.6 753.5 181.9 752.9 181.7 752.3 182.2 752.0 182.8 752.0 183.2 752.7Z M187.6 744.8 188.2 745.9 187.8 746.8 187.0 746.0 186.6 744.5Z M188.4 740.7 189.2 741.1 190.0 741.9 189.5 742.4 188.6 742.6 187.8 741.5Z M159.7 735.6 159.3 736.1 158.5 736.3 158.4 735.4 159.3 734.9Z M158.9 726.4 157.6 727.2 157.1 726.2 158.3 725.0 159.1 725.0Z M193.7 745.3 193.4 745.9 193.0 745.8 192.9 745.5 193.3 744.9 193.7 744.9Z M175.4 753.9 175.2 754.9 174.4 755.1 174.1 754.2 174.6 753.7Z M171.1 741.3 172.2 741.0 172.8 742.1 172.1 742.8 171.1 742.8Z M174.1 750.4 174.1 749.4 175.1 748.8 175.8 748.9 176.5 749.5 175.8 750.7 174.6 751.2Z M171.3 731.3 171.8 731.9 171.4 732.6 170.6 732.3 170.0 732.0 170.0 731.3 170.7 731.0Z M182.9 739.3 184.0 740.0 184.5 741.0 183.6 740.8 182.9 740.2Z M167.8 755.3 169.0 754.6 169.2 755.7 168.2 756.2 167.2 756.2Z M168.9 739.2 169.3 739.9 168.9 740.5 168.4 740.5 167.9 740.1 168.2 739.6Z M155.1 732.0 156.3 732.7 156.8 734.1 155.2 734.4 154.6 733.3Z M164.4 744.3 165.3 745.0 164.7 745.9 163.5 746.2 162.4 745.2 163.3 744.4Z M171.6 732.3 171.7 731.2 173.6 730.6 173.7 732.0 172.1 733.1Z M151.0 740.5 151.8 740.3 152.5 740.0 153.6 740.9 153.4 741.6 152.6 741.7 151.9 741.2Z M176.7 755.2 176.3 755.0 176.7 754.1 177.0 754.4Z M168.4 740.4 167.8 739.4 168.6 738.8 169.3 739.0 169.2 740.1Z M166.0 757.3 165.9 756.2 166.4 755.3 167.7 754.5 168.6 755.3 167.9 756.3 167.2 756.9Z M158.8 727.8 158.1 728.4 157.1 727.6 156.7 726.7 157.7 726.7 158.6 727.0Z M160.5 730.7 161.5 730.2 162.4 730.6 162.6 731.7 162.3 732.9 161.1 732.8 160.6 731.8Z M172.6 754.2 172.3 752.7 173.5 751.5 174.5 752.3 175.1 753.3 174.5 754.8 173.2 755.2Z M166.2 750.8 165.4 749.8 166.3 748.7 167.3 749.6 167.3 750.5Z M164.4 753.6 164.9 754.4 164.3 754.8 163.4 755.0 163.4 753.8 163.8 753.0Z M151.8 743.1 151.8 742.5 153.3 742.5 153.2 743.1 152.5 743.4Z M172.1 751.7 173.2 752.8 173.8 753.9 173.5 755.3 171.8 754.8 170.5 753.6 171.0 752.3Z M162.9 738.3 163.7 739.1 162.9 740.5 161.4 740.7 161.7 739.5Z M171.6 735.0 172.2 735.6 172.2 736.5 171.8 736.6 171.3 735.7Z M178.9 750.4 178.7 749.8 179.2 748.9 179.6 749.2 179.5 750.1Z M154.6 724.5 153.4 724.4 153.2 723.3 153.3 722.1 154.4 722.5 155.0 722.9 155.3 723.7Z M152.3 749.8 153.3 749.7 153.0 750.3 152.1 750.9 151.1 750.8 151.4 750.3Z M151.2 735.0 149.4 735.2 149.5 733.4 150.5 732.6 152.2 733.4Z M159.6 734.3 158.5 733.9 158.7 733.1 159.6 732.7 160.7 732.7 160.6 733.6Z M157.8 741.6 157.9 741.2 158.8 741.1 158.8 741.7Z M168.3 734.3 168.9 733.2 170.7 733.5 170.6 734.8 169.7 735.9 168.5 735.1Z M162.1 743.3 162.3 741.2 163.7 740.3 164.6 741.6 164.1 743.0Z M170.1 734.6 171.1 735.3 171.0 736.6 170.5 738.1 169.7 737.2 169.0 736.0Z M155.0 747.6 156.5 747.7 157.4 749.0 156.3 749.8 154.7 750.2 154.0 748.6Z M151.8 755.3 151.8 754.6 152.3 754.6 152.6 755.4 152.2 756.0Z M175.4 734.0 176.3 733.2 177.1 733.1 176.5 734.2 175.5 734.7Z M151.0 736.6 151.2 737.5 150.5 738.0 149.6 738.1 149.0 737.3 149.6 736.7 150.2 736.3Z M172.6 752.8 172.5 752.2 173.5 751.5 174.3 751.5 174.1 752.2 173.3 752.7Z M154.1 751.3 153.5 751.7 152.7 751.9 152.1 751.6 152.2 751.1 152.8 750.6 153.6 750.9Z M168.8 751.3 168.0 752.4 167.4 751.2 167.1 749.6 167.9 749.3 168.7 749.4Z M164.3 758.7 162.5 758.0 162.5 756.3 163.9 755.6 164.8 756.8Z M168.2 754.4 167.9 753.8 168.0 753.3 168.4 753.4 168.7 753.7 169.0 754.2 168.9 754.7Z M171.3 745.7 169.9 747.4 169.9 745.6 171.3 744.2Z M150.4 753.4 151.0 752.9 151.8 753.2 152.0 753.8 150.8 754.0Z M178.8 743.5 178.8 742.2 179.3 742.0 179.3 742.9Z M164.8 726.1 163.4 727.7 161.6 726.3 163.1 724.9Z M159.5 751.9 160.4 752.2 161.1 753.2 161.7 754.4 160.8 754.5 159.8 753.3 158.7 752.0Z M178.6 744.5 178.0 745.1 177.0 744.6 177.1 744.0Z M157.2 730.1 157.1 728.7 158.8 728.6 158.4 730.1Z M181.9 747.3 182.8 747.5 182.3 749.3 181.6 750.6 180.6 750.8 180.4 749.0 181.0 747.1Z M158.7 743.8 157.4 743.8 156.2 742.6 157.3 742.1 158.8 743.1Z M164.3 737.4 165.1 737.0 165.7 736.9 166.3 737.2 166.3 737.8 165.1 738.0Z M155.7 725.9 154.7 726.7 153.7 727.6 152.5 726.7 152.6 725.2 153.9 725.0 155.1 724.7Z M174.7 741.1 173.8 741.7 174.0 740.8 174.5 740.3 175.0 740.5Z M172.8 743.8 172.9 744.9 171.9 745.6 170.2 744.7 171.2 744.0Z M157.4 738.8 157.2 737.5 157.4 736.1 158.3 735.6 159.4 735.1 159.2 736.7 158.5 738.0Z M170.7 748.5 169.5 748.3 168.8 747.3 170.0 746.0 170.9 746.7Z M152.7 732.9 153.4 731.7 154.1 730.6 155.7 730.6 156.3 732.0 155.2 732.9 154.0 733.7Z M168.3 737.5 166.4 738.0 166.5 737.0 168.3 736.4 169.9 736.7Z M157.6 757.6 156.7 757.9 155.5 757.9 154.6 756.7 155.7 756.2 156.5 756.0 157.8 756.5Z M184.1 752.7 183.9 753.9 182.5 754.5 181.3 753.7 180.8 752.3 182.3 751.9 183.5 751.6Z M157.5 743.2 157.4 743.9 156.7 744.1 156.9 743.2Z M163.8 744.5 163.9 742.6 164.8 742.1 165.7 742.4 164.9 743.8Z M152.2 748.5 152.4 749.9 151.3 749.9 150.8 748.9 151.2 747.5Z M166.4 747.1 165.8 747.9 165.3 748.8 164.7 748.0 165.1 746.8 165.5 745.3 166.1 746.1Z M121.7 749.7 122.7 749.8 123.3 750.0 123.9 750.4 122.9 750.6 121.8 750.6 121.5 750.2Z M137.2 743.0 138.2 743.7 138.1 744.6 137.3 744.9 136.1 745.4 135.7 744.3 135.9 743.3Z M145.9 753.6 144.7 753.6 144.6 752.8 144.6 751.8 145.9 751.7 147.3 752.0 147.4 753.3Z M143.9 747.3 145.2 747.0 145.6 748.4 145.6 749.3 144.5 749.4 143.3 748.2Z M139.7 747.3 138.3 747.5 138.8 746.6 140.4 746.0Z M142.0 748.1 142.2 747.5 143.0 747.7 143.6 748.2 143.4 748.7 142.5 748.8Z M124.5 745.8 123.7 745.9 123.4 745.2 124.3 745.2Z M116.0 755.8 115.3 756.0 114.9 754.8 115.4 754.0 116.1 754.6Z M129.0 752.3 129.3 751.9 130.2 752.5 130.1 753.3 129.7 753.5 129.0 753.0Z M119.6 751.5 118.8 752.0 118.4 752.0 118.0 751.5 118.7 750.5 119.3 750.9Z M129.8 750.5 130.7 749.8 131.1 750.6 131.3 751.5 130.2 752.1 129.4 751.3Z M118.0 749.8 118.3 748.8 118.8 748.4 119.3 749.3 119.5 750.8 118.7 750.7Z M125.6 753.6 124.9 752.3 124.3 750.9 125.7 750.3 127.4 750.4 127.5 751.8 127.4 753.2Z M116.2 751.7 116.0 750.7 116.7 750.2 117.7 750.4 118.7 751.4 117.7 752.0 117.0 752.0Z M148.9 754.6 149.5 755.8 148.5 757.2 146.8 756.9 145.6 755.4 146.8 753.9 148.3 753.0Z M144.6 755.8 142.9 755.2 145.5 753.8 147.1 754.6Z M125.5 752.5 124.8 753.5 123.8 752.7 123.3 751.6 124.4 751.2 125.2 751.1 125.6 751.8Z M123.0 747.2 122.1 747.1 122.0 746.1 122.9 744.9 123.5 745.2Z M129.9 748.5 130.3 750.0 128.5 749.7 128.0 748.0Z M132.2 748.8 133.0 748.9 132.9 749.9 132.2 749.7Z M134.1 751.6 134.5 753.1 133.9 753.8 133.7 752.5Z M136.6 752.3 136.9 752.9 137.1 753.4 136.8 754.2 136.3 754.6 135.9 753.9 136.2 753.0Z M147.4 754.2 146.6 754.8 145.9 754.6 145.7 753.9 145.8 753.3 146.5 752.9 147.3 753.3Z M140.8 749.6 140.0 749.5 139.5 749.2 138.7 748.8 139.4 748.8 140.0 748.6 140.7 749.1Z M143.8 757.7 143.4 756.1 144.5 754.8 145.5 756.7Z M135.3 754.2 134.4 755.0 133.6 755.1 133.6 754.0 134.7 753.6Z M122.2 754.0 123.7 754.9 123.1 756.6 122.0 757.3 120.9 756.0Z M119.0 748.4 120.1 748.7 120.9 749.1 121.2 750.2 120.1 750.8 119.1 750.3 118.4 749.3Z M139.4 755.3 138.6 755.7 137.7 755.5 137.3 754.5 137.6 753.8 138.7 754.0Z M130.1 751.5 130.2 753.0 128.7 754.0 127.3 752.8 128.6 751.4Z M140.2 757.1 139.6 756.6 140.1 755.7 141.5 755.4 141.5 756.9Z M118.2 752.1 118.0 751.1 119.9 750.3 119.6 751.5Z M116.9 754.1 117.5 753.7 118.1 754.3 117.8 755.0 117.2 755.5 116.4 754.8Z M131.5 744.8 131.1 744.0 131.1 743.1 131.8 742.8 132.4 743.7 132.1 744.6Z M130.0 753.4 128.9 752.4 129.0 750.9 130.4 750.6 131.0 751.6 131.1 752.7Z M139.3 753.1 139.8 751.4 141.0 752.6 141.1 753.8 139.6 754.6Z M136.0 749.5 136.4 750.1 136.4 751.2 135.3 751.7 134.5 751.0 134.7 750.1 135.2 749.4Z M132.6 747.1 131.1 747.0 130.0 746.6 129.7 744.9 131.3 745.0 132.6 745.5Z M137.8 751.5 137.6 748.8 139.2 749.5 139.3 751.9Z M118.8 747.1 119.5 747.8 120.1 748.6 119.3 748.7 118.4 747.7Z M128.9 751.5 127.8 751.5 126.8 750.9 126.5 749.7 127.5 749.6 128.4 749.1 129.0 750.3Z M131.9 750.7 130.5 750.8 131.2 749.7 132.1 749.2 132.8 749.5Z M119.4 749.7 119.1 748.9 119.6 748.4 120.0 749.1Z M126.9 751.9 127.0 753.2 125.8 752.9 125.9 751.9Z M141.3 748.6 142.0 749.3 141.2 749.8 140.3 749.3Z M91.8 747.2 92.6 747.0 92.3 748.2 91.5 748.2Z M97.0 753.4 98.4 752.7 99.4 753.0 98.6 754.1 97.5 754.7 97.1 754.3Z M89.8 755.6 90.2 754.6 91.4 754.9 91.8 755.8 90.3 756.6Z M82.0 749.8 82.5 750.0 82.6 750.7 81.7 750.3Z M87.0 751.0 88.1 751.8 88.5 753.0 87.0 753.0 85.9 752.7 85.7 751.6Z M95.5 753.0 94.0 753.8 93.8 751.5 95.0 751.6Z M91.9 745.2 91.7 745.7 91.3 745.9 90.6 745.2 90.7 744.5 91.3 744.6Z M99.8 751.2 99.7 750.3 100.2 750.0 100.7 750.3 100.6 751.1Z M105.0 754.1 104.7 754.6 103.9 754.5 103.7 753.8 104.7 753.3Z M82.2 749.0 82.9 749.8 82.3 751.7 81.6 750.9Z M86.9 751.6 86.6 750.8 87.1 750.3 87.6 749.9 87.5 751.1 87.2 751.6Z M84.0 749.5 84.0 748.8 84.2 747.9 85.0 747.8 85.4 748.4 85.2 749.3 84.6 749.7Z M94.4 752.1 93.6 752.3 93.0 751.6 92.5 750.7 93.9 750.8 94.9 751.7Z M92.0 748.7 91.4 749.1 91.3 748.1 91.7 747.2 92.1 746.5 92.6 746.4 92.4 747.6Z M82.1 748.4 81.4 747.8 80.5 747.4 81.0 746.6 81.7 746.0 82.7 746.7 82.8 747.8Z M82.9 747.6 81.9 747.3 82.0 746.6 83.1 747.0 83.6 747.5Z M794.8 576.6 794.6 575.5 795.2 575.2 795.5 575.6 795.2 576.6Z M802.2 646.0 801.4 645.5 802.1 644.5 803.1 645.2Z M803.1 650.0 803.5 650.4 803.9 651.0 803.2 651.2 802.6 650.6 802.6 650.2Z M803.1 620.1 804.3 619.8 805.3 621.4 804.0 622.0 803.1 621.3Z M800.6 592.9 800.2 594.0 799.5 594.1 799.4 593.4 799.8 592.6 800.4 591.9 801.0 592.0Z M801.0 584.9 800.2 585.7 799.5 585.2 800.3 584.3Z M795.3 630.0 796.4 629.8 796.7 630.9 796.2 631.9 795.3 631.5 795.0 630.8Z M797.4 579.3 796.6 578.8 797.7 578.7 798.6 579.1 798.2 579.4Z M804.1 607.6 804.2 606.2 805.3 606.0 805.3 607.2Z M796.0 570.4 795.0 569.8 795.0 568.9 796.3 568.8 797.5 569.0 797.2 569.9Z M803.3 647.1 803.0 645.5 803.8 644.9 804.1 646.1Z M802.9 596.7 803.2 596.1 803.4 595.7 803.9 595.7 804.5 596.0 804.1 596.6 803.5 597.0Z M794.7 595.3 793.8 595.3 793.0 594.8 793.5 593.4 794.4 593.7 795.4 594.0Z M804.6 630.6 803.9 630.5 804.1 630.0 804.8 629.7 805.0 630.0Z M798.0 643.0 797.0 643.5 796.0 642.8 796.7 641.9 797.8 641.9Z M795.6 630.3 795.2 630.8 794.8 631.2 794.1 630.8 793.5 630.2 794.3 630.1 794.8 630.1Z M803.7 653.3 803.3 654.0 803.1 653.3 803.2 652.5 803.5 652.0 804.0 652.3Z M799.3 650.0 800.3 649.5 801.0 650.4 801.3 651.7 800.4 652.1 799.7 651.6 799.1 651.0Z M797.0 579.8 797.8 580.9 797.2 582.1 796.7 582.8 796.0 582.3 796.2 580.9Z M800.9 612.3 801.0 611.8 801.6 612.4 801.6 612.8 801.1 613.0Z M799.8 654.7 798.7 654.5 798.2 653.3 798.4 651.9 799.6 651.5 800.0 653.3Z M796.4 625.2 796.3 623.4 798.0 622.5 798.5 624.1 798.3 625.5Z M803.3 598.2 802.5 597.6 803.4 597.1 804.8 597.4 804.8 598.0Z M794.6 620.9 795.3 622.6 793.5 623.3 792.9 621.6Z M803.3 596.0 802.7 596.6 801.9 596.1 801.9 594.5 802.5 593.5 803.2 593.7 803.9 594.9Z M797.8 658.8 797.8 658.4 798.5 658.6 799.1 659.1 799.7 659.7 799.0 659.7 798.4 659.3Z M805.6 655.5 804.4 655.5 803.7 654.4 804.4 653.6 805.4 652.8 805.6 654.2Z M796.4 622.5 796.1 621.7 797.3 621.2 798.0 621.1 798.2 622.0 797.0 622.9Z M800.7 627.1 799.7 627.4 799.0 626.7 799.6 625.8 800.6 626.1Z M796.8 579.8 798.1 579.7 799.4 580.2 799.8 581.1 799.4 581.8 798.4 581.5 797.7 580.9Z M806.3 593.3 805.5 593.8 804.2 593.1 803.5 592.3 804.1 591.9 805.5 592.3Z M793.9 644.5 794.5 643.6 795.3 643.7 795.2 645.5 794.9 647.2 793.9 647.3 793.6 645.7Z M801.8 645.5 801.2 645.2 801.0 644.8 801.5 644.3 802.0 644.4 802.6 644.8Z M793.6 596.8 793.6 597.5 792.3 597.6 791.8 597.0 791.5 596.4 792.6 596.5Z M800.3 580.3 799.0 579.2 799.3 578.2 800.2 579.2Z M801.7 586.6 801.3 587.0 800.9 587.0 800.3 586.2 800.7 585.5 801.3 585.7Z M795.2 631.7 795.5 630.4 796.2 631.3 796.9 632.2 796.6 633.8 795.8 634.3 795.3 633.0Z M802.4 587.2 801.4 586.3 801.2 585.3 802.1 586.1Z M805.5 582.2 805.0 582.5 804.3 582.0 804.5 581.6 805.0 581.6Z M794.6 576.2 793.3 574.9 794.8 573.4 795.4 575.0Z M803.9 583.8 802.2 584.5 801.9 582.4 803.9 581.8Z M800.8 646.1 803.3 646.1 804.2 647.2 801.9 647.6 799.8 647.5Z M802.6 630.6 800.8 631.6 800.0 629.7 801.4 628.7Z M797.5 570.7 796.4 569.4 796.2 568.1 797.8 568.9 798.5 570.3Z M801.4 657.0 800.8 657.0 800.3 656.5 801.0 656.2 801.7 656.2 802.3 656.8Z M803.8 643.8 803.5 642.2 804.4 641.8 805.0 642.7 805.0 644.5Z M801.1 605.9 801.7 605.8 802.0 606.2 802.2 606.6 801.4 606.4 800.9 606.1Z M797.1 589.5 795.8 588.1 796.8 587.2 798.3 588.4Z M803.2 646.2 803.9 645.2 804.8 645.0 804.7 646.5 804.3 647.5 803.7 647.1Z M805.1 622.6 803.8 623.8 801.7 624.6 802.1 623.1 803.8 622.5Z M802.1 580.6 802.5 579.5 803.6 580.0 803.3 581.2Z M804.7 570.8 803.8 571.2 803.2 570.4 803.0 569.7 804.1 569.5 805.0 570.1Z M795.6 655.5 794.1 654.4 794.0 653.2 795.3 653.8Z M801.0 626.1 801.0 627.2 800.2 627.1 800.3 625.6Z M796.9 592.0 796.8 593.2 795.8 593.3 795.7 591.7Z M800.9 621.5 802.6 622.1 803.5 623.6 802.3 624.5 800.7 623.2Z M800.5 621.1 800.2 621.4 799.4 621.2 798.9 620.7 798.8 620.3 799.4 620.3 800.1 620.5Z M794.5 574.5 794.5 575.5 794.4 576.2 794.0 575.7 793.5 575.1 793.9 574.3Z M802.1 584.0 801.2 584.7 800.0 583.4 800.0 582.5 800.6 581.5 801.6 582.9Z M805.8 609.0 804.7 608.3 804.0 607.1 804.6 606.1 805.8 607.5Z M797.9 655.4 798.4 655.4 798.9 656.5 798.3 656.5Z M798.1 635.7 799.6 635.8 798.9 637.0 798.5 638.3 796.9 638.2 796.0 637.2 796.7 635.9Z M802.4 607.9 801.3 608.7 800.4 608.1 800.1 606.7 802.1 606.7Z M800.5 588.4 801.2 588.3 801.6 588.7 801.3 589.2 800.6 589.6 799.9 589.3 800.1 588.7Z M796.8 652.0 795.5 650.6 795.8 649.4 797.5 649.8 798.0 651.6Z M802.3 657.5 803.8 657.6 803.9 658.9 803.0 660.3 801.8 660.3 800.8 659.9 801.4 658.8Z M800.6 583.3 800.2 582.9 800.0 582.6 800.2 582.5 800.6 582.9 801.0 583.3Z M800.7 570.1 800.2 569.5 800.4 569.1 801.0 569.1 801.5 569.7Z M799.2 598.6 799.0 599.9 798.1 600.5 797.5 599.6 797.6 598.1Z M798.0 635.1 796.5 635.4 794.9 635.4 794.5 633.9 795.4 632.9 796.8 633.4 797.5 634.0Z M804.7 609.0 804.8 609.6 803.9 609.8 802.8 609.0 802.1 608.1 803.2 608.0 804.3 608.3Z M794.4 627.8 794.7 626.5 796.0 627.1 795.5 628.0Z M799.8 583.5 799.2 585.5 798.1 585.0 797.4 583.3 798.8 582.3Z M792.7 595.0 793.1 595.0 793.7 595.3 793.3 595.6 792.9 595.8 792.4 595.7 792.3 595.3Z M796.4 576.4 795.1 576.9 794.4 576.0 795.4 575.0 796.1 575.3Z M803.7 581.4 805.3 581.2 805.9 582.5 804.1 583.2 803.0 582.4Z M802.5 600.7 802.6 602.6 800.2 601.4 800.6 599.1Z M803.4 615.3 803.2 614.4 803.7 613.7 804.2 613.2 804.5 613.9 804.5 614.8 804.0 615.2Z M795.5 626.6 795.6 625.5 796.4 625.5 797.1 626.4 796.4 627.4Z M800.8 639.7 799.7 641.2 798.6 641.4 799.1 639.9Z M796.8 642.6 797.0 642.1 797.7 642.0 798.0 642.9 797.8 643.7 797.2 644.0 796.7 643.2Z M796.2 642.6 796.4 641.8 796.9 641.4 797.4 642.1 796.8 642.5Z M799.3 592.4 800.7 591.6 801.8 593.1 801.1 594.1Z M804.0 646.3 803.9 645.6 804.0 644.8 804.9 644.6 805.7 645.1 805.2 645.8 804.7 646.1Z M797.4 590.3 796.3 591.1 795.8 590.7 796.6 589.9Z M800.0 603.9 801.0 604.0 800.9 605.5 800.1 606.4 799.4 606.3 798.5 605.8 798.9 604.3Z M800.0 571.6 801.5 571.7 802.0 573.0 800.7 574.3 799.8 573.3Z M796.2 626.1 795.7 625.5 795.6 624.5 796.4 624.7 796.8 625.7 796.7 626.4Z M794.0 635.4 793.6 634.8 793.2 634.1 794.0 633.8 794.5 633.9 795.0 634.2 794.6 634.8Z M794.7 624.5 794.8 624.0 795.0 623.6 795.7 623.5 796.2 624.1 795.7 624.5 795.3 624.8Z M800.1 615.5 799.9 613.8 800.5 612.6 801.5 613.6 801.6 615.2Z M801.3 628.8 802.1 627.6 803.1 627.7 803.5 628.6 802.7 629.6Z M794.5 642.9 794.3 642.0 795.2 641.9 795.9 642.1 795.4 642.7Z M798.7 634.9 798.5 636.6 797.5 636.8 796.2 636.1 797.3 634.5Z M803.3 583.7 802.5 583.4 802.3 582.3 803.3 582.4 803.8 583.0Z M794.4 590.1 795.5 589.6 797.1 589.8 796.9 590.4 796.0 590.9 794.6 590.7Z M803.8 617.5 805.3 619.1 804.3 620.7 803.4 619.6Z M794.8 629.8 794.4 629.6 794.3 629.0 794.7 628.5 795.4 628.8 795.1 629.6Z M793.3 606.9 793.6 605.5 794.7 604.8 795.9 605.2 796.4 606.6 795.3 607.4 794.4 607.3Z M803.5 620.3 804.8 619.2 806.2 619.3 805.1 621.1 803.2 621.9Z M803.3 659.4 802.6 659.1 802.8 658.4 803.0 657.9 803.5 657.9 804.0 658.3 803.8 658.9Z M800.1 593.3 799.6 591.5 801.3 591.3 802.1 592.4 801.7 593.5Z M794.0 592.5 793.8 591.5 794.4 590.0 795.2 589.6 796.0 589.8 795.6 591.2 794.9 592.4Z M801.6 596.8 800.9 596.2 800.6 594.7 801.3 594.2 801.8 595.9Z M800.5 646.4 802.2 646.0 803.5 646.5 803.1 648.0 801.6 648.8Z M796.0 608.2 794.7 607.7 794.1 606.0 795.8 605.6 797.0 606.1 796.9 607.4Z M796.2 638.2 795.0 639.1 794.3 637.1 795.6 636.5Z M804.6 592.6 805.6 592.7 806.1 593.6 805.4 594.7 804.2 595.4 803.9 594.5 803.5 593.6Z M798.6 597.5 798.7 597.0 799.0 597.0 799.3 597.1 799.4 597.7 799.0 598.0 798.7 597.9Z M794.6 625.3 792.7 625.4 792.5 623.8 793.7 622.9 794.7 624.1Z M350.5 659.3 350.1 660.0 349.2 659.5 349.7 658.4Z M344.8 659.3 344.2 659.7 343.5 659.7 343.6 659.0 344.1 659.0Z M355.2 658.5 354.6 657.5 355.2 656.9 355.9 656.9 356.3 657.9Z M343.6 654.8 344.8 654.9 345.0 656.0 343.7 655.7Z M347.8 654.3 347.3 654.0 347.3 653.3 347.9 653.4Z M711.8 789.5 711.7 788.4 712.1 787.6 712.5 787.7 712.8 788.1 712.4 788.8Z M713.1 791.3 714.5 790.6 714.5 792.0 712.9 792.6Z M712.7 788.0 711.9 787.9 711.8 786.7 713.4 786.9Z M714.0 781.7 713.7 781.1 714.1 780.7 714.6 780.4 715.1 780.9 715.1 781.3 714.8 781.7Z M699.7 765.2 700.9 763.6 701.3 764.8 700.2 766.1Z M706.6 768.6 706.4 767.7 707.5 767.3 708.5 766.8 708.7 767.7 708.0 768.7 707.0 769.3Z M705.7 787.8 706.5 787.3 706.9 788.4 706.9 789.4 706.2 790.1 705.5 789.2 705.4 788.4Z M704.8 767.6 703.9 767.5 703.5 766.6 704.2 765.8 705.2 765.9 705.4 766.9Z M709.9 775.6 709.0 775.3 708.7 774.4 709.4 773.9 710.4 774.5Z M715.3 789.8 714.4 789.8 714.3 789.3 714.9 789.2 715.4 789.4Z" fill="#000" stroke="#000" stroke-width="0.6"/>
<path d="M250.1 678.6Q255.5 688 254.7 696.2T244.5 712.8T226.1 730.4" fill="none" stroke="#000" stroke-width="1.6" stroke-dasharray="6 3 2 4 4 3"/>
<path d="M226 663.5L233 662M241 663L250 662M257.5 662L270 664.2M276 664L284 663" fill="none" stroke="#000" stroke-width="1.4"/>
<path d="M14.8 719.2 20.7 716.9 27.3 717.7 32.5 719.9 38.4 721.4 39.2 723.6 35.5 725.8 32.5 729.5 29.6 730.2 25.1 726.5 20.7 724.3 16.3 722.9Z" fill="#5d4f4a" stroke="#000" stroke-width="1"/>
<path d="M523.2 712.6 525.9 712.0 532.2 712.4 531.7 714.5 529.5 716.1 526.4 715.0Z" fill="#5d4f4a" stroke="#000" stroke-width="1"/>
<path d="M533.2 719.6L539.6 718L545.9 714.3L553.3 710.1L558.5 706.4L560.7 704.3M562.8 702.2L569.1 698.5M580.7 691.3L587.5 692.2M312 663.5L316 663L319 661.5L322 662.5M325 663L331 663.5L337.5 662" fill="none" stroke="#000" stroke-width="1.7"/>
<path d="M799 562L805 565M790 576L794 577M796 578L800 583L797 588L803 590L799 594L787 596L798 598L803 602L797 606L791 607L799 610L802 615L795 618L788 619L797 622L801 627L796 631L790 633L798 636L802 641L795 645L782 647L794 649L799 653L793 656L788 655L796 659L800 662" fill="none" stroke="#000" stroke-width="1.8"/>
<path d="M299.8 59.1 303.4 56.7 308.4 56.2 314.5 57.9 315.8 64.0 318.2 70.2 323.2 71.4 321.9 75.1 319.5 77.6 320.7 83.7 323.2 89.9 323.2 96.1 320.7 92.4 317.0 85.0 315.3 77.6 314.5 71.4 310.8 65.3 308.4 60.3 304.7 61.6 302.2 63.5Z M368.7 260.3 373.6 257.9 379.8 261.6 388.4 265.3 394.6 271.4 397.0 276.4 392.1 273.9 384.7 269.0 377.3 265.3 372.4 262.8Z M612.9 286.6 616.8 285.3 618.1 290.5 620.7 287.9 622.0 291.8 627.2 293.1 624.6 297.0 620.7 299.6 618.1 303.4 614.2 306.0 611.6 311.2 606.5 313.8 604.7 309.9 609.1 306.0 611.6 300.9 614.2 295.7 612.4 291.8Z M446.8 363.1 451.7 364.5 450.5 368.7 445.6 372.4 444.3 377.3 439.4 376.8 440.6 372.4 443.1 368.7Z M525.6 502.2 528.1 503.4 529.3 507.1 533.0 503.4 534.2 508.4 530.5 515.8 529.3 523.2 533.0 526.8 536.7 524.4 535.0 530.5 533.0 537.9 529.3 534.2 525.6 531.8 526.8 524.4 525.6 518.2 526.8 512.1Z M424.1 413.5 426.6 416.0 427.6 422.2 430.8 428.3 431.5 433.3 429.1 434.5 426.6 428.3 424.6 422.2Z M540.0 601.1 542.4 603.3 543.7 605.5 543.7 612.5 545.5 613.8 548.1 613.0 551.2 613.8 553.4 610.3 555.1 606.4 556.0 603.3 557.8 603.6 557.3 606.4 555.6 610.8 556.9 612.1 562.2 612.1 562.2 610.3 563.8 610.3 563.8 613.8 558.7 613.8 557.3 615.6 554.3 616.0 549.0 616.9 547.7 620.4 545.9 620.0 543.7 617.8 541.4 616.9 541.1 611.6 541.5 606.4 540.0 602.0Z M121.9 658.0 124.4 654.3 129.3 652.4 134.2 653.8 136.7 658.0 135.5 663.0 131.8 667.9 125.6 668.6 121.9 665.4Z M42.4 681.4 45.6 680.7 49.3 683.9 51.7 688.3 48.0 690.0 44.3 686.8Z M59.1 683.9 61.6 687.6 65.3 693.7 67.7 699.9 73.9 703.1 78.8 704.1 83.7 706.1 85.0 709.8 80.0 710.5 73.9 707.3 67.7 706.1 62.8 703.6 60.3 697.4 57.1 692.5 57.9 687.6Z M145.3 696.2 150.2 695.0 153.9 699.9 154.7 706.1 151.5 708.5 147.8 712.2 142.9 713.4 139.9 709.8 142.9 706.1 147.8 703.1 145.3 699.9Z M769.0 792.5 771.0 789.5 774.0 790.0 776.0 788.8 778.0 790.5 777.5 792.5Z M784.0 728.0 787.2 734.4 790.4 739.2 794.4 743.2 796.0 747.2 793.6 754.4 790.4 755.2 787.2 748.8 784.8 744.0 784.0 736.0Z" fill="#2b4768"/>
<path d="M181.0 6.2 189.7 17.2 194.6 29.6 198.3 39.4 200.0 41.9 200.0 91.0 194.6 103.4 188.4 110.8 184.7 133.0 176.1 147.8 174.9 157.6 167.5 170.0 160.1 182.3 152.7 194.6 147.8 205.0 147.8 209.9 151.5 219.7 153.9 224.6 M240.6 6.2 249.3 19.7 259.1 29.6 264.0 46.8 269.0 56.7 281.3 60.3 291.1 59.1 298.5 54.2 308.4 53.0 318.2 59.1 328.1 65.3 337.9 73.9 347.8 81.3 360.1 89.9 370.0 98.5 379.8 105.9 387.2 110.8 394.6 117.0 404.9 134.2 414.8 145.3 424.6 155.2 432.0 162.6 439.4 172.4 445.6 183.5 453.0 192.1 461.6 200.0 471.4 212.3 481.3 227.1 491.1 234.5 501.0 239.4 513.3 236.9 521.9 238.2 M240.6 6.2 232.0 14.8 228.3 24.6 228.3 36.9 227.1 49.3 224.6 56.7 217.2 64.0 207.4 69.0 200.0 72.7 M6.2 257.1 36.9 255.4 61.6 251.7 81.3 244.3 98.5 239.4 110.8 234.5 128.1 227.1 142.9 224.6 152.7 223.4 162.6 224.6 M174.9 224.6 187.2 217.2 200.0 208.6 218.5 200.0 224.6 189.7 239.4 182.3 259.1 174.9 278.8 168.7 298.5 163.8 315.8 160.1 333.0 158.9 347.8 151.5 360.1 147.8 372.4 146.6 383.5 142.9 394.6 140.4 400.0 137.9 414.8 133.0 437.0 131.8 449.3 131.8 464.0 135.5 481.3 139.2 488.7 136.7 508.4 135.5 518.2 137.9 523.2 142.9 537.9 150.2 550.2 157.6 562.6 158.9 572.4 157.6 582.3 161.3 594.6 160.1 600.0 157.7 612.9 150.0 620.7 147.4 636.2 150.0 649.1 147.4 659.5 142.2 675.0 131.9 687.9 125.4 703.4 117.7 713.8 112.5 729.3 103.4 742.2 97.0 755.2 90.5 768.1 86.6 786.2 80.2 805.6 72.4 M160.1 222.2 174.9 222.2 175.5 227.0 174.9 230.8 160.1 230.8 159.5 226.0 160.1 222.2 M163.8 230.8 167.5 249.3 170.0 273.9 173.6 293.6 172.4 310.8 176.1 330.5 177.3 347.8 182.3 362.6 183.5 377.3 182.3 392.1 177.3 400.0 172.4 412.3 165.0 424.6 161.3 436.9 160.1 449.3 155.2 464.0 153.9 471.4 147.8 481.3 142.9 493.6 136.7 508.4 133.0 528.1 130.5 547.8 129.3 572.4 128.1 600.0 126.8 624.8 128.1 639.6 133.0 646.9 135.5 659.3 133.0 669.1 137.9 676.5 147.8 680.2 160.1 683.9 170.0 676.5 179.8 669.1 187.2 654.3 192.1 642.0 M472.7 6.2 472.7 19.7 470.2 32.0 465.3 43.1 456.7 53.0 444.3 57.9 434.5 60.3 430.8 71.4 427.1 81.3 420.9 92.4 414.8 103.4 409.9 112.1 407.0 138.0 403.7 147.8 401.2 160.1 400.0 172.4 398.0 200.0 397.0 239.4 394.6 254.2 397.0 273.9 395.8 298.5 399.5 318.2 398.3 337.9 400.0 347.8 404.0 366.0 407.4 400.0 411.1 414.8 419.7 429.6 424.6 441.9 430.8 456.7 436.9 467.7 439.4 472.7 433.3 483.7 428.3 498.5 422.2 510.8 414.8 523.2 407.4 534.2 400.0 544.1 387.2 557.6 377.3 567.5 362.6 579.8 347.8 589.7 333.0 597.0 320.7 600.0 307.6 610.0 306.4 619.9 305.2 628.5 M399.0 370.0 392.7 375.7 389.2 382.7 383.6 389.8 376.5 395.4 M400.0 98.5 414.8 101.0 429.6 105.9 437.0 115.8 437.0 133.0 430.8 147.8 424.6 157.6 414.8 161.3 402.5 165.0 387.2 162.6 372.4 152.7 367.5 137.9 367.5 128.0 370.0 115.8 382.3 105.9 400.0 98.5 M588.4 6.2 587.2 22.2 592.1 34.5 603.0 40.6 604.0 49.0 602.6 64.6 601.0 75.0 595.0 92.0 590.0 107.0 594.0 118.0 599.5 125.6 606.0 136.0 612.4 144.0 620.7 147.4 M565.0 200.0 570.0 189.7 582.3 172.4 594.6 161.3 M521.9 238.2 533.0 224.6 545.3 214.8 555.2 207.4 560.1 200.0 565.0 200.0 M659.5 142.2 669.8 152.6 673.7 165.5 682.8 170.7 686.6 183.6 700.9 190.1 716.4 188.8 734.5 184.9 750.0 181.0 765.5 177.1 781.0 174.6 796.5 172.0 805.6 175.9 M716.4 190.1 721.5 201.7 731.9 210.3 744.8 216.8 755.2 228.4 761.6 246.5 765.5 264.6 770.7 280.2 781.0 287.9 791.4 298.3 801.7 306.0 805.6 308.6 M409.9 370.0 419.7 357.6 436.9 342.9 451.7 330.5 459.1 323.2 464.0 310.8 473.9 298.5 483.7 283.7 491.1 271.4 497.3 256.7 501.0 244.3 505.9 239.4 M409.9 370.0 424.6 363.8 449.3 362.6 473.9 362.6 493.6 360.1 513.3 356.4 533.0 352.7 544.4 352.2 556.2 352.2 565.0 348.5 575.4 347.7 584.0 352.0 594.6 352.2 606.4 353.7 612.4 358.8 621.2 361.8 630.1 361.1 646.5 365.5 667.2 368.1 687.9 369.4 708.6 372.0 729.3 372.0 744.8 373.3 755.2 372.0 765.5 365.5 775.8 360.3 786.2 355.2 796.5 347.4 805.6 339.6 M521.9 238.2 528.1 245.6 535.5 251.7 537.9 266.5 542.9 278.8 545.3 293.6 552.7 303.4 557.6 315.8 570.0 323.2 572.4 333.0 579.8 342.9 583.5 355.0 591.7 367.0 597.6 374.4 602.0 381.7 604.2 389.1 607.9 396.5 610.9 403.9 615.3 409.8 622.7 415.7 627.1 421.7 631.6 430.5 633.1 436.4 631.6 442.4 629.7 464.6 629.0 490.5 632.3 516.4 638.8 531.9 646.5 544.8 651.7 565.5 655.6 586.2 660.8 604.3 663.0 610.0 672.9 627.2 687.6 642.0 700.0 654.3 712.3 666.7 718.0 685.8 723.2 702.4 731.2 715.2 739.2 728.0 744.0 739.2 747.2 752.0 748.8 766.5 752.0 776.1 754.9 792.0 M583.5 293.6 577.3 305.9 572.4 320.7 570.0 328.1 577.3 340.4 583.5 350.0 M584.6 335.5 591.0 338.0 593.9 348.5 591.5 358.0 584.6 361.8 578.0 358.5 575.4 348.5 578.0 338.5 584.6 335.5 M627.1 421.7 633.1 423.1 638.2 427.6 639.0 432.0 634.5 436.4 M583.5 350.0 600.0 331.9 612.9 321.5 631.0 313.8 646.5 306.0 662.1 297.0 677.6 287.9 690.5 282.8 703.4 277.6 716.4 269.8 724.1 264.6 729.3 255.6 739.6 251.7 750.0 246.5 760.3 241.4 775.8 233.6 791.4 227.1 805.6 223.3 M739.6 251.7 740.9 262.1 752.6 269.8 765.5 278.9 M583.5 355.0 578.4 359.6 571.0 365.5 563.6 372.9 556.9 380.3 552.5 389.1 551.0 396.5 545.8 403.9 541.4 412.8 534.0 418.7 528.1 424.6 524.4 429.1 519.2 436.4 513.3 445.3 508.9 450.0 498.5 456.7 483.7 462.8 469.0 467.7 454.2 472.7 439.4 472.7 M634.5 436.4 640.0 437.0 646.5 441.4 662.1 451.7 682.8 460.8 708.6 465.9 734.5 469.8 760.3 475.0 781.0 482.8 799.1 486.6 805.6 493.1 M805.6 537.1 799.1 555.2 791.4 581.0 786.2 596.5 785.0 603.1 786.0 618.8 787.9 632.6 788.9 642.5 786.0 654.3 787.9 666.1 795.8 674.0 801.7 683.8 805.7 700.0 M6.2 460.3 24.6 462.8 49.3 465.3 73.9 469.0 88.7 473.9 98.5 476.4 110.8 473.9 133.0 472.7 147.8 478.8 152.7 480.0 172.4 478.8 187.2 477.6 200.0 475.1 224.6 473.9 256.7 473.9 271.4 470.2 283.7 465.3 293.6 456.7 301.0 446.8 310.8 434.5 323.2 423.4 333.0 413.5 342.9 403.7 352.7 401.2 367.5 400.0 380.0 392.0 395.0 380.0 409.9 370.0 M256.7 473.9 251.7 483.7 246.8 503.4 236.9 515.8 235.7 525.6 227.1 537.9 217.2 550.2 214.8 572.4 211.1 589.7 206.2 600.0 203.0 610.0 199.3 624.8 191.9 637.1 186.9 649.4 185.7 655.6 182.0 664.2 169.7 676.5 159.9 683.9 M6.2 660.5 19.7 658.0 36.9 653.1 56.7 646.9 73.9 643.3 93.6 642.0 110.8 640.8 128.1 639.6 147.8 640.8 164.8 644.5 179.6 649.4 186.9 655.6 199.3 655.6 214.0 649.4 231.3 644.5 248.5 642.0 265.8 643.3 283.0 640.8 297.8 634.6 307.6 628.5 319.9 624.8 332.3 626.0 340.0 626.0 354.8 632.2 369.6 635.9 384.3 634.6 394.2 624.8 409.0 619.9 423.7 618.6 443.4 616.2 458.2 621.1 473.0 617.4 487.8 614.9 502.6 616.2 517.3 616.2 532.1 619.9 544.8 627.2 559.6 634.6 579.3 640.8 599.0 639.6 618.7 640.8 638.4 644.5 650.0 643.4 669.7 650.3 685.5 653.3 701.2 659.2 715.0 662.2 738.7 662.2 756.4 658.2 772.2 656.3 786.0 654.3 M93.6 643.3 93.6 659.3 103.4 669.1 118.2 672.8 133.0 675.3 147.8 681.4 160.1 683.9 M6.2 616.2 12.3 627.2 11.1 644.5 14.8 659.3 M786.0 643.0 792.0 648.0 793.0 658.0 789.0 668.0 781.0 668.0 778.0 656.0 780.0 646.0 786.0 643.0" fill="none" stroke="#7b6914" stroke-width="1"/>
<path d="M201.2 6.2C202.1 8.4 203.1 10.8 204.9 14.8C206.8 18.8 208.3 18.5 208.6 22.2C208.9 25.9 207.7 26.8 206.2 29.6C204.7 32.4 202.8 30.8 202.5 33.3C202.2 35.8 203.1 36.3 204.9 39.4C206.8 42.5 208.1 42.2 209.9 45.6C211.8 49.0 212.0 49.9 212.3 53.0C212.6 56.1 209.9 55.8 211.1 57.9C212.3 60.0 214.1 61.6 217.2 61.6C220.3 61.6 220.9 60.0 223.4 57.9C225.9 55.8 226.5 52.4 227.1 53.0C227.7 53.6 224.7 57.5 225.9 60.3C227.1 63.0 230.8 61.2 232.0 64.0C233.2 66.8 232.3 68.9 230.8 71.4C229.3 73.9 225.9 72.1 225.9 73.9C225.9 75.8 229.9 76.3 230.8 78.8C231.7 81.2 231.2 81.5 229.6 83.7C228.0 85.9 225.5 84.6 224.6 87.4C223.7 90.2 226.8 92.0 225.9 94.8C225.0 97.6 223.7 98.8 220.9 98.5C218.1 98.2 217.2 93.6 214.8 93.6C212.4 93.6 212.7 95.7 211.1 98.5C209.5 101.3 210.1 102.2 208.6 104.7C207.1 107.2 206.4 108.1 204.9 108.4C203.4 108.7 203.7 107.2 202.5 105.9C201.3 104.7 201.4 105.2 200.0 103.4C198.6 101.6 198.1 97.2 197.0 98.5C195.9 99.8 195.2 104.7 195.8 108.4C196.4 112.1 199.8 110.8 199.5 113.3C199.2 115.8 195.2 115.7 194.6 118.2C194.0 120.7 198.2 120.7 197.0 123.2C195.8 125.7 191.2 125.3 189.7 128.1C188.2 130.8 189.7 131.8 190.9 134.2C192.1 136.6 195.5 135.7 194.6 137.9C193.7 140.1 188.8 139.8 187.2 142.9C185.6 146.0 187.2 147.1 188.4 150.2C189.6 153.3 193.0 153.3 192.1 155.2C191.2 157.0 186.8 155.8 184.7 157.6C182.5 159.4 182.2 162.0 183.5 162.6C184.8 163.2 188.8 158.9 189.7 160.1C190.6 161.3 189.7 165.0 187.2 167.5C184.7 170.0 183.5 168.8 179.8 170.0C176.1 171.2 174.9 170.6 172.4 172.4C169.9 174.2 169.1 175.2 170.0 177.3C170.9 179.5 175.5 178.8 176.1 181.0C176.7 183.2 175.2 184.2 172.4 186.0C169.6 187.8 165.6 186.6 165.0 188.4C164.4 190.2 170.6 191.8 170.0 193.3C169.4 194.9 165.7 193.7 162.6 194.6C159.5 195.5 158.2 195.7 157.6 197.0C157.0 198.3 160.7 198.0 160.1 200.0C159.5 202.0 155.2 202.4 155.2 204.9C155.2 207.4 159.5 206.8 160.1 209.9C160.7 213.0 157.3 213.8 157.6 217.2C157.9 220.6 162.5 220.9 161.3 223.4C160.1 225.9 155.8 224.6 152.7 227.1C149.6 229.6 151.4 230.5 149.0 233.3C146.6 236.1 143.2 235.8 142.9 238.2C142.6 240.6 147.2 240.3 147.8 243.1C148.4 245.9 147.8 247.2 145.3 249.3C142.8 251.5 141.0 252.0 137.9 251.7C134.8 251.4 135.2 247.7 133.0 248.0C130.8 248.3 129.6 250.5 129.3 253.0C129.0 255.5 132.7 255.7 131.8 257.9C130.9 260.0 125.9 259.5 125.6 261.6C125.3 263.8 130.5 264.1 130.5 266.5C130.5 268.9 127.4 271.4 125.6 271.4C123.8 271.4 123.8 265.2 123.2 266.5C122.6 267.8 123.2 270.8 123.2 276.4C123.2 281.9 124.5 284.4 123.2 288.7C122.0 293.0 120.7 292.1 118.2 293.6C115.7 295.1 113.9 293.2 113.3 294.8C112.7 296.4 117.0 298.2 115.8 299.8C114.6 301.4 111.2 299.5 108.4 301.0C105.6 302.5 107.2 304.4 104.7 305.9C102.2 307.4 98.8 305.6 98.5 307.1C98.2 308.7 103.4 309.9 103.4 312.1C103.4 314.3 100.7 315.2 98.5 315.8C96.3 316.4 95.1 313.3 94.8 314.5C94.5 315.7 96.4 317.9 97.3 320.7C98.2 323.5 99.7 323.5 98.5 325.6C97.3 327.8 95.5 328.7 92.4 329.3C89.3 329.9 87.5 326.9 86.2 328.1C85.0 329.3 86.2 331.8 87.4 334.2C88.6 336.6 91.1 335.7 91.1 337.9C91.1 340.1 87.1 340.7 87.4 342.9C87.7 345.1 92.4 345.1 92.4 346.6C92.4 348.1 90.2 348.7 87.4 349.0C84.6 349.3 82.5 346.6 81.3 347.8C80.1 349.0 81.0 351.8 82.5 353.9C84.0 356.0 88.3 356.4 87.4 356.4C86.5 356.4 81.9 353.6 78.8 353.9C75.7 354.2 75.1 355.1 75.1 357.6C75.1 360.1 78.8 360.7 78.8 363.8C78.8 366.9 75.1 367.9 75.1 370.0C75.1 372.1 76.3 370.9 78.8 372.4C81.3 373.9 84.1 373.6 85.0 376.1C85.9 378.6 84.0 381.7 82.5 382.3C81.0 382.9 79.1 377.4 78.8 378.6C78.5 379.8 79.4 384.1 81.3 387.2C83.2 390.3 84.7 389.0 86.2 390.9C87.7 392.8 87.7 392.3 87.4 394.6C87.1 396.9 87.2 397.4 85.0 400.0C82.8 402.6 79.1 402.1 78.8 404.9C78.5 407.7 84.3 407.7 83.7 411.1C83.1 414.5 77.3 414.8 76.4 418.5C75.5 422.2 77.5 425.0 80.0 425.9C82.5 426.8 85.0 420.7 86.2 422.2C87.5 423.7 86.5 428.3 85.0 432.0C83.5 435.7 80.9 433.5 80.0 436.9C79.1 440.3 79.1 442.2 81.3 445.6C83.5 449.0 86.2 447.7 88.7 450.5C91.2 453.3 92.0 454.5 91.1 456.7C90.2 458.9 85.9 457.0 85.0 459.1C84.1 461.2 85.0 463.5 87.4 465.3C89.9 467.1 93.2 464.6 94.8 466.5C96.3 468.4 92.3 471.5 93.6 472.7C94.8 473.9 98.6 470.2 99.8 471.4C101.0 472.6 100.3 475.5 98.5 477.6C96.7 479.8 93.6 478.1 92.4 480.0C91.2 481.9 95.4 483.8 93.6 485.0C91.8 486.2 88.7 483.8 85.0 485.0C81.3 486.2 79.7 487.4 78.8 489.9C77.9 492.3 78.5 494.2 81.3 494.8C84.1 495.4 88.7 491.1 89.9 492.4C91.1 493.6 88.1 496.4 86.2 499.8C84.3 503.2 85.0 503.1 82.5 505.9C80.0 508.6 78.9 508.0 76.4 510.8C74.0 513.6 75.2 514.5 72.7 517.0C70.2 519.5 68.3 518.2 66.5 520.7C64.7 523.2 64.1 525.3 65.3 526.8C66.5 528.3 70.5 527.7 71.4 526.8C72.3 525.9 71.2 522.3 69.0 523.2C66.8 524.1 65.3 526.8 62.8 530.5C60.3 534.2 61.5 536.0 59.1 537.9C56.7 539.8 53.6 536.0 53.0 537.9C52.4 539.8 57.6 542.8 56.7 545.3C55.8 547.8 51.5 544.7 49.3 547.8C47.1 550.9 46.8 554.2 48.0 557.6C49.2 561.0 53.0 558.2 54.2 561.3C55.5 564.4 55.5 567.8 53.0 570.0C50.5 572.2 45.5 567.5 44.3 570.0C43.0 572.5 47.7 575.5 48.0 579.8C48.3 584.1 45.3 584.4 45.6 587.2C45.9 590.0 49.6 589.0 49.3 590.9C49.0 592.8 45.5 593.7 44.3 594.6 M227.1 53.0 232.0 43.1 239.4 39.4 246.8 40.6 253.0 44.3 261.6 45.6 267.7 49.3 273.9 54.2 280.0 53.0 282.5 48.0 281.3 41.9 277.6 36.9 278.8 29.6 283.7 23.4 291.1 20.9 301.0 18.5 308.4 16.0 308.4 9.9 305.9 6.2 M6.0 105.2 155.2 105.2 156.4 110.8 161.3 114.5 160.1 123.2 155.2 129.3 147.8 135.5 142.9 142.9 137.9 149.0 187.2 149.0 M6.0 415.3 77.6 415.3 M208.6 104.7 312.1 105.2 312.6 98.5 309.6 88.7 318.2 89.2 323.2 91.6 400.0 91.1 459.1 93.1 508.4 94.1 600.0 96.8 633.6 97.5 700.0 96.2 787.5 94.4 806.0 98.0 M142.9 238.2 299.8 237.6 400.0 238.2 492.4 238.7 600.0 239.3 677.6 238.3 M299.8 237.6 302.2 243.1 307.1 246.8 305.9 264.0 302.2 298.5 298.5 337.9 294.8 372.4 291.6 400.0 287.4 436.9 283.7 469.0 280.0 505.9 279.3 518.2 280.8 547.8 282.0 577.3 283.3 600.0 284.6 640.9 286.4 648.0 M44.3 594.3 185.5 594.6 178.3 612.0 176.5 626.5 183.7 637.3 189.1 646.3 190.9 655.3 194.5 664.3 196.3 669.7 M492.4 238.7 498.5 273.9 503.4 298.5 508.4 328.1 513.3 357.6 517.0 382.3 519.5 400.0 523.2 417.2 525.6 429.6 529.3 441.9 534.2 454.2 539.2 464.0 537.9 473.9 545.3 481.3 544.1 486.2 536.7 488.7 533.0 496.1 533.0 503.4 M533.0 537.9 534.2 547.8 531.8 560.1 529.3 572.4 533.0 582.3 536.7 592.1 539.2 598.0 540.0 601.0 M534.6 594.6 344.1 594.6 340.4 604.8 354.8 617.4 360.2 633.7 356.6 644.5 352.0 657.0 M547.2 620.4 559.0 620.9 581.5 621.3 604.4 623.1 620.0 623.5 650.0 625.7 743.6 632.2 745.6 640.5 746.6 649.4 752.5 651.3 758.0 650.3 758.8 642.5 760.3 632.6 758.0 622.8 758.4 614.9 763.3 610.0 768.2 609.4 772.2 611.9 780.0 614.5 787.9 616.8 M677.6 238.3 669.8 246.5 663.4 254.3 660.8 263.4 667.2 269.8 675.0 275.0 682.8 282.8 687.9 284.0 694.4 284.0 698.3 290.5 702.1 298.3 706.0 308.6 711.2 316.4 716.4 326.7 722.8 333.2 731.9 339.6 739.6 347.4 744.8 355.2 750.0 361.6 757.7 365.5 762.9 372.0 766.8 378.4 765.5 384.9 770.7 390.1 775.8 396.5 778.4 400.0 783.6 406.5 792.7 410.3 799.1 419.4 801.7 428.4 804.3 436.2 805.6 441.4 M677.6 238.3 687.9 233.6 703.4 230.5 711.2 225.9 721.5 223.3 731.9 220.7 740.9 220.2 755.2 220.7 781.0 222.0 805.6 223.3 M787.5 94.4 783.6 100.9 781.0 111.2 782.3 119.0 775.8 117.7 768.1 122.8 761.6 134.5 755.2 139.6 744.8 135.8 734.5 139.6 726.7 148.7 719.0 152.6 715.1 147.4 711.2 143.5 703.4 150.0 698.3 155.2 693.1 155.2 691.8 162.9 685.3 169.4 677.6 168.1 669.8 173.3 662.1 178.4 651.7 186.2 638.8 186.2 625.9 190.1 615.5 196.5 611.6 200.0 610.3 210.3 602.6 215.5 595.8 214.8 590.9 217.2 589.7 224.6 588.4 238.7 M634.9 96.8 645.3 89.2 659.5 85.3 676.3 82.8 682.8 75.0 695.7 71.1 698.3 62.1 706.0 56.9 707.3 49.1 724.1 41.4 739.6 34.9 750.0 25.9 757.7 19.4 762.9 15.5 761.6 11.6 755.2 10.3 748.7 6.5 M762.9 15.5 765.5 23.3 772.0 29.7 778.4 36.2 784.9 41.4 794.0 40.1 801.7 36.2 805.6 32.3" fill="none" stroke="#000" stroke-width="1.1" stroke-linejoin="round"/>
<circle cx="406" cy="407" r="159" fill="none" stroke="#d8d8d8" stroke-width="1" shape-rendering="crispEdges"/>
<circle cx="406" cy="407" r="279" fill="none" stroke="#d8d8d8" stroke-width="1" shape-rendering="crispEdges"/>
<circle cx="406" cy="407" r="399" fill="none" stroke="#d8d8d8" stroke-width="1" shape-rendering="crispEdges"/>
<circle cx="406" cy="407" r="519" fill="none" stroke="#d8d8d8" stroke-width="1" shape-rendering="crispEdges"/>
<rect x="395.0" y="6.5" width="21.4" height="3" fill="#5d4f4a"/>
<text x="395.7" y="11" font-family="DejaVu Sans, Liberation Sans, sans-serif" font-size="9.7" letter-spacing="0.65" fill="#ffff96" shape-rendering="auto">313</text>
<rect x="395.0" y="126.5" width="21.4" height="3" fill="#5d4f4a"/>
<text x="395.7" y="131" font-family="DejaVu Sans, Liberation Sans, sans-serif" font-size="9.7" letter-spacing="0.65" fill="#ffff96" shape-rendering="auto">219</text>
<rect x="395.0" y="246.5" width="21.4" height="3" fill="#5d4f4a"/>
<text x="395.7" y="251" font-family="DejaVu Sans, Liberation Sans, sans-serif" font-size="9.7" letter-spacing="0.65" fill="#ffff96" shape-rendering="auto">125</text>
<text x="399.1" y="371" font-family="DejaVu Sans, Liberation Sans, sans-serif" font-size="9.7" letter-spacing="0.65" fill="#ffff96" shape-rendering="auto">31</text>
<circle cx="406" cy="407" r="39.5" fill="none" stroke="#ff0000" stroke-width="1" shape-rendering="geometricPrecision"/>
</g>
<rect x="8" y="758" width="245" height="45" fill="#000"/>
<rect x="9.5" y="759.5" width="243" height="43" fill="none" stroke="#a0a0a0" stroke-width="1"/>
<text x="13.1" y="770.8" font-family="Liberation Sans, DejaVu Sans, sans-serif" font-size="9.5" fill="#fff" textLength="35.7" lengthAdjust="spacingAndGlyphs">Symbols</text>
<text x="53.1" y="770.8" font-family="Liberation Sans, DejaVu Sans, sans-serif" font-size="9.5" fill="#fff" textLength="16.9" lengthAdjust="spacingAndGlyphs">-CG</text>
<text x="78" y="770.8" font-family="Liberation Sans, DejaVu Sans, sans-serif" font-size="9.5" fill="#fff" textLength="14.5" lengthAdjust="spacingAndGlyphs">-IC</text>
<text x="99" y="770.8" font-family="Liberation Sans, DejaVu Sans, sans-serif" font-size="9.5" fill="#fff" textLength="19.8" lengthAdjust="spacingAndGlyphs">+CG</text>
<text x="123.4" y="770.8" font-family="Liberation Sans, DejaVu Sans, sans-serif" font-size="9.5" fill="#fff" textLength="18.0" lengthAdjust="spacingAndGlyphs">+IC</text>
<text x="153.2" y="770.8" font-family="Liberation Sans, DejaVu Sans, sans-serif" font-size="9.5" fill="#dce6ff" textLength="89.9" lengthAdjust="spacingAndGlyphs">Strike age color codes</text>
<text x="13.1" y="783.8" font-family="Liberation Sans, DejaVu Sans, sans-serif" font-size="9.5" fill="#fff" textLength="27.9" lengthAdjust="spacingAndGlyphs">Recent</text>
<text x="13.1" y="796.6" font-family="Liberation Sans, DejaVu Sans, sans-serif" font-size="9.5" fill="#fff" textLength="14.4" lengthAdjust="spacingAndGlyphs">Old</text>
<g stroke="#00ffff" stroke-width="1" fill="none"><circle cx="60.5" cy="780.5" r="4.3"/><path d="M58 780.5H63"/><path d="M82 780.5H89"/><circle cx="110.5" cy="780.5" r="4.3"/><path d="M108 780.5H113M110.5 778.0V783.0"/><path d="M132 780.5H139M135.5 777.0V784.0"/></g>
<g stroke="#ffff00" stroke-width="1" fill="none"><circle cx="60.5" cy="793.5" r="4.3"/><path d="M58 793.5H63"/><path d="M82 793.5H89"/><circle cx="110.5" cy="793.5" r="4.3"/><path d="M108 793.5H113M110.5 791.0V796.0"/><path d="M132 793.5H139M135.5 790.0V797.0"/></g>
<text x="154" y="783.8" font-family="Liberation Sans, DejaVu Sans, sans-serif" font-size="9.5" fill="#f0d000" textLength="15.4" lengthAdjust="spacingAndGlyphs">15+</text>
<text x="188.6" y="783.8" font-family="Liberation Sans, DejaVu Sans, sans-serif" font-size="9.5" fill="#f0a800" textLength="16.0" lengthAdjust="spacingAndGlyphs">30+</text>
<text x="223.1" y="783.8" font-family="Liberation Sans, DejaVu Sans, sans-serif" font-size="9.5" fill="#e89000" textLength="16.6" lengthAdjust="spacingAndGlyphs">45+</text>
<text x="154" y="796.6" font-family="Liberation Sans, DejaVu Sans, sans-serif" font-size="9.5" fill="#e07800" textLength="15.4" lengthAdjust="spacingAndGlyphs">60+</text>
<text x="188.6" y="796.6" font-family="Liberation Sans, DejaVu Sans, sans-serif" font-size="9.5" fill="#e05800" textLength="16.0" lengthAdjust="spacingAndGlyphs">75+</text>
<text x="223.1" y="796.6" font-family="Liberation Sans, DejaVu Sans, sans-serif" font-size="9.5" fill="#e03000" textLength="16.6" lengthAdjust="spacingAndGlyphs">90+</text>
<rect x="685" y="792" width="121" height="14" fill="#000"/>
<text x="689.5" y="802.5" font-family="Liberation Sans, DejaVu Sans, sans-serif" font-size="10.2" fill="#fff" textLength="113" lengthAdjust="spacingAndGlyphs">©2005 Astrogenic Systems</text>
</svg>
<div class="panel" style="left:812px;top:8px;width:320px;height:320px;"></div>
<div class="panel" style="left:812px;top:333px;width:320px;height:115px;"></div>
<div class="panel" style="left:812px;top:453px;width:320px;height:350px;"></div>
<div class="btn tb" style="left:819px;top:16px;width:58px;height:18px;background:#5a0000;color:#e0c8c8;line-height:18.4px;font-size:13.6px;letter-spacing:0.1px;">STRIKE</div>
<div class="btn tb" style="left:883px;top:16px;width:58px;height:18px;background:#333;color:#c8c8c8;line-height:18.4px;font-size:13.6px;letter-spacing:0.7px;">NOISE</div>
<div class="btn tb" style="left:994px;top:16px;width:128px;height:18px;background:#333;line-height:18.4px;font-size:13.6px;"><span style="position:absolute;left:4px;top:0;color:#fff;">Bng 26°</span><span style="position:absolute;right:3px;top:0;color:#00f000;">280mi</span></div>
<div class="lbl" style="left:821px;top:64px;">Strikes/min</div>
<div class="lbl" style="left:931px;top:64px;">Close/min</div>
<div class="lbl" style="left:1041px;top:64px;">Noises/min</div>
<div class="big" style="left:843px;top:87.4px;color:#fff;">0</div>
<div class="big" style="left:953px;top:87.4px;color:#fff;">0</div>
<div class="big" style="left:1063px;top:87.4px;color:#c0c0c0;">0</div>
<div class="abs v" style="right:235px;top:130.6px;">Total Strikes</div>
<div class="abs v" style="right:235px;top:148.6px;">25</div>
<div class="abs v" style="right:125px;top:130.6px;">Total Close</div>
<div class="abs v" style="right:125px;top:148.6px;">0</div>
<div class="abs v g" style="right:15px;top:130.6px;">Total Noises</div>
<div class="abs v" style="right:15px;top:148.6px;">84</div>
<div class="abs v g" style="left:821px;top:202.6px;">Lightning type distribution</div>
<div class="abs" style="left:821px;top:217px;width:303px;height:1px;background:#a8a8a8;"></div>
<div class="abs tb" style="left:821px;top:224.5px;">Cloud-ground</div>
<div class="abs v g" style="left:913px;top:223.6px;">+</div>
<div class="bar" style="left:925px;top:227px;"><i style="width:16px;background:#ff0000;"></i></div>
<div class="abs tb" style="left:979px;top:224.5px;font-size:13.6px;">32%</div>
<div class="abs" style="left:1016px;top:231px;width:7px;height:2px;background:#c8c8c8;"></div>
<div class="bar" style="left:1028px;top:227px;"><i style="width:18px;background:#8fcfff;"></i></div>
<div class="abs tb" style="left:1082px;top:224.5px;font-size:13.6px;">36%</div>
<div class="abs tb" style="left:821px;top:278.5px;">Intracloud</div>
<div class="abs v g" style="left:913px;top:277.6px;">+</div>
<div class="bar" style="left:925px;top:281px;"><i style="width:12px;background:#ee5fae;"></i></div>
<div class="abs tb" style="left:979px;top:278.5px;font-size:13.6px;">24%</div>
<div class="abs" style="left:1016px;top:285px;width:7px;height:2px;background:#c8c8c8;"></div>
<div class="bar" style="left:1028px;top:281px;"><i style="width:4px;background:#00ff00;"></i></div>
<div class="abs tb" style="left:1082px;top:278.5px;font-size:13.6px;">8%</div>
<div class="abs tb g" style="left:821px;top:248.5px;">Count</div>
<div class="abs tb" style="left:925px;top:248.5px;">8</div>
<div class="abs tb" style="left:1028px;top:248.5px;">9</div>
<div class="abs tb g" style="left:821px;top:302.5px;">Count</div>
<div class="abs tb" style="left:925px;top:302.5px;">6</div>
<div class="abs tb" style="left:1028px;top:302.5px;">2</div>
<div class="abs" style="left:821px;top:336.5px;font-family:DejaVu Sans,Liberation Sans,sans-serif;font-weight:bold;font-size:15.2px;line-height:22px;color:#00fa00;letter-spacing:0px;transform:scaleX(1.09);transform-origin:0 0;">2/23/2026 5:45:02 PM</div>
<div class="abs" style="left:821px;top:358px;width:303px;height:1px;background:#a8a8a8;"></div>
<div class="abs v" style="left:821px;top:375.6px;">Squelch</div>
<div class="abs v" style="left:909px;top:375.6px;">0</div>
<div class="abs v" style="left:981px;top:375.6px;">Upload</div>
<div class="abs v g" style="left:1061px;top:375.6px;">Disabled</div>
<div class="abs v" style="left:821px;top:395.6px;">Persistence</div>
<div class="abs v" style="left:909px;top:395.6px;">90 min</div>
<div class="abs v" style="left:981px;top:395.6px;">Capture</div>
<div class="abs v gr" style="left:1061px;top:395.6px;">Active</div>
<div class="abs v" style="left:821px;top:415.6px;">Range</div>
<div class="abs v" style="left:909px;top:415.6px;">313 mi</div>
<div class="abs v" style="left:981px;top:415.6px;">Receiver</div>
<div class="abs v gr" style="left:1061px;top:415.6px;">Enabled</div>
<div class="abs v g" style="left:821px;top:462.6px;">Uptime</div>
<div class="abs v" style="left:909px;top:462.6px;">1013:30</div>
<div class="abs v g" style="left:981px;top:462.6px;">Peak time</div>
<div class="abs v g" style="left:1061px;top:462.6px;">Plot</div>
<div class="abs v g" style="left:821px;top:485.6px;">Peak rate</div>
<div class="abs v" style="left:909px;top:485.6px;">2/min</div>
<div class="abs v" style="left:981px;top:485.6px;">4:12 AM</div>
<div class="abs v" style="left:1061px;top:485.6px;">Strike</div>
<div class="abs v g" style="left:822px;top:515.6px;">Trend graph</div>
<div class="abs v" style="left:908px;top:515.6px;">60 min</div>
<svg class="abs" style="left:812px;top:453px;" width="320" height="350" viewBox="812 453 320 350" shape-rendering="crispEdges">
<g stroke="#c8c8c8" stroke-width="1" fill="none"><path d="M1088.5 542V778M822 777.5H1089"/><path d="M822.5 775V778"/><path d="M866.5 775V778"/><path d="M911.5 775V778"/><path d="M955.5 775V778"/><path d="M1000.5 775V778"/><path d="M1044.5 775V778"/><path d="M1088.5 775V778"/><path d="M1084 542.5H1088"/><path d="M1086 581.5H1088"/><path d="M1084 620.5H1088"/><path d="M1086 660.5H1088"/><path d="M1084 699.5H1088"/><path d="M1086 738.5H1088"/></g>
<g class="ax" fill="#c8c8c8" font-size="12" font-family="Liberation Sans, DejaVu Sans, sans-serif" shape-rendering="auto"><text x="820.0" y="792.5">60</text><text x="864.4" y="792.5">50</text><text x="908.8" y="792.5">40</text><text x="953.2" y="792.5">30</text><text x="997.6" y="792.5">20</text><text x="1042.0" y="792.5">10</text><text x="1087.9" y="792.5">0</text><text x="1100" y="792.5">min</text><text x="1092" y="546.5">30</text><text x="1092" y="624.9">20</text><text x="1092" y="703.3">10</text></g></svg>
</body></html>
